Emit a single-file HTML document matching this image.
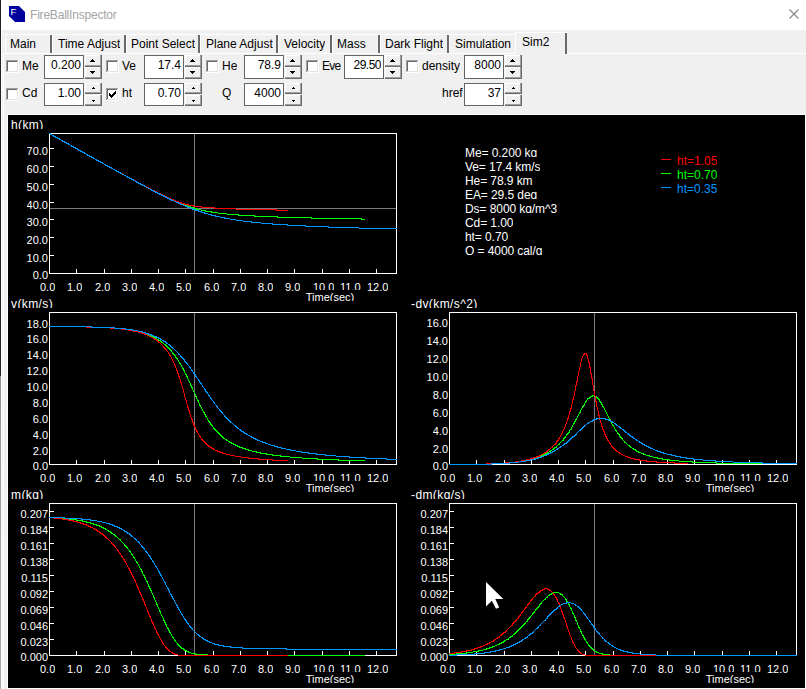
<!DOCTYPE html>
<html><head><meta charset="utf-8"><style>
*{margin:0;padding:0;box-sizing:content-box}
html,body{width:806px;height:689px;overflow:hidden;background:#f0f0f0;font-family:"Liberation Sans", sans-serif;position:relative}
.t{position:absolute;white-space:nowrap;overflow:hidden;line-height:20px}
.cb{position:absolute;width:11px;height:11px;background:#fff;border-top:1px solid #7a7a7a;border-left:1px solid #7a7a7a;border-right:1px solid #f8f8f8;border-bottom:1px solid #f8f8f8;box-shadow:inset 1px 1px 0 #a0a0a0}
.tb{position:absolute;background:#fff;border:1px solid #7a7a7a}
.sp{position:absolute;box-sizing:border-box;background:#f0f0f0;border-top:1px solid #fff;border-left:1px solid #fff;border-right:2px solid #696969;border-bottom:2px solid #696969}
.ar{position:absolute}
.tab{position:absolute;box-sizing:border-box;background:#f0f0f0;border-top:1px solid #fff;border-left:1px solid #fff;border-right:1px solid #696969}
.tabsel{position:absolute;box-sizing:border-box;background:#f0f0f0;border-top:1px solid #fff;border-left:1px solid #fff;border-right:2px solid #696969}
#title{position:absolute;left:0;top:0;width:806px;height:30px;background:#fff}
#lb{position:absolute;left:0;top:0;width:1px;height:689px;background:#2a2a2a}
#canvas{position:absolute;left:7px;top:114px;width:797px;height:573px;background:#000;border-right:1px solid #fff;border-bottom:1px solid #fff;border-left:1px solid #fff;border-top:1px solid #fff}
</style></head><body>
<div id="title"></div>
<svg style="position:absolute;left:0;top:0" width="806" height="30">
<path d="M9,6 L19,6 L25,12 L25,22 L15,22 L9,16 Z" fill="#00009c"/>
<text x="10.5" y="14.6" font-family="Liberation Sans" font-size="9.5" fill="#fff">F</text>
<path d="M789.5,9.5 L798.5,18.5 M798.5,9.5 L789.5,18.5" stroke="#8a8a8a" stroke-width="1.2"/>
</svg>
<div class="t" style="left:30px;top:5px;height:20px;font-size:12px;color:#a4a4a4;letter-spacing:-0.2px">FireBallInspector</div>
<div style="position:absolute;left:5px;top:34px;width:47px;height:19px;background:#fff"></div><div style="position:absolute;left:6px;top:35px;width:46px;height:18px;background:#f0f0f0"></div><div style="position:absolute;left:50px;top:35px;width:2px;height:18px;background:#696969"></div><div class="t" style="left:10px;top:34px;height:20px;font-size:12px;color:#000;">Main</div><div style="position:absolute;left:52px;top:34px;width:74px;height:19px;background:#fff"></div><div style="position:absolute;left:53px;top:35px;width:73px;height:18px;background:#f0f0f0"></div><div style="position:absolute;left:124px;top:35px;width:2px;height:18px;background:#696969"></div><div class="t" style="left:58px;top:34px;height:20px;font-size:12px;color:#000;">Time Adjust</div><div style="position:absolute;left:126px;top:34px;width:74px;height:19px;background:#fff"></div><div style="position:absolute;left:127px;top:35px;width:73px;height:18px;background:#f0f0f0"></div><div style="position:absolute;left:198px;top:35px;width:2px;height:18px;background:#696969"></div><div class="t" style="left:131px;top:34px;height:20px;font-size:12px;color:#000;">Point Select</div><div style="position:absolute;left:200px;top:34px;width:78px;height:19px;background:#fff"></div><div style="position:absolute;left:201px;top:35px;width:77px;height:18px;background:#f0f0f0"></div><div style="position:absolute;left:276px;top:35px;width:2px;height:18px;background:#696969"></div><div class="t" style="left:206px;top:34px;height:20px;font-size:12px;color:#000;">Plane Adjust</div><div style="position:absolute;left:278px;top:34px;width:54px;height:19px;background:#fff"></div><div style="position:absolute;left:279px;top:35px;width:53px;height:18px;background:#f0f0f0"></div><div style="position:absolute;left:330px;top:35px;width:2px;height:18px;background:#696969"></div><div class="t" style="left:284px;top:34px;height:20px;font-size:12px;color:#000;">Velocity</div><div style="position:absolute;left:332px;top:34px;width:48px;height:19px;background:#fff"></div><div style="position:absolute;left:333px;top:35px;width:47px;height:18px;background:#f0f0f0"></div><div style="position:absolute;left:378px;top:35px;width:2px;height:18px;background:#696969"></div><div class="t" style="left:337px;top:34px;height:20px;font-size:12px;color:#000;">Mass</div><div style="position:absolute;left:380px;top:34px;width:69px;height:19px;background:#fff"></div><div style="position:absolute;left:381px;top:35px;width:68px;height:18px;background:#f0f0f0"></div><div style="position:absolute;left:447px;top:35px;width:2px;height:18px;background:#696969"></div><div class="t" style="left:385px;top:34px;height:20px;font-size:12px;color:#000;">Dark Flight</div><div style="position:absolute;left:449px;top:34px;width:68px;height:19px;background:#fff"></div><div style="position:absolute;left:450px;top:35px;width:67px;height:18px;background:#f0f0f0"></div><div style="position:absolute;left:515px;top:35px;width:2px;height:18px;background:#696969"></div><div class="t" style="left:455px;top:34px;height:20px;font-size:12px;color:#000;">Simulation</div><div style="position:absolute;left:515px;top:32px;width:52px;height:22px;background:#fff"></div><div style="position:absolute;left:516px;top:33px;width:51px;height:21px;background:#f0f0f0"></div><div style="position:absolute;left:565px;top:33px;width:2px;height:21px;background:#696969"></div><div class="t" style="left:522px;top:32px;height:20px;font-size:12px;color:#000;">Sim2</div>
<div style="position:absolute;left:3px;top:53px;width:512px;height:1px;background:#fff"></div><div style="position:absolute;left:567px;top:53px;width:239px;height:1px;background:#fff"></div>
<div style="position:absolute;left:3px;top:53px;width:1px;height:636px;background:#fff"></div>
<div style="position:absolute;left:6px;top:60px;width:13px;height:13px;background:#fff"></div><div style="position:absolute;left:6px;top:60px;width:12px;height:1px;background:#a0a0a0"></div><div style="position:absolute;left:6px;top:60px;width:1px;height:12px;background:#a0a0a0"></div><div style="position:absolute;left:7px;top:61px;width:10px;height:1px;background:#696969"></div><div style="position:absolute;left:7px;top:61px;width:1px;height:10px;background:#696969"></div><div style="position:absolute;left:7px;top:71px;width:11px;height:1px;background:#e3e3e3"></div><div style="position:absolute;left:17px;top:61px;width:1px;height:11px;background:#e3e3e3"></div><div class="t" style="left:22px;top:56px;height:20px;font-size:12px;color:#000;">Me</div><div style="position:absolute;left:44px;top:55px;width:40px;height:24px;background:#646464"></div><div style="position:absolute;left:45px;top:56px;width:38px;height:22px;background:#fff"></div><div class="t" style="right:725px;text-align:right;top:55px;height:20px;font-size:12px;color:#000;">0.200</div><div style="position:absolute;left:85px;top:55px;width:17px;height:12px;background:#696969"></div><div style="position:absolute;left:85px;top:55px;width:16px;height:11px;background:#a0a0a0"></div><div style="position:absolute;left:85px;top:55px;width:15px;height:10px;background:#fff"></div><div style="position:absolute;left:86px;top:56px;width:14px;height:9px;background:#f0f0f0"></div><div style="position:absolute;left:85px;top:67px;width:17px;height:12px;background:#696969"></div><div style="position:absolute;left:85px;top:67px;width:16px;height:11px;background:#a0a0a0"></div><div style="position:absolute;left:85px;top:67px;width:15px;height:10px;background:#fff"></div><div style="position:absolute;left:86px;top:68px;width:14px;height:9px;background:#f0f0f0"></div><div style="position:absolute;left:92px;top:59px;width:1px;height:1px;background:#000"></div><div style="position:absolute;left:91px;top:60px;width:3px;height:1px;background:#000"></div><div style="position:absolute;left:90px;top:61px;width:5px;height:1px;background:#000"></div><div style="position:absolute;left:90px;top:71px;width:5px;height:1px;background:#000"></div><div style="position:absolute;left:91px;top:72px;width:3px;height:1px;background:#000"></div><div style="position:absolute;left:92px;top:73px;width:1px;height:1px;background:#000"></div><div style="position:absolute;left:106px;top:60px;width:13px;height:13px;background:#fff"></div><div style="position:absolute;left:106px;top:60px;width:12px;height:1px;background:#a0a0a0"></div><div style="position:absolute;left:106px;top:60px;width:1px;height:12px;background:#a0a0a0"></div><div style="position:absolute;left:107px;top:61px;width:10px;height:1px;background:#696969"></div><div style="position:absolute;left:107px;top:61px;width:1px;height:10px;background:#696969"></div><div style="position:absolute;left:107px;top:71px;width:11px;height:1px;background:#e3e3e3"></div><div style="position:absolute;left:117px;top:61px;width:1px;height:11px;background:#e3e3e3"></div><div class="t" style="left:122px;top:56px;height:20px;font-size:12px;color:#000;">Ve</div><div style="position:absolute;left:144px;top:55px;width:40px;height:24px;background:#646464"></div><div style="position:absolute;left:145px;top:56px;width:38px;height:22px;background:#fff"></div><div class="t" style="right:625px;text-align:right;top:55px;height:20px;font-size:12px;color:#000;">17.4</div><div style="position:absolute;left:185px;top:55px;width:17px;height:12px;background:#696969"></div><div style="position:absolute;left:185px;top:55px;width:16px;height:11px;background:#a0a0a0"></div><div style="position:absolute;left:185px;top:55px;width:15px;height:10px;background:#fff"></div><div style="position:absolute;left:186px;top:56px;width:14px;height:9px;background:#f0f0f0"></div><div style="position:absolute;left:185px;top:67px;width:17px;height:12px;background:#696969"></div><div style="position:absolute;left:185px;top:67px;width:16px;height:11px;background:#a0a0a0"></div><div style="position:absolute;left:185px;top:67px;width:15px;height:10px;background:#fff"></div><div style="position:absolute;left:186px;top:68px;width:14px;height:9px;background:#f0f0f0"></div><div style="position:absolute;left:192px;top:59px;width:1px;height:1px;background:#000"></div><div style="position:absolute;left:191px;top:60px;width:3px;height:1px;background:#000"></div><div style="position:absolute;left:190px;top:61px;width:5px;height:1px;background:#000"></div><div style="position:absolute;left:190px;top:71px;width:5px;height:1px;background:#000"></div><div style="position:absolute;left:191px;top:72px;width:3px;height:1px;background:#000"></div><div style="position:absolute;left:192px;top:73px;width:1px;height:1px;background:#000"></div><div style="position:absolute;left:206px;top:60px;width:13px;height:13px;background:#fff"></div><div style="position:absolute;left:206px;top:60px;width:12px;height:1px;background:#a0a0a0"></div><div style="position:absolute;left:206px;top:60px;width:1px;height:12px;background:#a0a0a0"></div><div style="position:absolute;left:207px;top:61px;width:10px;height:1px;background:#696969"></div><div style="position:absolute;left:207px;top:61px;width:1px;height:10px;background:#696969"></div><div style="position:absolute;left:207px;top:71px;width:11px;height:1px;background:#e3e3e3"></div><div style="position:absolute;left:217px;top:61px;width:1px;height:11px;background:#e3e3e3"></div><div class="t" style="left:222px;top:56px;height:20px;font-size:12px;color:#000;">He</div><div style="position:absolute;left:244px;top:55px;width:40px;height:24px;background:#646464"></div><div style="position:absolute;left:245px;top:56px;width:38px;height:22px;background:#fff"></div><div class="t" style="right:525px;text-align:right;top:55px;height:20px;font-size:12px;color:#000;">78.9</div><div style="position:absolute;left:285px;top:55px;width:17px;height:12px;background:#696969"></div><div style="position:absolute;left:285px;top:55px;width:16px;height:11px;background:#a0a0a0"></div><div style="position:absolute;left:285px;top:55px;width:15px;height:10px;background:#fff"></div><div style="position:absolute;left:286px;top:56px;width:14px;height:9px;background:#f0f0f0"></div><div style="position:absolute;left:285px;top:67px;width:17px;height:12px;background:#696969"></div><div style="position:absolute;left:285px;top:67px;width:16px;height:11px;background:#a0a0a0"></div><div style="position:absolute;left:285px;top:67px;width:15px;height:10px;background:#fff"></div><div style="position:absolute;left:286px;top:68px;width:14px;height:9px;background:#f0f0f0"></div><div style="position:absolute;left:292px;top:59px;width:1px;height:1px;background:#000"></div><div style="position:absolute;left:291px;top:60px;width:3px;height:1px;background:#000"></div><div style="position:absolute;left:290px;top:61px;width:5px;height:1px;background:#000"></div><div style="position:absolute;left:290px;top:71px;width:5px;height:1px;background:#000"></div><div style="position:absolute;left:291px;top:72px;width:3px;height:1px;background:#000"></div><div style="position:absolute;left:292px;top:73px;width:1px;height:1px;background:#000"></div><div style="position:absolute;left:306px;top:60px;width:13px;height:13px;background:#fff"></div><div style="position:absolute;left:306px;top:60px;width:12px;height:1px;background:#a0a0a0"></div><div style="position:absolute;left:306px;top:60px;width:1px;height:12px;background:#a0a0a0"></div><div style="position:absolute;left:307px;top:61px;width:10px;height:1px;background:#696969"></div><div style="position:absolute;left:307px;top:61px;width:1px;height:10px;background:#696969"></div><div style="position:absolute;left:307px;top:71px;width:11px;height:1px;background:#e3e3e3"></div><div style="position:absolute;left:317px;top:61px;width:1px;height:11px;background:#e3e3e3"></div><div class="t" style="left:322px;top:56px;height:20px;font-size:12px;color:#000;letter-spacing:-0.7px">Eve</div><div style="position:absolute;left:344px;top:55px;width:40px;height:24px;background:#646464"></div><div style="position:absolute;left:345px;top:56px;width:38px;height:22px;background:#fff"></div><div class="t" style="right:425px;text-align:right;top:55px;height:20px;font-size:12px;color:#000;letter-spacing:-0.5px">29.50</div><div style="position:absolute;left:385px;top:55px;width:17px;height:12px;background:#696969"></div><div style="position:absolute;left:385px;top:55px;width:16px;height:11px;background:#a0a0a0"></div><div style="position:absolute;left:385px;top:55px;width:15px;height:10px;background:#fff"></div><div style="position:absolute;left:386px;top:56px;width:14px;height:9px;background:#f0f0f0"></div><div style="position:absolute;left:385px;top:67px;width:17px;height:12px;background:#696969"></div><div style="position:absolute;left:385px;top:67px;width:16px;height:11px;background:#a0a0a0"></div><div style="position:absolute;left:385px;top:67px;width:15px;height:10px;background:#fff"></div><div style="position:absolute;left:386px;top:68px;width:14px;height:9px;background:#f0f0f0"></div><div style="position:absolute;left:392px;top:59px;width:1px;height:1px;background:#000"></div><div style="position:absolute;left:391px;top:60px;width:3px;height:1px;background:#000"></div><div style="position:absolute;left:390px;top:61px;width:5px;height:1px;background:#000"></div><div style="position:absolute;left:390px;top:71px;width:5px;height:1px;background:#000"></div><div style="position:absolute;left:391px;top:72px;width:3px;height:1px;background:#000"></div><div style="position:absolute;left:392px;top:73px;width:1px;height:1px;background:#000"></div><div style="position:absolute;left:406px;top:60px;width:13px;height:13px;background:#fff"></div><div style="position:absolute;left:406px;top:60px;width:12px;height:1px;background:#a0a0a0"></div><div style="position:absolute;left:406px;top:60px;width:1px;height:12px;background:#a0a0a0"></div><div style="position:absolute;left:407px;top:61px;width:10px;height:1px;background:#696969"></div><div style="position:absolute;left:407px;top:61px;width:1px;height:10px;background:#696969"></div><div style="position:absolute;left:407px;top:71px;width:11px;height:1px;background:#e3e3e3"></div><div style="position:absolute;left:417px;top:61px;width:1px;height:11px;background:#e3e3e3"></div><div class="t" style="left:422px;top:56px;height:20px;font-size:12px;color:#000;">density</div><div style="position:absolute;left:464px;top:55px;width:40px;height:24px;background:#646464"></div><div style="position:absolute;left:465px;top:56px;width:38px;height:22px;background:#fff"></div><div class="t" style="right:305px;text-align:right;top:55px;height:20px;font-size:12px;color:#000;">8000</div><div style="position:absolute;left:505px;top:55px;width:17px;height:12px;background:#696969"></div><div style="position:absolute;left:505px;top:55px;width:16px;height:11px;background:#a0a0a0"></div><div style="position:absolute;left:505px;top:55px;width:15px;height:10px;background:#fff"></div><div style="position:absolute;left:506px;top:56px;width:14px;height:9px;background:#f0f0f0"></div><div style="position:absolute;left:505px;top:67px;width:17px;height:12px;background:#696969"></div><div style="position:absolute;left:505px;top:67px;width:16px;height:11px;background:#a0a0a0"></div><div style="position:absolute;left:505px;top:67px;width:15px;height:10px;background:#fff"></div><div style="position:absolute;left:506px;top:68px;width:14px;height:9px;background:#f0f0f0"></div><div style="position:absolute;left:512px;top:59px;width:1px;height:1px;background:#000"></div><div style="position:absolute;left:511px;top:60px;width:3px;height:1px;background:#000"></div><div style="position:absolute;left:510px;top:61px;width:5px;height:1px;background:#000"></div><div style="position:absolute;left:510px;top:71px;width:5px;height:1px;background:#000"></div><div style="position:absolute;left:511px;top:72px;width:3px;height:1px;background:#000"></div><div style="position:absolute;left:512px;top:73px;width:1px;height:1px;background:#000"></div><div style="position:absolute;left:6px;top:88px;width:13px;height:13px;background:#fff"></div><div style="position:absolute;left:6px;top:88px;width:12px;height:1px;background:#a0a0a0"></div><div style="position:absolute;left:6px;top:88px;width:1px;height:12px;background:#a0a0a0"></div><div style="position:absolute;left:7px;top:89px;width:10px;height:1px;background:#696969"></div><div style="position:absolute;left:7px;top:89px;width:1px;height:10px;background:#696969"></div><div style="position:absolute;left:7px;top:99px;width:11px;height:1px;background:#e3e3e3"></div><div style="position:absolute;left:17px;top:89px;width:1px;height:11px;background:#e3e3e3"></div><div class="t" style="left:22px;top:83px;height:20px;font-size:12px;color:#000;">Cd</div><div style="position:absolute;left:44px;top:83px;width:40px;height:23px;background:#646464"></div><div style="position:absolute;left:45px;top:84px;width:38px;height:21px;background:#fff"></div><div class="t" style="right:725px;text-align:right;top:83px;height:20px;font-size:12px;color:#000;">1.00</div><div style="position:absolute;left:85px;top:83px;width:17px;height:11px;background:#696969"></div><div style="position:absolute;left:85px;top:83px;width:16px;height:10px;background:#a0a0a0"></div><div style="position:absolute;left:85px;top:83px;width:15px;height:9px;background:#fff"></div><div style="position:absolute;left:86px;top:84px;width:14px;height:8px;background:#f0f0f0"></div><div style="position:absolute;left:85px;top:95px;width:17px;height:11px;background:#696969"></div><div style="position:absolute;left:85px;top:95px;width:16px;height:10px;background:#a0a0a0"></div><div style="position:absolute;left:85px;top:95px;width:15px;height:9px;background:#fff"></div><div style="position:absolute;left:86px;top:96px;width:14px;height:8px;background:#f0f0f0"></div><div style="position:absolute;left:93px;top:87px;width:1px;height:1px;background:#000"></div><div style="position:absolute;left:92px;top:88px;width:3px;height:1px;background:#000"></div><div style="position:absolute;left:92px;top:100px;width:3px;height:1px;background:#000"></div><div style="position:absolute;left:93px;top:101px;width:1px;height:1px;background:#000"></div><div style="position:absolute;left:106px;top:88px;width:13px;height:13px;background:#fff"></div><div style="position:absolute;left:106px;top:88px;width:12px;height:1px;background:#a0a0a0"></div><div style="position:absolute;left:106px;top:88px;width:1px;height:12px;background:#a0a0a0"></div><div style="position:absolute;left:107px;top:89px;width:10px;height:1px;background:#696969"></div><div style="position:absolute;left:107px;top:89px;width:1px;height:10px;background:#696969"></div><div style="position:absolute;left:107px;top:99px;width:11px;height:1px;background:#e3e3e3"></div><div style="position:absolute;left:117px;top:89px;width:1px;height:11px;background:#e3e3e3"></div><div style="position:absolute;left:109px;top:93px;width:1px;height:3px;background:#000"></div><div style="position:absolute;left:110px;top:94px;width:1px;height:3px;background:#000"></div><div style="position:absolute;left:111px;top:95px;width:1px;height:3px;background:#000"></div><div style="position:absolute;left:112px;top:94px;width:1px;height:3px;background:#000"></div><div style="position:absolute;left:113px;top:93px;width:1px;height:3px;background:#000"></div><div style="position:absolute;left:114px;top:92px;width:1px;height:3px;background:#000"></div><div style="position:absolute;left:115px;top:91px;width:1px;height:3px;background:#000"></div><div class="t" style="left:122px;top:83px;height:20px;font-size:12px;color:#000;">ht</div><div style="position:absolute;left:144px;top:83px;width:40px;height:23px;background:#646464"></div><div style="position:absolute;left:145px;top:84px;width:38px;height:21px;background:#fff"></div><div class="t" style="right:625px;text-align:right;top:83px;height:20px;font-size:12px;color:#000;">0.70</div><div style="position:absolute;left:185px;top:83px;width:17px;height:11px;background:#696969"></div><div style="position:absolute;left:185px;top:83px;width:16px;height:10px;background:#a0a0a0"></div><div style="position:absolute;left:185px;top:83px;width:15px;height:9px;background:#fff"></div><div style="position:absolute;left:186px;top:84px;width:14px;height:8px;background:#f0f0f0"></div><div style="position:absolute;left:185px;top:95px;width:17px;height:11px;background:#696969"></div><div style="position:absolute;left:185px;top:95px;width:16px;height:10px;background:#a0a0a0"></div><div style="position:absolute;left:185px;top:95px;width:15px;height:9px;background:#fff"></div><div style="position:absolute;left:186px;top:96px;width:14px;height:8px;background:#f0f0f0"></div><div style="position:absolute;left:193px;top:87px;width:1px;height:1px;background:#000"></div><div style="position:absolute;left:192px;top:88px;width:3px;height:1px;background:#000"></div><div style="position:absolute;left:192px;top:100px;width:3px;height:1px;background:#000"></div><div style="position:absolute;left:193px;top:101px;width:1px;height:1px;background:#000"></div><div class="t" style="left:222px;top:83px;height:20px;font-size:12px;color:#000;">Q</div><div style="position:absolute;left:244px;top:83px;width:40px;height:23px;background:#646464"></div><div style="position:absolute;left:245px;top:84px;width:38px;height:21px;background:#fff"></div><div class="t" style="right:525px;text-align:right;top:83px;height:20px;font-size:12px;color:#000;">4000</div><div style="position:absolute;left:285px;top:83px;width:17px;height:11px;background:#696969"></div><div style="position:absolute;left:285px;top:83px;width:16px;height:10px;background:#a0a0a0"></div><div style="position:absolute;left:285px;top:83px;width:15px;height:9px;background:#fff"></div><div style="position:absolute;left:286px;top:84px;width:14px;height:8px;background:#f0f0f0"></div><div style="position:absolute;left:285px;top:95px;width:17px;height:11px;background:#696969"></div><div style="position:absolute;left:285px;top:95px;width:16px;height:10px;background:#a0a0a0"></div><div style="position:absolute;left:285px;top:95px;width:15px;height:9px;background:#fff"></div><div style="position:absolute;left:286px;top:96px;width:14px;height:8px;background:#f0f0f0"></div><div style="position:absolute;left:293px;top:87px;width:1px;height:1px;background:#000"></div><div style="position:absolute;left:292px;top:88px;width:3px;height:1px;background:#000"></div><div style="position:absolute;left:292px;top:100px;width:3px;height:1px;background:#000"></div><div style="position:absolute;left:293px;top:101px;width:1px;height:1px;background:#000"></div><div class="t" style="left:442px;top:83px;height:20px;font-size:12px;color:#000;">href</div><div style="position:absolute;left:464px;top:83px;width:40px;height:23px;background:#646464"></div><div style="position:absolute;left:465px;top:84px;width:38px;height:21px;background:#fff"></div><div class="t" style="right:305px;text-align:right;top:83px;height:20px;font-size:12px;color:#000;">37</div><div style="position:absolute;left:505px;top:83px;width:17px;height:11px;background:#696969"></div><div style="position:absolute;left:505px;top:83px;width:16px;height:10px;background:#a0a0a0"></div><div style="position:absolute;left:505px;top:83px;width:15px;height:9px;background:#fff"></div><div style="position:absolute;left:506px;top:84px;width:14px;height:8px;background:#f0f0f0"></div><div style="position:absolute;left:505px;top:95px;width:17px;height:11px;background:#696969"></div><div style="position:absolute;left:505px;top:95px;width:16px;height:10px;background:#a0a0a0"></div><div style="position:absolute;left:505px;top:95px;width:15px;height:9px;background:#fff"></div><div style="position:absolute;left:506px;top:96px;width:14px;height:8px;background:#f0f0f0"></div><div style="position:absolute;left:513px;top:87px;width:1px;height:1px;background:#000"></div><div style="position:absolute;left:512px;top:88px;width:3px;height:1px;background:#000"></div><div style="position:absolute;left:512px;top:100px;width:3px;height:1px;background:#000"></div><div style="position:absolute;left:513px;top:101px;width:1px;height:1px;background:#000"></div>
<div id="canvas"></div>
<svg style="position:absolute;left:0;top:0" width="806" height="689" shape-rendering="crispEdges">
<line x1="194.5" y1="133" x2="194.5" y2="274" stroke="#7a7a7a"/><line x1="49" y1="208.5" x2="397" y2="208.5" stroke="#7a7a7a"/><rect x="49.5" y="133.5" width="347" height="140" fill="none" stroke="#fff"/><line x1="76.5" y1="269" x2="76.5" y2="273" stroke="#fff"/><line x1="104.5" y1="269" x2="104.5" y2="273" stroke="#fff"/><line x1="131.5" y1="269" x2="131.5" y2="273" stroke="#fff"/><line x1="158.5" y1="269" x2="158.5" y2="273" stroke="#fff"/><line x1="185.5" y1="269" x2="185.5" y2="273" stroke="#fff"/><line x1="213.5" y1="269" x2="213.5" y2="273" stroke="#fff"/><line x1="240.5" y1="269" x2="240.5" y2="273" stroke="#fff"/><line x1="267.5" y1="269" x2="267.5" y2="273" stroke="#fff"/><line x1="294.5" y1="269" x2="294.5" y2="273" stroke="#fff"/><line x1="322.5" y1="269" x2="322.5" y2="273" stroke="#fff"/><line x1="349.5" y1="269" x2="349.5" y2="273" stroke="#fff"/><line x1="376.5" y1="269" x2="376.5" y2="273" stroke="#fff"/><line x1="49" y1="255.5" x2="54" y2="255.5" stroke="#fff"/><line x1="49" y1="237.5" x2="54" y2="237.5" stroke="#fff"/><line x1="49" y1="219.5" x2="54" y2="219.5" stroke="#fff"/><line x1="49" y1="202.5" x2="54" y2="202.5" stroke="#fff"/><line x1="49" y1="184.5" x2="54" y2="184.5" stroke="#fff"/><line x1="49" y1="166.5" x2="54" y2="166.5" stroke="#fff"/><line x1="49" y1="148.5" x2="54" y2="148.5" stroke="#fff"/><polyline points="49.5,133.5 50,133.5 50,134 50.5,134 51,134.5 51.5,134.5 52,135 52.5,135 53,135.5 53.5,135.5 53.5,136 54,136 54.5,136 54.5,136.5 55,136.5 55.5,137 56,137 56.5,137.5 57,137.5 57,138 57.5,138 58,138 58,138.5 58.5,138.5 59,138.5 59,139 59.5,139 60,139.5 60.5,139.5 61,140 61.5,140 62,140.5 62.5,140.5 62.5,141 63,141 63.5,141.5 64,141.5 64.5,142 65,142 65.5,142.5 66,142.5 66,143 66.5,143 67,143 67,143.5 67.5,143.5 68,143.5 68,144 68.5,144 69,144.5 69.5,144.5 70,145 70.5,145 71,145.5 71.5,145.5 71.5,146 72,146 72.5,146.5 73,146.5 73.5,147 74,147 74.5,147.5 75,147.5 75,148 75.5,148 76,148 76,148.5 76.5,148.5 77,148.5 77,149 77.5,149 78,149.5 78.5,149.5 78.5,150 79,150 79.5,150 80,150.5 80.5,150.5 80.5,151 81,151 81.5,151.5 82,151.5 82.5,152 83,152 83.5,152.5 84,152.5 84,153 84.5,153 85,153 85,153.5 85.5,153.5 86,154 86.5,154 87,154.5 87.5,154.5 87.5,155 88,155 88.5,155 88.5,155.5 89,155.5 89.5,155.5 89.5,156 90,156 90.5,156.5 91,156.5 91.5,157 92,157 92.5,157.5 93,157.5 93,158 93.5,158 94,158 94,158.5 94.5,158.5 95,159 95.5,159 96,159.5 96.5,159.5 96.5,160 97,160 97.5,160 97.5,160.5 98,160.5 98.5,160.5 98.5,161 99,161 99.5,161.5 100,161.5 100.5,162 101,162 101.5,162.5 102,162.5 102,163 102.5,163 103,163 103,163.5 103.5,163.5 104,164 104.5,164 105,164.5 105.5,164.5 106,165 106.5,165 106.5,165.5 107,165.5 107.5,165.5 107.5,166 108,166 108.5,166.5 109,166.5 109.5,167 110,167 110.5,167.5 111,167.5 111,168 111.5,168 112,168 112,168.5 112.5,168.5 113,169 113.5,169 114,169.5 114.5,169.5 115,170 115.5,170 115.5,170.5 116,170.5 116.5,170.5 116.5,171 117,171 117.5,171 117.5,171.5 118,171.5 118.5,172 119,172 119.5,172.5 120,172.5 120.5,173 121,173 121,173.5 121.5,173.5 122,174 122.5,174 123,174 123,174.5 123.5,174.5 124,175 124.5,175 124.5,175.5 125,175.5 125.5,175.5 126,176 126.5,176 126.5,176.5 127,176.5 127.5,176.5 127.5,177 128,177 128.5,177 128.5,177.5 129,177.5 129.5,178 130,178 130.5,178.5 131,178.5 131.5,179 132,179 132,179.5 132.5,179.5 133,179.5 133,180 133.5,180 134,180.5 134.5,180.5 135,180.5 135,181 135.5,181 136,181.5 136.5,181.5 136.5,182 137,182 137.5,182 138,182.5 138.5,182.5 138.5,183 139,183 139.5,183 139.5,183.5 140,183.5 140.5,183.5 140.5,184 141,184 141.5,184 141.5,184.5 142,184.5 142.5,185 143,185 143.5,185.5 144,185.5 144.5,186 145,186 145,186.5 145.5,186.5 146,186.5 146.5,187 147,187 147,187.5 147.5,187.5 148,187.5 148,188 148.5,188 149,188.5 149.5,188.5 150,188.5 150,189 150.5,189 151,189.5 151.5,189.5 152,190 152.5,190 153,190.5 153.5,190.5 154,191 154.5,191 155,191.5 155.5,191.5 156,192 156.5,192 157,192.5 157.5,192.5 157.5,193 158,193 158.5,193 159,193.5 159.5,193.5 160,194 160.5,194 160.5,194.5 161,194.5 161.5,194.5 162,195 162.5,195 163,195.5 163.5,195.5 164,196 164.5,196 165,196.5 165.5,196.5 166,197 166.5,197 167,197.5 167.5,197.5 168,197.5 168,198 168.5,198 169,198 169,198.5 169.5,198.5 170,198.5 170,199 170.5,199 171,199 171.5,199.5 172,199.5 172.5,200 173,200 173.5,200.5 174,200.5 174.5,200.5 174.5,201 175,201 175.5,201 175.5,201.5 176,201.5 176.5,201.5 177,202 177.5,202 178,202 178,202.5 178.5,202.5 179,202.5 179,203 179.5,203 180,203 180.5,203 180.5,203.5 181,203.5 181.5,203.5 181.5,204 182,204 182.5,204 183,204 183,204.5 183.5,204.5 184,204.5 184.5,205 185,205 185.5,205 186,205.5 186.5,205.5 187,205.5 187,206 187.5,206 188,206 188.5,206.5 189,206.5 189.5,206.5 190,206.5 190,207 190.5,207 191,207 191.5,207.5 192,207.5 192.5,207.5 193,207.5 193,208 193.5,208 194,208 194.5,208 195,208 195,208.5 195.5,208.5 196,208.5 196.5,208.5 196.5,209 197,209 197.5,209 198,209 198.5,209 198.5,209.5 199,209.5 199.5,209.5 200,209.5 200.5,209.5 201,210 201.5,210 202,210 202.5,210 203,210.5 203.5,210.5 204,210.5 204.5,210.5 205,210.5 205.5,211 206,211 206.5,211 207,211 207.5,211 208,211 208,211.5 208.5,211.5 209,211.5 209.5,211.5 210,211.5 210.5,211.5 211,211.5 211,212 211.5,212 212,212 212.5,212 213,212 213.5,212 214,212 214.5,212.5 215,212.5 215.5,212.5 216,212.5 216.5,212.5 217,212.5 217.5,212.5 218,213 218.5,213 219,213 219.5,213 220,213 220.5,213 221,213 221.5,213 222,213 222,213.5 222.5,213.5 223,213.5 223.5,213.5 224,213.5 224.5,213.5 225,213.5 225.5,213.5 226,213.5 226.5,213.5 227,214 227.5,214 228,214 228.5,214 229,214 229.5,214 230,214 230.5,214 231,214 231.5,214 232,214 232.5,214.5 233,214.5 233.5,214.5 234,214.5 234.5,214.5 235,214.5 235.5,214.5 236,214.5 236.5,214.5 237,214.5 237.5,214.5 238,214.5 238.5,214.5 238.5,215 239,215 239.5,215 240,215 240.5,215 241,215 241.5,215 242,215 242.5,215 243,215 243.5,215 244,215 244.5,215 245,215 245.5,215 246,215.5 246.5,215.5 247,215.5 247.5,215.5 248,215.5 248.5,215.5 249,215.5 249.5,215.5 250,215.5 250.5,215.5 251,215.5 251.5,215.5 252,215.5 252.5,215.5 253,215.5 253.5,215.5 254,215.5 254.5,215.5 254.5,216 255,216 255.5,216 256,216 256.5,216 257,216 257.5,216 258,216 258.5,216 259,216 259.5,216 260,216 260.5,216 261,216 261.5,216 262,216 262.5,216 263,216 263.5,216 264,216 264.5,216 265,216 265.5,216.5 266,216.5 266.5,216.5 267,216.5 267.5,216.5 268,216.5 268.5,216.5 269,216.5 269.5,216.5 270,216.5 270.5,216.5 271,216.5 271.5,216.5 272,216.5 272.5,216.5 273,216.5 273.5,216.5 274,216.5 274.5,216.5 275,216.5 275.5,216.5 276,216.5 276.5,216.5 277,216.5 277.5,216.5 277.5,217 278,217 278.5,217 279,217 279.5,217 280,217 280.5,217 281,217 281.5,217 282,217 282.5,217 283,217 283.5,217 284,217 284.5,217 285,217 285.5,217 286,217 286.5,217 287,217 287.5,217 288,217 288.5,217 289,217 289.5,217 290,217 290.5,217 291,217 291.5,217 292,217 292.5,217 293,217.5 293.5,217.5 294,217.5 294.5,217.5 295,217.5 295.5,217.5 296,217.5 296.5,217.5 297,217.5 297.5,217.5 298,217.5 298.5,217.5 299,217.5 299.5,217.5 300,217.5 300.5,217.5 301,217.5 301.5,217.5 302,217.5 302.5,217.5 303,217.5 303.5,217.5 304,217.5 304.5,217.5 305,217.5 305.5,217.5 306,217.5 306.5,217.5 307,217.5 307.5,217.5 308,217.5 308.5,217.5 309,217.5 309.5,217.5 310,217.5 310.5,217.5 311,217.5 311,218 311.5,218 312,218 312.5,218 313,218 313.5,218 314,218 314.5,218 315,218 315.5,218 316,218 316.5,218 317,218 317.5,218 318,218 318.5,218 319,218 319.5,218 320,218 320.5,218 321,218 321.5,218 322,218 322.5,218 323,218 323.5,218 324,218 324.5,218 325,218 325.5,218 326,218 326.5,218 327,218 327.5,218 328,218 328.5,218 329,218 329.5,218 330,218 330.5,218 331,218 331.5,218 332,218 332.5,218 333,218 333.5,218 334,218.5 334.5,218.5 335,218.5 335.5,218.5 336,218.5 336.5,218.5 337,218.5 337.5,218.5 338,218.5 338.5,218.5 339,218.5 339.5,218.5 340,218.5 340.5,218.5 341,218.5 341.5,218.5 342,218.5 342.5,218.5 343,218.5 343.5,218.5 344,218.5 344.5,218.5 345,218.5 345.5,218.5 346,218.5 346.5,218.5 347,218.5 347.5,218.5 348,218.5 348.5,218.5 349,218.5 349.5,218.5 350,218.5 350.5,218.5 351,218.5 351.5,218.5 352,218.5 352.5,218.5 353,218.5 353.5,218.5 354,218.5 354.5,218.5 355,218.5 355.5,218.5 356,218.5 356.5,218.5 357,218.5 357.5,218.5 358,218.5 358.5,218.5 359,218.5 359.5,218.5 360,218.5 360.5,218.5 361,218.5 361.5,218.5 361.5,219 362,219 362.5,219 363,219 363.5,219 364,219 364.5,219" fill="none" stroke="#00ff00" stroke-linecap="square"/><polyline points="49.5,133.5 50,133.5 50,134 50.5,134 51,134.5 51.5,134.5 52,135 52.5,135 53,135.5 53.5,135.5 53.5,136 54,136 54.5,136 54.5,136.5 55,136.5 55.5,137 56,137 56.5,137.5 57,137.5 57,138 57.5,138 58,138 58,138.5 58.5,138.5 59,138.5 59,139 59.5,139 60,139.5 60.5,139.5 61,140 61.5,140 62,140.5 62.5,140.5 62.5,141 63,141 63.5,141.5 64,141.5 64.5,142 65,142 65.5,142.5 66,142.5 66,143 66.5,143 67,143 67,143.5 67.5,143.5 68,143.5 68,144 68.5,144 69,144.5 69.5,144.5 70,145 70.5,145 71,145.5 71.5,145.5 71.5,146 72,146 72.5,146.5 73,146.5 73.5,147 74,147 74.5,147.5 75,147.5 75,148 75.5,148 76,148 76,148.5 76.5,148.5 77,148.5 77,149 77.5,149 78,149.5 78.5,149.5 78.5,150 79,150 79.5,150 80,150.5 80.5,150.5 80.5,151 81,151 81.5,151.5 82,151.5 82.5,152 83,152 83.5,152.5 84,152.5 84,153 84.5,153 85,153 85,153.5 85.5,153.5 86,154 86.5,154 87,154.5 87.5,154.5 87.5,155 88,155 88.5,155 88.5,155.5 89,155.5 89.5,155.5 89.5,156 90,156 90.5,156.5 91,156.5 91.5,157 92,157 92.5,157.5 93,157.5 93,158 93.5,158 94,158 94,158.5 94.5,158.5 95,159 95.5,159 96,159.5 96.5,159.5 96.5,160 97,160 97.5,160 97.5,160.5 98,160.5 98.5,160.5 98.5,161 99,161 99.5,161.5 100,161.5 100.5,162 101,162 101.5,162.5 102,162.5 102,163 102.5,163 103,163 103,163.5 103.5,163.5 104,164 104.5,164 105,164.5 105.5,164.5 106,165 106.5,165 106.5,165.5 107,165.5 107.5,165.5 107.5,166 108,166 108.5,166 108.5,166.5 109,166.5 109.5,167 110,167 110.5,167.5 111,167.5 111.5,168 112,168 112,168.5 112.5,168.5 113,169 113.5,169 114,169.5 114.5,169.5 115,170 115.5,170 115.5,170.5 116,170.5 116.5,170.5 116.5,171 117,171 117.5,171 117.5,171.5 118,171.5 118.5,172 119,172 119.5,172 119.5,172.5 120,172.5 120.5,173 121,173 121,173.5 121.5,173.5 122,173.5 122.5,174 123,174 123,174.5 123.5,174.5 124,175 124.5,175 125,175.5 125.5,175.5 126,176 126.5,176 126.5,176.5 127,176.5 127.5,176.5 127.5,177 128,177 128.5,177 128.5,177.5 129,177.5 129.5,178 130,178 130.5,178.5 131,178.5 131.5,179 132,179 132.5,179.5 133,179.5 133,180 133.5,180 134,180.5 134.5,180.5 135,180.5 135,181 135.5,181 136,181.5 136.5,181.5 137,182 137.5,182 138,182.5 138.5,182.5 138.5,183 139,183 139.5,183 139.5,183.5 140,183.5 140.5,183.5 140.5,184 141,184 141.5,184 141.5,184.5 142,184.5 142.5,185 143,185 143.5,185 143.5,185.5 144,185.5 144.5,186 145,186 145.5,186.5 146,186.5 146.5,187 147,187 147.5,187.5 148,187.5 148,188 148.5,188 149,188 149.5,188.5 150,188.5 150,189 150.5,189 151,189 151,189.5 151.5,189.5 152,190 152.5,190 153,190 153,190.5 153.5,190.5 154,190.5 154,191 154.5,191 155,191.5 155.5,191.5 156,191.5 156,192 156.5,192 157,192.5 157.5,192.5 158,193 158.5,193 159,193 159,193.5 159.5,193.5 160,193.5 160,194 160.5,194 161,194.5 161.5,194.5 162,194.5 162,195 162.5,195 163,195 163,195.5 163.5,195.5 164,195.5 164,196 164.5,196 165,196 165.5,196.5 166,196.5 166.5,197 167,197 167.5,197.5 168,197.5 168.5,197.5 168.5,198 169,198 169.5,198 169.5,198.5 170,198.5 170.5,198.5 171,199 171.5,199 172,199.5 172.5,199.5 173,199.5 173,200 173.5,200 174,200 174.5,200.5 175,200.5 175.5,200.5 175.5,201 176,201 176.5,201 177,201 177,201.5 177.5,201.5 178,201.5 178,202 178.5,202 179,202 179.5,202 180,202.5 180.5,202.5 181,202.5 181,203 181.5,203 182,203 182.5,203 183,203.5 183.5,203.5 184,203.5 184.5,204 185,204 185.5,204 186,204 186.5,204.5 187,204.5 187.5,204.5 188,204.5 188.5,205 189,205 189.5,205 190,205 190.5,205 191,205.5 191.5,205.5 192,205.5 192.5,205.5 193,205.5 193.5,205.5 193.5,206 194,206 194.5,206 195,206 195.5,206 196,206 196.5,206 197,206 197,206.5 197.5,206.5 198,206.5 198.5,206.5 199,206.5 199.5,206.5 200,206.5 200.5,206.5 201,206.5 201.5,207 202,207 202.5,207 203,207 203.5,207 204,207 204.5,207 205,207 205.5,207 206,207 206.5,207 207,207.5 207.5,207.5 208,207.5 208.5,207.5 209,207.5 209.5,207.5 210,207.5 210.5,207.5 211,207.5 211.5,207.5 212,207.5 212.5,207.5 213,207.5 213.5,207.5 214,207.5 214,208 214.5,208 215,208 215.5,208 216,208 216.5,208 217,208 217.5,208 218,208 218.5,208 219,208 219.5,208 220,208 220.5,208 221,208 221.5,208 222,208 222.5,208 223,208 223.5,208.5 224,208.5 224.5,208.5 225,208.5 225.5,208.5 226,208.5 226.5,208.5 227,208.5 227.5,208.5 228,208.5 228.5,208.5 229,208.5 229.5,208.5 230,208.5 230.5,208.5 231,208.5 231.5,208.5 232,208.5 232.5,208.5 233,208.5 233.5,208.5 234,208.5 234.5,208.5 235,208.5 235.5,208.5 236,209 236.5,209 237,209 237.5,209 238,209 238.5,209 239,209 239.5,209 240,209 240.5,209 241,209 241.5,209 242,209 242.5,209 243,209 243.5,209 244,209 244.5,209 245,209 245.5,209 246,209 246.5,209 247,209 247.5,209 248,209 248.5,209 249,209 249.5,209 250,209 250.5,209 251,209 251.5,209 252,209 252.5,209 253,209 253,209.5 253.5,209.5 254,209.5 254.5,209.5 255,209.5 255.5,209.5 256,209.5 256.5,209.5 257,209.5 257.5,209.5 258,209.5 258.5,209.5 259,209.5 259.5,209.5 260,209.5 260.5,209.5 261,209.5 261.5,209.5 262,209.5 262.5,209.5 263,209.5 263.5,209.5 264,209.5 264.5,209.5 265,209.5 265.5,209.5 266,209.5 266.5,209.5 267,209.5 267.5,209.5 268,209.5 268.5,209.5 269,209.5 269.5,209.5 270,209.5 270.5,209.5 271,209.5 271.5,209.5 272,209.5 272.5,209.5 273,209.5 273.5,209.5 274,209.5 274.5,209.5 275,209.5 275.5,209.5 276,209.5 276.5,209.5 276.5,210 277,210 277.5,210 278,210 278.5,210 279,210 279.5,210 280,210 280.5,210 281,210 281.5,210 282,210 282.5,210 283,210 283.5,210 284,210 284.5,210 285,210 285.5,210 286,210 286.5,210 287,210 287.5,210" fill="none" stroke="#ff0000" stroke-linecap="square"/><polyline points="49.5,133.5 50,133.5 50,134 50.5,134 51,134.5 51.5,134.5 52,135 52.5,135 53,135.5 53.5,135.5 53.5,136 54,136 54.5,136 54.5,136.5 55,136.5 55.5,137 56,137 56.5,137.5 57,137.5 57,138 57.5,138 58,138 58,138.5 58.5,138.5 59,138.5 59,139 59.5,139 60,139.5 60.5,139.5 61,140 61.5,140 62,140.5 62.5,140.5 62.5,141 63,141 63.5,141.5 64,141.5 64.5,142 65,142 65.5,142.5 66,142.5 66,143 66.5,143 67,143 67,143.5 67.5,143.5 68,143.5 68,144 68.5,144 69,144.5 69.5,144.5 70,145 70.5,145 71,145.5 71.5,145.5 71.5,146 72,146 72.5,146.5 73,146.5 73.5,147 74,147 74.5,147.5 75,147.5 75,148 75.5,148 76,148 76,148.5 76.5,148.5 77,148.5 77,149 77.5,149 78,149.5 78.5,149.5 78.5,150 79,150 79.5,150 80,150.5 80.5,150.5 80.5,151 81,151 81.5,151.5 82,151.5 82.5,152 83,152 83.5,152.5 84,152.5 84,153 84.5,153 85,153 85,153.5 85.5,153.5 86,154 86.5,154 87,154.5 87.5,154.5 87.5,155 88,155 88.5,155 88.5,155.5 89,155.5 89.5,155.5 89.5,156 90,156 90.5,156.5 91,156.5 91.5,157 92,157 92.5,157.5 93,157.5 93,158 93.5,158 94,158.5 94.5,158.5 95,159 95.5,159 96,159.5 96.5,159.5 96.5,160 97,160 97.5,160 97.5,160.5 98,160.5 98.5,160.5 98.5,161 99,161 99.5,161.5 100,161.5 100.5,162 101,162 101.5,162.5 102,162.5 102,163 102.5,163 103,163 103,163.5 103.5,163.5 104,164 104.5,164 105,164.5 105.5,164.5 105.5,165 106,165 106.5,165 106.5,165.5 107,165.5 107.5,165.5 107.5,166 108,166 108.5,166.5 109,166.5 109.5,167 110,167 110.5,167.5 111,167.5 111,168 111.5,168 112,168 112,168.5 112.5,168.5 113,169 113.5,169 114,169.5 114.5,169.5 115,170 115.5,170 115.5,170.5 116,170.5 116.5,170.5 116.5,171 117,171 117.5,171 117.5,171.5 118,171.5 118.5,172 119,172 119.5,172.5 120,172.5 120.5,173 121,173 121,173.5 121.5,173.5 122,174 122.5,174 123,174 123,174.5 123.5,174.5 124,175 124.5,175 124.5,175.5 125,175.5 125.5,175.5 126,176 126.5,176 126.5,176.5 127,176.5 127.5,177 128,177 128.5,177 128.5,177.5 129,177.5 129.5,178 130,178 130,178.5 130.5,178.5 131,178.5 131.5,179 132,179 132,179.5 132.5,179.5 133,179.5 133,180 133.5,180 134,180.5 134.5,180.5 135,181 135.5,181 136,181.5 136.5,181.5 136.5,182 137,182 137.5,182 137.5,182.5 138,182.5 138.5,182.5 138.5,183 139,183 139.5,183.5 140,183.5 140.5,183.5 140.5,184 141,184 141.5,184.5 142,184.5 142.5,185 143,185 143.5,185.5 144,185.5 144,186 144.5,186 145,186 145,186.5 145.5,186.5 146,187 146.5,187 147,187 147,187.5 147.5,187.5 148,188 148.5,188 149,188.5 149.5,188.5 150,189 150.5,189 151,189.5 151.5,189.5 151.5,190 152,190 152.5,190 153,190.5 153.5,190.5 153.5,191 154,191 154.5,191 154.5,191.5 155,191.5 155.5,192 156,192 156.5,192 156.5,192.5 157,192.5 157.5,193 158,193 158.5,193.5 159,193.5 159.5,193.5 159.5,194 160,194 160.5,194.5 161,194.5 161.5,195 162,195 162.5,195.5 163,195.5 163.5,196 164,196 164.5,196.5 165,196.5 165.5,196.5 165.5,197 166,197 166.5,197.5 167,197.5 167.5,198 168,198 168.5,198 168.5,198.5 169,198.5 169.5,198.5 169.5,199 170,199 170.5,199.5 171,199.5 171.5,199.5 171.5,200 172,200 172.5,200 172.5,200.5 173,200.5 173.5,200.5 174,201 174.5,201 175,201.5 175.5,201.5 176,202 176.5,202 177,202 177,202.5 177.5,202.5 178,202.5 178,203 178.5,203 179,203 179,203.5 179.5,203.5 180,203.5 180.5,204 181,204 181.5,204 181.5,204.5 182,204.5 182.5,204.5 183,205 183.5,205 184,205.5 184.5,205.5 185,206 185.5,206 186,206 186.5,206.5 187,206.5 187.5,207 188,207 188.5,207 189,207.5 189.5,207.5 190,207.5 190,208 190.5,208 191,208 191,208.5 191.5,208.5 192,208.5 192.5,208.5 192.5,209 193,209 193.5,209 194,209.5 194.5,209.5 195,209.5 195.5,210 196,210 196.5,210 196.5,210.5 197,210.5 197.5,210.5 198,210.5 198.5,211 199,211 199.5,211 199.5,211.5 200,211.5 200.5,211.5 201,211.5 201.5,212 202,212 202.5,212 202.5,212.5 203,212.5 203.5,212.5 204,212.5 204.5,213 205,213 205.5,213 206,213.5 206.5,213.5 207,213.5 207.5,213.5 208,214 208.5,214 209,214 209.5,214.5 210,214.5 210.5,214.5 211,214.5 211.5,215 212,215 212.5,215 213,215 213.5,215.5 214,215.5 214.5,215.5 215,215.5 215.5,216 216,216 216.5,216 217,216 217.5,216.5 218,216.5 218.5,216.5 219,216.5 219.5,216.5 220,217 220.5,217 221,217 221.5,217 222,217 222,217.5 222.5,217.5 223,217.5 223.5,217.5 224,217.5 224.5,218 225,218 225.5,218 226,218 226.5,218 227,218 227,218.5 227.5,218.5 228,218.5 228.5,218.5 229,218.5 229.5,218.5 230,219 230.5,219 231,219 231.5,219 232,219 232.5,219 233,219.5 233.5,219.5 234,219.5 234.5,219.5 235,219.5 235.5,219.5 236,220 236.5,220 237,220 237.5,220 238,220 238.5,220 239,220 239.5,220.5 240,220.5 240.5,220.5 241,220.5 241.5,220.5 242,220.5 242.5,220.5 243,221 243.5,221 244,221 244.5,221 245,221 245.5,221 246,221 246.5,221 247,221 247,221.5 247.5,221.5 248,221.5 248.5,221.5 249,221.5 249.5,221.5 250,221.5 250.5,221.5 251,221.5 251,222 251.5,222 252,222 252.5,222 253,222 253.5,222 254,222 254.5,222 255,222 255.5,222 256,222.5 256.5,222.5 257,222.5 257.5,222.5 258,222.5 258.5,222.5 259,222.5 259.5,222.5 260,222.5 260.5,222.5 261,223 261.5,223 262,223 262.5,223 263,223 263.5,223 264,223 264.5,223 265,223 265.5,223 266,223 266.5,223 266.5,223.5 267,223.5 267.5,223.5 268,223.5 268.5,223.5 269,223.5 269.5,223.5 270,223.5 270.5,223.5 271,223.5 271.5,223.5 272,223.5 272.5,223.5 272.5,224 273,224 273.5,224 274,224 274.5,224 275,224 275.5,224 276,224 276.5,224 277,224 277.5,224 278,224 278.5,224 279,224 279.5,224 279.5,224.5 280,224.5 280.5,224.5 281,224.5 281.5,224.5 282,224.5 282.5,224.5 283,224.5 283.5,224.5 284,224.5 284.5,224.5 285,224.5 285.5,224.5 286,224.5 286.5,224.5 287,224.5 287,225 287.5,225 288,225 288.5,225 289,225 289.5,225 290,225 290.5,225 291,225 291.5,225 292,225 292.5,225 293,225 293.5,225 294,225 294.5,225 295,225 295.5,225 295.5,225.5 296,225.5 296.5,225.5 297,225.5 297.5,225.5 298,225.5 298.5,225.5 299,225.5 299.5,225.5 300,225.5 300.5,225.5 301,225.5 301.5,225.5 302,225.5 302.5,225.5 303,225.5 303.5,225.5 304,225.5 304.5,225.5 305,225.5 305.5,226 306,226 306.5,226 307,226 307.5,226 308,226 308.5,226 309,226 309.5,226 310,226 310.5,226 311,226 311.5,226 312,226 312.5,226 313,226 313.5,226 314,226 314.5,226 315,226 315.5,226 316,226 316,226.5 316.5,226.5 317,226.5 317.5,226.5 318,226.5 318.5,226.5 319,226.5 319.5,226.5 320,226.5 320.5,226.5 321,226.5 321.5,226.5 322,226.5 322.5,226.5 323,226.5 323.5,226.5 324,226.5 324.5,226.5 325,226.5 325.5,226.5 326,226.5 326.5,226.5 327,226.5 327.5,226.5 328,226.5 328.5,227 329,227 329.5,227 330,227 330.5,227 331,227 331.5,227 332,227 332.5,227 333,227 333.5,227 334,227 334.5,227 335,227 335.5,227 336,227 336.5,227 337,227 337.5,227 338,227 338.5,227 339,227 339.5,227 340,227 340.5,227 341,227 341.5,227 342,227 342.5,227.5 343,227.5 343.5,227.5 344,227.5 344.5,227.5 345,227.5 345.5,227.5 346,227.5 346.5,227.5 347,227.5 347.5,227.5 348,227.5 348.5,227.5 349,227.5 349.5,227.5 350,227.5 350.5,227.5 351,227.5 351.5,227.5 352,227.5 352.5,227.5 353,227.5 353.5,227.5 354,227.5 354.5,227.5 355,227.5 355.5,227.5 356,227.5 356.5,227.5 357,227.5 357.5,227.5 358,227.5 358.5,227.5 359,228 359.5,228 360,228 360.5,228 361,228 361.5,228 362,228 362.5,228 363,228 363.5,228 364,228 364.5,228 365,228 365.5,228 366,228 366.5,228 367,228 367.5,228 368,228 368.5,228 369,228 369.5,228 370,228 370.5,228 371,228 371.5,228 372,228 372.5,228 373,228 373.5,228 374,228 374.5,228 375,228 375.5,228 376,228 376.5,228 377,228 377.5,228 377.5,228.5 378,228.5 378.5,228.5 379,228.5 379.5,228.5 380,228.5 380.5,228.5 381,228.5 381.5,228.5 382,228.5 382.5,228.5 383,228.5 383.5,228.5 384,228.5 384.5,228.5 385,228.5 385.5,228.5 386,228.5 386.5,228.5 387,228.5 387.5,228.5 388,228.5 388.5,228.5 389,228.5 389.5,228.5 390,228.5 390.5,228.5 391,228.5 391.5,228.5 392,228.5 392.5,228.5 393,228.5 393.5,228.5 394,228.5 394.5,228.5 395,228.5 395.5,228.5 396,228.5 396.5,228.5" fill="none" stroke="#0096ff" stroke-linecap="square"/><line x1="194.5" y1="312" x2="194.5" y2="465" stroke="#7a7a7a"/><rect x="49.5" y="312.5" width="347" height="152" fill="none" stroke="#fff"/><line x1="76.5" y1="460" x2="76.5" y2="464" stroke="#fff"/><line x1="104.5" y1="460" x2="104.5" y2="464" stroke="#fff"/><line x1="131.5" y1="460" x2="131.5" y2="464" stroke="#fff"/><line x1="158.5" y1="460" x2="158.5" y2="464" stroke="#fff"/><line x1="185.5" y1="460" x2="185.5" y2="464" stroke="#fff"/><line x1="213.5" y1="460" x2="213.5" y2="464" stroke="#fff"/><line x1="240.5" y1="460" x2="240.5" y2="464" stroke="#fff"/><line x1="267.5" y1="460" x2="267.5" y2="464" stroke="#fff"/><line x1="294.5" y1="460" x2="294.5" y2="464" stroke="#fff"/><line x1="322.5" y1="460" x2="322.5" y2="464" stroke="#fff"/><line x1="349.5" y1="460" x2="349.5" y2="464" stroke="#fff"/><line x1="376.5" y1="460" x2="376.5" y2="464" stroke="#fff"/><polyline points="49.5,326.5 50,326.5 50.5,326.5 51,326.5 51.5,326.5 52,326.5 52.5,326.5 53,326.5 53.5,326.5 54,326.5 54.5,326.5 55,326.5 55.5,326.5 56,326.5 56.5,326.5 57,326.5 57.5,326.5 58,326.5 58.5,326.5 59,326.5 59.5,326.5 60,326.5 60.5,326.5 61,326.5 61.5,326.5 62,326.5 62.5,326.5 63,326.5 63.5,326.5 64,326.5 64.5,326.5 65,326.5 65.5,326.5 66,326.5 66.5,326.5 67,326.5 67.5,326.5 68,326.5 68.5,326.5 69,326.5 69.5,326.5 70,326.5 70.5,326.5 71,326.5 71.5,326.5 72,326.5 72.5,326.5 73,326.5 73.5,326.5 74,326.5 74.5,326.5 75,326.5 75.5,326.5 76,326.5 76.5,326.5 77,326.5 77.5,326.5 78,326.5 78.5,326.5 79,326.5 79.5,326.5 80,326.5 80.5,326.5 81,326.5 81.5,326.5 82,326.5 82.5,326.5 83,326.5 83.5,326.5 84,326.5 84.5,326.5 85,326.5 85.5,326.5 86,326.5 86.5,326.5 87,326.5 87.5,326.5 88,326.5 88.5,327 89,327 89.5,327 90,327 90.5,327 91,327 91.5,327 92,327 92.5,327 93,327 93.5,327 94,327 94.5,327 95,327 95.5,327 96,327 96.5,327 97,327 97.5,327 98,327 98.5,327 99,327 99.5,327 100,327 100.5,327 101,327 101.5,327 102,327 102.5,327 103,327 103,327.5 103.5,327.5 104,327.5 104.5,327.5 105,327.5 105.5,327.5 106,327.5 106.5,327.5 107,327.5 107.5,327.5 108,327.5 108.5,327.5 109,327.5 109.5,327.5 110,327.5 110.5,327.5 111,327.5 111.5,327.5 111.5,328 112,328 112.5,328 113,328 113.5,328 114,328 114.5,328 115,328 115.5,328 116,328 116.5,328 117,328 117.5,328 118,328.5 118.5,328.5 119,328.5 119.5,328.5 120,328.5 120.5,328.5 121,328.5 121.5,328.5 122,328.5 122.5,328.5 122.5,329 123,329 123.5,329 124,329 124.5,329 125,329 125.5,329 126,329 126.5,329 126.5,329.5 127,329.5 127.5,329.5 128,329.5 128.5,329.5 129,329.5 129.5,329.5 130,330 130.5,330 131,330 131.5,330 132,330 132.5,330 132.5,330.5 133,330.5 133.5,330.5 134,330.5 134.5,330.5 135,330.5 135.5,331 136,331 136.5,331 137,331 137.5,331 137.5,331.5 138,331.5 138.5,331.5 139,331.5 139.5,332 140,332 140.5,332 141,332 141.5,332.5 142,332.5 142.5,332.5 143,333 143.5,333 144,333 144.5,333 144.5,333.5 145,333.5 145.5,333.5 146,333.5 146.5,334 147,334 147.5,334 147.5,334.5 148,334.5 148.5,334.5 148.5,335 149,335 149.5,335 150,335 150,335.5 150.5,335.5 151,335.5 151,336 151.5,336 152,336 152.5,336.5 153,336.5 153.5,337 154,337 154,337.5 154.5,337.5 155,337.5 155,338 155.5,338 156,338 156,338.5 156.5,338.5 157,339 157.5,339 157.5,339.5 158,339.5 158.5,340 159,340 159.5,340.5 160,340.5 160,341 160.5,341 160.5,341.5 161,341.5 161.5,342 162,342 162,342.5 162.5,342.5 163,343 163.5,343.5 164,344 164.5,344.5 165,344.5 165,345 165.5,345 165.5,345.5 166,345.5 166,346 166.5,346 166.5,346.5 167,346.5 167,347 167.5,347 168,347.5 168.5,348 169,348.5 169,349 169.5,349 169.5,349.5 170,349.5 170,350 170.5,350.5 171,350.5 171,351 171.5,351 171.5,351.5 172,352 172.5,352.5 172.5,353 173,353 173,353.5 173.5,354 174,354.5 174.5,355 174.5,355.5 175,355.5 175,356 175.5,356.5 175.5,357 176,357.5 176.5,358 177,358.5 177,359 177.5,359.5 178,360 178,360.5 178.5,361 178.5,361.5 179,362 179,362.5 179.5,363 180,363.5 180.5,364 180.5,364.5 181,365 181,365.5 181.5,366 181.5,366.5 182,367 182,367.5 182.5,368 183,368.5 183,369 183.5,369.5 183.5,370 184,370.5 184,371 184.5,371.5 184.5,372.5 185,373 185,373.5 185.5,374 186,374.5 186,375 186.5,375.5 186.5,376 187,376.5 187,377.5 187.5,378 187.5,378.5 188,379 188,379.5 188.5,380 189,381 189,381.5 189.5,382 189.5,382.5 190,383 190,383.5 190.5,384.5 190.5,385 191,385.5 191,386 191.5,387 192,387.5 192,388 192.5,388.5 192.5,389 193,390 193,390.5 193.5,391 193.5,391.5 194,392 194,393 194.5,393.5 195,394 195,394.5 195.5,395.5 195.5,396 196,396.5 196,397 196.5,397.5 196.5,398.5 197,399 197,399.5 197.5,400 198,400.5 198,401 198.5,402 198.5,402.5 199,403 199,403.5 199.5,404 199.5,404.5 200,405.5 200,406 200.5,406.5 201,407 201,407.5 201.5,408 201.5,408.5 202,409 202,409.5 202.5,410 202.5,410.5 203,411 203,411.5 203.5,412 204,412.5 204,413 204.5,413.5 204.5,414 205,414.5 205,415 205.5,415.5 205.5,416 206,416.5 206,417 206.5,417.5 207,418 207,418.5 207.5,419 207.5,419.5 208,420 208.5,420.5 208.5,421 209,421.5 209,422 209.5,422.5 210,422.5 210,423 210.5,423.5 210.5,424 211,424 211,424.5 211.5,425 211.5,425.5 212,425.5 212,426 212.5,426.5 213,427 213.5,427.5 213.5,428 214,428 214,428.5 214.5,429 215,429.5 215,430 215.5,430 216,430.5 216.5,431 216.5,431.5 217,431.5 217,432 217.5,432 217.5,432.5 218,432.5 218,433 218.5,433 219,433.5 219,434 219.5,434 219.5,434.5 220,434.5 220,435 220.5,435 220.5,435.5 221,435.5 221,436 221.5,436 222,436 222,436.5 222.5,436.5 222.5,437 223,437 223,437.5 223.5,437.5 223.5,438 224,438 224.5,438.5 225,439 225.5,439 226,439.5 226.5,440 227,440 227,440.5 227.5,440.5 228,441 228.5,441 229,441.5 229.5,441.5 229.5,442 230,442 230.5,442.5 231,442.5 231.5,443 232,443 232,443.5 232.5,443.5 233,443.5 233,444 233.5,444 234,444.5 234.5,444.5 235,444.5 235,445 235.5,445 236,445 236,445.5 236.5,445.5 237,445.5 237.5,446 238,446 238.5,446.5 239,446.5 239.5,446.5 239.5,447 240,447 240.5,447 241,447 241,447.5 241.5,447.5 242,447.5 242,448 242.5,448 243,448 243.5,448 244,448.5 244.5,448.5 245,448.5 245,449 245.5,449 246,449 246.5,449 247,449.5 247.5,449.5 248,449.5 248.5,450 249,450 249.5,450 250,450 250,450.5 250.5,450.5 251,450.5 251.5,450.5 252,451 252.5,451 253,451 253.5,451 254,451.5 254.5,451.5 255,451.5 255.5,451.5 256,451.5 256,452 256.5,452 257,452 257.5,452 258,452 258.5,452 258.5,452.5 259,452.5 259.5,452.5 260,452.5 260.5,452.5 260.5,453 261,453 261.5,453 262,453 262.5,453 263,453 263.5,453.5 264,453.5 264.5,453.5 265,453.5 265.5,453.5 266,453.5 266.5,454 267,454 267.5,454 268,454 268.5,454 269,454 269.5,454.5 270,454.5 270.5,454.5 271,454.5 271.5,454.5 272,454.5 272.5,454.5 272.5,455 273,455 273.5,455 274,455 274.5,455 275,455 275.5,455 276,455 276.5,455 276.5,455.5 277,455.5 277.5,455.5 278,455.5 278.5,455.5 279,455.5 279.5,455.5 280,455.5 280.5,456 281,456 281.5,456 282,456 282.5,456 283,456 283.5,456 284,456 284.5,456 285,456.5 285.5,456.5 286,456.5 286.5,456.5 287,456.5 287.5,456.5 288,456.5 288.5,456.5 289,456.5 289.5,456.5 290,457 290.5,457 291,457 291.5,457 292,457 292.5,457 293,457 293.5,457 294,457 294.5,457 295,457 295.5,457.5 296,457.5 296.5,457.5 297,457.5 297.5,457.5 298,457.5 298.5,457.5 299,457.5 299.5,457.5 300,457.5 300.5,457.5 301,457.5 301.5,457.5 302,458 302.5,458 303,458 303.5,458 304,458 304.5,458 305,458 305.5,458 306,458 306.5,458 307,458 307.5,458 308,458 308.5,458 309,458.5 309.5,458.5 310,458.5 310.5,458.5 311,458.5 311.5,458.5 312,458.5 312.5,458.5 313,458.5 313.5,458.5 314,458.5 314.5,458.5 315,458.5 315.5,458.5 316,458.5 316.5,458.5 317,458.5 317.5,459 318,459 318.5,459 319,459 319.5,459 320,459 320.5,459 321,459 321.5,459 322,459 322.5,459 323,459 323.5,459 324,459 324.5,459 325,459 325.5,459 326,459 326.5,459 327,459.5 327.5,459.5 328,459.5 328.5,459.5 329,459.5 329.5,459.5 330,459.5 330.5,459.5 331,459.5 331.5,459.5 332,459.5 332.5,459.5 333,459.5 333.5,459.5 334,459.5 334.5,459.5 335,459.5 335.5,459.5 336,459.5 336.5,459.5 337,459.5 337.5,459.5 338,459.5 338.5,459.5 338.5,460 339,460 339.5,460 340,460 340.5,460 341,460 341.5,460 342,460 342.5,460 343,460 343.5,460 344,460 344.5,460 345,460 345.5,460 346,460 346.5,460 347,460 347.5,460 348,460 348.5,460 349,460 349.5,460 350,460 350.5,460 351,460 351.5,460 352,460 352.5,460 352.5,460.5 353,460.5 353.5,460.5 354,460.5 354.5,460.5 355,460.5 355.5,460.5 356,460.5 356.5,460.5 357,460.5 357.5,460.5 358,460.5 358.5,460.5 359,460.5 359.5,460.5 360,460.5 360.5,460.5 361,460.5 361.5,460.5 362,460.5 362.5,460.5 363,460.5 363.5,460.5 364,460.5 364.5,460.5" fill="none" stroke="#00ff00" stroke-linecap="square"/><polyline points="49.5,326.5 50,326.5 50.5,326.5 51,326.5 51.5,326.5 52,326.5 52.5,326.5 53,326.5 53.5,326.5 54,326.5 54.5,326.5 55,326.5 55.5,326.5 56,326.5 56.5,326.5 57,326.5 57.5,326.5 58,326.5 58.5,326.5 59,326.5 59.5,326.5 60,326.5 60.5,326.5 61,326.5 61.5,326.5 62,326.5 62.5,326.5 63,326.5 63.5,326.5 64,326.5 64.5,326.5 65,326.5 65.5,326.5 66,326.5 66.5,326.5 67,326.5 67.5,326.5 68,326.5 68.5,326.5 69,326.5 69.5,326.5 70,326.5 70.5,326.5 71,326.5 71.5,326.5 72,326.5 72.5,326.5 73,326.5 73.5,326.5 74,326.5 74.5,326.5 75,326.5 75.5,326.5 76,326.5 76.5,326.5 77,326.5 77.5,326.5 78,326.5 78.5,326.5 79,326.5 79.5,326.5 80,326.5 80.5,326.5 81,326.5 81.5,326.5 82,326.5 82.5,326.5 83,326.5 83.5,326.5 84,326.5 84.5,326.5 85,326.5 85.5,326.5 86,326.5 86.5,326.5 86.5,327 87,327 87.5,327 88,327 88.5,327 89,327 89.5,327 90,327 90.5,327 91,327 91.5,327 92,327 92.5,327 93,327 93.5,327 94,327 94.5,327 95,327 95.5,327 96,327 96.5,327 97,327 97.5,327 98,327 98.5,327 99,327 99.5,327 100,327 100.5,327 101,327 101.5,327.5 102,327.5 102.5,327.5 103,327.5 103.5,327.5 104,327.5 104.5,327.5 105,327.5 105.5,327.5 106,327.5 106.5,327.5 107,327.5 107.5,327.5 108,327.5 108.5,327.5 109,327.5 109.5,327.5 110,328 110.5,328 111,328 111.5,328 112,328 112.5,328 113,328 113.5,328 114,328 114.5,328 115,328 115.5,328 116,328 116.5,328.5 117,328.5 117.5,328.5 118,328.5 118.5,328.5 119,328.5 119.5,328.5 120,328.5 120.5,328.5 121,328.5 121,329 121.5,329 122,329 122.5,329 123,329 123.5,329 124,329 124.5,329 125,329.5 125.5,329.5 126,329.5 126.5,329.5 127,329.5 127.5,329.5 128,329.5 128.5,330 129,330 129.5,330 130,330 130.5,330 131,330.5 131.5,330.5 132,330.5 132.5,330.5 133,330.5 133.5,330.5 133.5,331 134,331 134.5,331 135,331 135.5,331 136,331.5 136.5,331.5 137,331.5 137.5,331.5 138,332 138.5,332 139,332 139.5,332 139.5,332.5 140,332.5 140.5,332.5 141,332.5 141.5,333 142,333 142.5,333 142.5,333.5 143,333.5 143.5,333.5 144,333.5 144.5,334 145,334 145.5,334.5 146,334.5 146.5,334.5 147,335 147.5,335 148,335.5 148.5,335.5 149,336 149.5,336 150,336 150,336.5 150.5,336.5 151,337 151.5,337 152,337.5 152.5,337.5 153,338 153.5,338 153.5,338.5 154,338.5 154.5,339 155,339 155,339.5 155.5,339.5 156,339.5 156,340 156.5,340 156.5,340.5 157,340.5 157.5,341 158,341.5 158.5,342 159,342 159,342.5 159.5,342.5 160,343 160.5,343.5 161,344 161.5,344.5 162,345 162.5,345.5 163,346 163.5,346.5 163.5,347 164,347 164,347.5 164.5,348 165,348 165,348.5 165.5,349 166,349.5 166,350 166.5,350 166.5,350.5 167,351 167,351.5 167.5,351.5 168,352 168,352.5 168.5,353 168.5,353.5 169,354 169.5,354.5 169.5,355 170,355.5 170,356 170.5,356.5 171,357 171,357.5 171.5,358 171.5,358.5 172,359 172,359.5 172.5,360 172.5,360.5 173,361 173,362 173.5,362.5 174,363 174,363.5 174.5,364 174.5,365 175,365.5 175,366 175.5,367 175.5,367.5 176,368 176,369 176.5,369.5 177,370.5 177,371 177.5,372 177.5,372.5 178,373.5 178,374 178.5,375 178.5,375.5 179,376.5 179,377.5 179.5,378 180,379 180,380 180.5,381 180.5,381.5 181,382.5 181,383.5 181.5,384.5 181.5,385.5 182,386 182,387 182.5,388 183,389 183,390 183.5,391 183.5,392 184,393 184,394 184.5,395 184.5,396 185,397 185,398 185.5,399 186,400 186,401 186.5,402 186.5,403 187,404 187,404.5 187.5,405.5 187.5,406.5 188,407.5 188,408.5 188.5,409.5 189,410.5 189,411.5 189.5,412 189.5,413 190,414 190,415 190.5,415.5 190.5,416.5 191,417 191,418 191.5,419 192,419.5 192,420.5 192.5,421 192.5,422 193,422.5 193,423.5 193.5,424 193.5,424.5 194,425.5 194,426 194.5,426.5 195,427 195,428 195.5,428.5 195.5,429 196,429.5 196,430 196.5,430.5 196.5,431 197,431.5 197,432 197.5,432.5 198,433 198,433.5 198.5,434 198.5,434.5 199,435 199,435.5 199.5,436 199.5,436.5 200,436.5 200,437 200.5,437.5 201,438 201.5,438.5 201.5,439 202,439.5 202.5,440 202.5,440.5 203,440.5 203,441 203.5,441 204,441.5 204,442 204.5,442 204.5,442.5 205,442.5 205,443 205.5,443 205.5,443.5 206,443.5 206,444 206.5,444 207,444.5 207.5,445 208,445.5 208.5,445.5 208.5,446 209,446 209,446.5 209.5,446.5 210,446.5 210,447 210.5,447 210.5,447.5 211,447.5 211.5,448 212,448 212,448.5 212.5,448.5 213,448.5 213,449 213.5,449 214,449 214,449.5 214.5,449.5 215,450 215.5,450 216,450 216,450.5 216.5,450.5 217,450.5 217,451 217.5,451 218,451 218.5,451.5 219,451.5 219.5,451.5 219.5,452 220,452 220.5,452 221,452.5 221.5,452.5 222,452.5 222.5,452.5 222.5,453 223,453 223.5,453 224,453 224,453.5 224.5,453.5 225,453.5 225.5,453.5 226,454 226.5,454 227,454 227.5,454 227.5,454.5 228,454.5 228.5,454.5 229,454.5 229.5,454.5 230,455 230.5,455 231,455 231.5,455 232,455 232,455.5 232.5,455.5 233,455.5 233.5,455.5 234,455.5 234.5,455.5 235,456 235.5,456 236,456 236.5,456 237,456 237.5,456 237.5,456.5 238,456.5 238.5,456.5 239,456.5 239.5,456.5 240,456.5 240.5,456.5 241,457 241.5,457 242,457 242.5,457 243,457 243.5,457 244,457 244.5,457.5 245,457.5 245.5,457.5 246,457.5 246.5,457.5 247,457.5 247.5,457.5 248,457.5 248.5,458 249,458 249.5,458 250,458 250.5,458 251,458 251.5,458 252,458 252.5,458 253,458 253,458.5 253.5,458.5 254,458.5 254.5,458.5 255,458.5 255.5,458.5 256,458.5 256.5,458.5 257,458.5 257.5,458.5 258,458.5 258.5,458.5 258.5,459 259,459 259.5,459 260,459 260.5,459 261,459 261.5,459 262,459 262.5,459 263,459 263.5,459 264,459 264.5,459 265,459.5 265.5,459.5 266,459.5 266.5,459.5 267,459.5 267.5,459.5 268,459.5 268.5,459.5 269,459.5 269.5,459.5 270,459.5 270.5,459.5 271,459.5 271.5,459.5 272,459.5 272.5,460 273,460 273.5,460 274,460 274.5,460 275,460 275.5,460 276,460 276.5,460 277,460 277.5,460 278,460 278.5,460 279,460 279.5,460 280,460 280.5,460 281,460 281.5,460 282,460.5 282.5,460.5 283,460.5 283.5,460.5 284,460.5 284.5,460.5 285,460.5 285.5,460.5 286,460.5 286.5,460.5 287,460.5 287.5,460.5" fill="none" stroke="#ff0000" stroke-linecap="square"/><polyline points="49.5,326.5 50,326.5 50.5,326.5 51,326.5 51.5,326.5 52,326.5 52.5,326.5 53,326.5 53.5,326.5 54,326.5 54.5,326.5 55,326.5 55.5,326.5 56,326.5 56.5,326.5 57,326.5 57.5,326.5 58,326.5 58.5,326.5 59,326.5 59.5,326.5 60,326.5 60.5,326.5 61,326.5 61.5,326.5 62,326.5 62.5,326.5 63,326.5 63.5,326.5 64,326.5 64.5,326.5 65,326.5 65.5,326.5 66,326.5 66.5,326.5 67,326.5 67.5,326.5 68,326.5 68.5,326.5 69,326.5 69.5,326.5 70,326.5 70.5,326.5 71,326.5 71.5,326.5 72,326.5 72.5,326.5 73,326.5 73.5,326.5 74,326.5 74.5,326.5 75,326.5 75.5,326.5 76,326.5 76.5,326.5 77,326.5 77.5,326.5 78,326.5 78.5,326.5 79,326.5 79.5,326.5 80,326.5 80.5,326.5 81,326.5 81.5,326.5 82,326.5 82.5,326.5 83,326.5 83.5,326.5 84,326.5 84.5,326.5 85,326.5 85.5,326.5 86,326.5 86.5,326.5 87,326.5 87.5,326.5 88,326.5 88.5,326.5 89,326.5 89.5,326.5 90,326.5 90.5,326.5 91,326.5 91.5,326.5 91.5,327 92,327 92.5,327 93,327 93.5,327 94,327 94.5,327 95,327 95.5,327 96,327 96.5,327 97,327 97.5,327 98,327 98.5,327 99,327 99.5,327 100,327 100.5,327 101,327 101.5,327 102,327 102.5,327 103,327 103.5,327 104,327 104.5,327 105,327 105.5,327 106,327 106,327.5 106.5,327.5 107,327.5 107.5,327.5 108,327.5 108.5,327.5 109,327.5 109.5,327.5 110,327.5 110.5,327.5 111,327.5 111.5,327.5 112,327.5 112.5,327.5 113,327.5 113.5,327.5 114,327.5 114.5,327.5 114.5,328 115,328 115.5,328 116,328 116.5,328 117,328 117.5,328 118,328 118.5,328 119,328 119.5,328 120,328 120.5,328 120.5,328.5 121,328.5 121.5,328.5 122,328.5 122.5,328.5 123,328.5 123.5,328.5 124,328.5 124.5,328.5 125,328.5 125.5,329 126,329 126.5,329 127,329 127.5,329 128,329 128.5,329 129,329 129.5,329.5 130,329.5 130.5,329.5 131,329.5 131.5,329.5 132,329.5 132.5,330 133,330 133.5,330 134,330 134.5,330 135,330 135.5,330.5 136,330.5 136.5,330.5 137,330.5 137.5,330.5 138,331 138.5,331 139,331 139.5,331 140,331.5 140.5,331.5 141,331.5 141.5,331.5 142,331.5 142,332 142.5,332 143,332 143.5,332 144,332 144,332.5 144.5,332.5 145,332.5 145.5,332.5 145.5,333 146,333 146.5,333 147,333 147.5,333.5 148,333.5 148.5,333.5 148.5,334 149,334 149.5,334 150,334 150.5,334.5 151,334.5 151.5,335 152,335 152.5,335 153,335.5 153.5,335.5 154,336 154.5,336 155,336.5 155.5,336.5 156,336.5 156,337 156.5,337 157,337 157,337.5 157.5,337.5 158,337.5 158,338 158.5,338 159,338 159,338.5 159.5,338.5 160,338.5 160,339 160.5,339 161,339.5 161.5,339.5 162,340 162.5,340 162.5,340.5 163,340.5 163.5,341 164,341 164,341.5 164.5,341.5 165,341.5 165,342 165.5,342 165.5,342.5 166,342.5 166.5,343 167,343 167,343.5 167.5,343.5 168,344 168.5,344.5 169,344.5 169,345 169.5,345 169.5,345.5 170,345.5 170,346 170.5,346 171,346 171,346.5 171.5,346.5 171.5,347 172,347 172,347.5 172.5,347.5 172.5,348 173,348 173,348.5 173.5,348.5 174,349 174.5,349.5 175,350 175.5,350.5 176,351 176.5,351.5 177,352 177.5,352.5 178,353 178.5,353.5 178.5,354 179,354 179,354.5 179.5,354.5 180,355 180,355.5 180.5,355.5 180.5,356 181,356 181,356.5 181.5,357 182,357.5 182,358 182.5,358 183,358.5 183.5,359 183.5,359.5 184,359.5 184,360 184.5,360.5 184.5,361 185,361 185,361.5 185.5,362 186,362 186,362.5 186.5,363 187,363.5 187,364 187.5,364.5 188,365 188,365.5 188.5,365.5 189,366 189,366.5 189.5,367 190,367.5 190,368 190.5,368.5 191,369 191,369.5 191.5,370 192,370 192,370.5 192.5,371 192.5,371.5 193,372 193.5,372.5 193.5,373 194,373.5 194,374 194.5,374 195,374.5 195,375 195.5,375.5 195.5,376 196,376 196,376.5 196.5,377 196.5,377.5 197,378 197.5,378.5 198,379 198,379.5 198.5,380 199,380.5 199,381 199.5,381.5 199.5,382 200,382.5 200.5,383 201,383.5 201,384 201.5,384.5 202,385 202,385.5 202.5,386 202.5,386.5 203,387 203.5,387.5 204,388 204,388.5 204.5,389 205,389.5 205,390 205.5,390.5 205.5,391 206,391.5 206.5,392 207,392.5 207,393 207.5,393.5 208,394 208,394.5 208.5,395 208.5,395.5 209,395.5 209,396 209.5,396.5 210,397 210.5,397.5 210.5,398 211,398.5 211,399 211.5,399 211.5,399.5 212,400 212,400.5 212.5,400.5 213,401 213,401.5 213.5,402 214,402.5 214,403 214.5,403.5 215,404 215,404.5 215.5,404.5 216,405 216,405.5 216.5,406 217,406.5 217,407 217.5,407 217.5,407.5 218,408 218.5,408.5 219,409 219,409.5 219.5,409.5 219.5,410 220,410.5 220.5,411 221,411.5 221,412 221.5,412 222,412.5 222,413 222.5,413 222.5,413.5 223,414 223.5,414.5 224,415 224,415.5 224.5,415.5 224.5,416 225,416 225.5,416.5 225.5,417 226,417 226,417.5 226.5,417.5 226.5,418 227,418 227,418.5 227.5,419 228,419.5 228.5,419.5 228.5,420 229,420 229,420.5 229.5,420.5 229.5,421 230,421 230,421.5 230.5,421.5 230.5,422 231,422 231.5,422.5 232,423 232.5,423.5 233,424 233.5,424.5 234,425 234.5,425 234.5,425.5 235,425.5 235,426 235.5,426 235.5,426.5 236,426.5 236.5,427 237,427.5 237.5,427.5 237.5,428 238,428 238.5,428.5 239,429 239.5,429 239.5,429.5 240,429.5 240.5,430 241,430 241,430.5 241.5,430.5 241.5,431 242,431 242.5,431.5 243,431.5 243.5,432 244,432.5 244.5,432.5 244.5,433 245,433 245.5,433.5 246,433.5 246.5,434 247,434 247,434.5 247.5,434.5 248,435 248.5,435 248.5,435.5 249,435.5 249.5,435.5 250,436 250.5,436 250.5,436.5 251,436.5 251.5,437 252,437 252.5,437 252.5,437.5 253,437.5 253.5,438 254,438 254.5,438.5 255,438.5 255.5,438.5 255.5,439 256,439 256.5,439 256.5,439.5 257,439.5 257.5,439.5 257.5,440 258,440 258.5,440 259,440.5 259.5,440.5 260,441 260.5,441 261,441 261.5,441.5 262,441.5 262.5,442 263,442 263.5,442 263.5,442.5 264,442.5 264.5,442.5 265,442.5 265,443 265.5,443 266,443 266.5,443.5 267,443.5 267.5,443.5 268,444 268.5,444 269,444 269.5,444.5 270,444.5 270.5,444.5 271,445 271.5,445 272,445 272.5,445.5 273,445.5 273.5,445.5 274,445.5 274,446 274.5,446 275,446 275.5,446 275.5,446.5 276,446.5 276.5,446.5 277,446.5 277.5,446.5 277.5,447 278,447 278.5,447 279,447 279.5,447 279.5,447.5 280,447.5 280.5,447.5 281,447.5 281.5,448 282,448 282.5,448 283,448 283.5,448 283.5,448.5 284,448.5 284.5,448.5 285,448.5 285.5,448.5 286,449 286.5,449 287,449 287.5,449 288,449.5 288.5,449.5 289,449.5 289.5,449.5 290,449.5 290.5,450 291,450 291.5,450 292,450 292.5,450 293,450 293,450.5 293.5,450.5 294,450.5 294.5,450.5 295,450.5 295.5,450.5 296,451 296.5,451 297,451 297.5,451 298,451 298.5,451 298.5,451.5 299,451.5 299.5,451.5 300,451.5 300.5,451.5 301,451.5 301.5,451.5 301.5,452 302,452 302.5,452 303,452 303.5,452 304,452 304.5,452 305,452.5 305.5,452.5 306,452.5 306.5,452.5 307,452.5 307.5,452.5 308,452.5 308.5,453 309,453 309.5,453 310,453 310.5,453 311,453 311.5,453 312,453 312,453.5 312.5,453.5 313,453.5 313.5,453.5 314,453.5 314.5,453.5 315,453.5 315.5,453.5 316,453.5 316,454 316.5,454 317,454 317.5,454 318,454 318.5,454 319,454 319.5,454 320,454 320.5,454.5 321,454.5 321.5,454.5 322,454.5 322.5,454.5 323,454.5 323.5,454.5 324,454.5 324.5,454.5 325,454.5 325.5,455 326,455 326.5,455 327,455 327.5,455 328,455 328.5,455 329,455 329.5,455 330,455 330,455.5 330.5,455.5 331,455.5 331.5,455.5 332,455.5 332.5,455.5 333,455.5 333.5,455.5 334,455.5 334.5,455.5 335,455.5 335.5,455.5 336,456 336.5,456 337,456 337.5,456 338,456 338.5,456 339,456 339.5,456 340,456 340.5,456 341,456 341.5,456 342,456 342,456.5 342.5,456.5 343,456.5 343.5,456.5 344,456.5 344.5,456.5 345,456.5 345.5,456.5 346,456.5 346.5,456.5 347,456.5 347.5,456.5 348,456.5 348.5,456.5 349,456.5 349,457 349.5,457 350,457 350.5,457 351,457 351.5,457 352,457 352.5,457 353,457 353.5,457 354,457 354.5,457 355,457 355.5,457 356,457 356.5,457 356.5,457.5 357,457.5 357.5,457.5 358,457.5 358.5,457.5 359,457.5 359.5,457.5 360,457.5 360.5,457.5 361,457.5 361.5,457.5 362,457.5 362.5,457.5 363,457.5 363.5,457.5 364,457.5 364.5,457.5 365,457.5 365,458 365.5,458 366,458 366.5,458 367,458 367.5,458 368,458 368.5,458 369,458 369.5,458 370,458 370.5,458 371,458 371.5,458 372,458 372.5,458 373,458 373.5,458 374,458 374.5,458 375,458.5 375.5,458.5 376,458.5 376.5,458.5 377,458.5 377.5,458.5 378,458.5 378.5,458.5 379,458.5 379.5,458.5 380,458.5 380.5,458.5 381,458.5 381.5,458.5 382,458.5 382.5,458.5 383,458.5 383.5,458.5 384,458.5 384.5,458.5 385,458.5 385.5,458.5 386,458.5 386,459 386.5,459 387,459 387.5,459 388,459 388.5,459 389,459 389.5,459 390,459 390.5,459 391,459 391.5,459 392,459 392.5,459 393,459 393.5,459 394,459 394.5,459 395,459 395.5,459 396,459 396.5,459" fill="none" stroke="#0096ff" stroke-linecap="square"/><line x1="594.5" y1="312" x2="594.5" y2="465" stroke="#7a7a7a"/><rect x="449.5" y="312.5" width="347" height="152" fill="none" stroke="#fff"/><line x1="476.5" y1="460" x2="476.5" y2="464" stroke="#fff"/><line x1="504.5" y1="460" x2="504.5" y2="464" stroke="#fff"/><line x1="531.5" y1="460" x2="531.5" y2="464" stroke="#fff"/><line x1="558.5" y1="460" x2="558.5" y2="464" stroke="#fff"/><line x1="585.5" y1="460" x2="585.5" y2="464" stroke="#fff"/><line x1="613.5" y1="460" x2="613.5" y2="464" stroke="#fff"/><line x1="640.5" y1="460" x2="640.5" y2="464" stroke="#fff"/><line x1="667.5" y1="460" x2="667.5" y2="464" stroke="#fff"/><line x1="694.5" y1="460" x2="694.5" y2="464" stroke="#fff"/><line x1="722.5" y1="460" x2="722.5" y2="464" stroke="#fff"/><line x1="749.5" y1="460" x2="749.5" y2="464" stroke="#fff"/><line x1="776.5" y1="460" x2="776.5" y2="464" stroke="#fff"/><polyline points="449.5,464.5 450,464.5 450.5,464.5 451,464.5 451.5,464.5 452,464.5 452.5,464.5 453,464.5 453.5,464.5 454,464.5 454.5,464.5 455,464.5 455.5,464.5 456,464.5 456.5,464.5 457,464.5 457.5,464.5 458,464.5 458.5,464.5 459,464.5 459.5,464.5 460,464.5 460.5,464.5 461,464.5 461.5,464.5 462,464.5 462.5,464.5 463,464.5 463.5,464.5 464,464.5 464.5,464.5 465,464 465.5,464 466,464 466.5,464 467,464 467.5,464 468,464 468.5,464 469,464 469.5,464 470,464 470.5,464 471,464 471.5,464 472,464 472.5,464 473,464 473.5,464 474,464 474.5,464 475,464 475.5,464 476,464 476.5,464 477,464 477.5,464 478,464 478.5,464 479,464 479.5,464 480,464 480.5,464 481,464 481.5,464 482,464 482.5,464 483,464 483.5,464 484,464 484.5,464 485,464 485.5,464 486,464 486.5,464 487,464 487.5,464 488,464 488.5,464 488.5,463.5 489,463.5 489.5,463.5 490,463.5 490.5,463.5 491,463.5 491.5,463.5 492,463.5 492.5,463.5 493,463.5 493.5,463.5 494,463.5 494.5,463.5 495,463.5 495.5,463.5 496,463.5 496.5,463.5 497,463.5 497.5,463.5 498,463.5 498.5,463.5 499,463.5 499.5,463.5 500,463 500.5,463 501,463 501.5,463 502,463 502.5,463 503,463 503.5,463 504,463 504.5,463 505,463 505.5,463 506,463 506.5,463 507,462.5 507.5,462.5 508,462.5 508.5,462.5 509,462.5 509.5,462.5 510,462.5 510.5,462.5 511,462.5 511.5,462.5 512,462.5 512.5,462 513,462 513.5,462 514,462 514.5,462 515,462 515.5,462 516,462 516.5,462 517,461.5 517.5,461.5 518,461.5 518.5,461.5 519,461.5 519.5,461.5 520,461.5 520.5,461 521,461 521.5,461 522,461 522.5,461 523,461 523.5,460.5 524,460.5 524.5,460.5 525,460.5 525.5,460.5 526,460.5 526,460 526.5,460 527,460 527.5,460 528,460 528.5,460 528.5,459.5 529,459.5 529.5,459.5 530,459.5 530.5,459.5 530.5,459 531,459 531.5,459 532,459 532.5,459 532.5,458.5 533,458.5 533.5,458.5 534,458.5 534.5,458 535,458 535.5,458 536,457.5 536.5,457.5 537,457.5 537.5,457.5 537.5,457 538,457 538.5,457 539,456.5 539.5,456.5 540,456.5 540.5,456 541,456 541.5,455.5 542,455.5 542.5,455.5 542.5,455 543,455 543.5,455 544,454.5 544.5,454.5 545,454 545.5,454 545.5,453.5 546,453.5 546.5,453.5 547,453 547.5,453 547.5,452.5 548,452.5 548.5,452 549,452 549.5,451.5 550,451.5 550,451 550.5,451 551,450.5 551.5,450.5 551.5,450 552,450 552.5,449.5 553,449.5 553,449 553.5,449 553.5,448.5 554,448.5 554.5,448 555,447.5 555.5,447 556,447 556,446.5 556.5,446.5 557,446 557.5,445.5 558,445 558.5,444.5 559,444.5 559,444 559.5,443.5 560,443 560.5,442.5 561,442 561,441.5 561.5,441.5 562,441 562.5,440.5 562.5,440 563,440 563,439.5 563.5,439 564,438.5 564,438 564.5,438 565,437.5 565,437 565.5,437 565.5,436.5 566,436 566,435.5 566.5,435.5 566.5,435 567,434.5 567,434 567.5,434 568,433.5 568,433 568.5,432.5 568.5,432 569,432 569,431.5 569.5,431 569.5,430.5 570,430 570,429.5 570.5,429 571,429 571,428.5 571.5,428 571.5,427.5 572,427 572,426.5 572.5,426 572.5,425.5 573,425 573,424.5 573.5,424 574,423.5 574,423 574.5,422.5 574.5,422 575,421.5 575,421 575.5,420.5 575.5,420 576,419.5 576,419 576.5,418.5 577,418 577,417.5 577.5,417 577.5,416.5 578,416 578,415.5 578.5,415 578.5,414.5 579,414 579,413.5 579.5,413 580,412.5 580,412 580.5,411.5 580.5,411 581,410 581,409.5 581.5,409 581.5,408.5 582,408 582,407.5 582.5,407 583,406.5 583,406 583.5,405.5 583.5,405 584,405 584,404.5 584.5,404 584.5,403.5 585,403 585,402.5 585.5,402 586,401.5 586.5,401 586.5,400.5 587,400 587,399.5 587.5,399.5 587.5,399 588,398.5 588.5,398 589,398 589,397.5 589.5,397.5 589.5,397 590,397 590,396.5 590.5,396.5 591,396 591.5,396 592,396 592,395.5 592.5,395.5 593,395.5 593.5,395.5 594,395.5 594,396 594.5,396 595,396 595.5,396.5 596,396.5 596,397 596.5,397 597,397.5 597.5,398 598,398.5 598.5,399 598.5,399.5 599,399.5 599,400 599.5,400.5 599.5,401 600,401 600,401.5 600.5,402 601,402.5 601,403 601.5,403.5 601.5,404 602,404.5 602,405 602.5,405.5 602.5,406 603,406.5 603,407 603.5,407.5 604,408 604,408.5 604.5,409 604.5,409.5 605,410 605,410.5 605.5,411 605.5,411.5 606,412 606,412.5 606.5,413 607,414 607,414.5 607.5,415 607.5,415.5 608,416 608,416.5 608.5,417 608.5,417.5 609,418 609,418.5 609.5,419 610,419.5 610,420 610.5,420.5 610.5,421.5 611,422 611,422.5 611.5,423 611.5,423.5 612,424 612,424.5 612.5,425 613,425.5 613,426 613.5,426 613.5,426.5 614,427 614,427.5 614.5,428 614.5,428.5 615,429 615,429.5 615.5,430 616,430.5 616.5,431 616.5,431.5 617,432 617,432.5 617.5,433 618,433.5 618,434 618.5,434.5 619,434.5 619,435 619.5,435.5 619.5,436 620,436 620,436.5 620.5,437 621,437.5 621,438 621.5,438 622,438.5 622,439 622.5,439 622.5,439.5 623,440 623.5,440.5 624,441 624,441.5 624.5,441.5 624.5,442 625,442 625.5,442.5 626,443 626.5,443.5 627,444 627.5,444.5 628,445 628.5,445 628.5,445.5 629,445.5 629,446 629.5,446 630,446.5 630.5,447 631,447 631.5,447.5 632,448 632.5,448 632.5,448.5 633,448.5 633.5,449 634,449 634.5,449.5 635,449.5 635,450 635.5,450 636,450.5 636.5,450.5 636.5,451 637,451 637.5,451 638,451.5 638.5,451.5 638.5,452 639,452 639.5,452 639.5,452.5 640,452.5 640.5,452.5 641,453 641.5,453 642,453 642,453.5 642.5,453.5 643,453.5 643.5,454 644,454 644.5,454 644.5,454.5 645,454.5 645.5,454.5 646,455 646.5,455 647,455 647.5,455 647.5,455.5 648,455.5 648.5,455.5 649,455.5 649.5,456 650,456 650.5,456 651,456.5 651.5,456.5 652,456.5 652.5,456.5 653,457 653.5,457 654,457 654.5,457 655,457.5 655.5,457.5 656,457.5 656.5,457.5 657,457.5 657,458 657.5,458 658,458 658.5,458 659,458 659.5,458 660,458.5 660.5,458.5 661,458.5 661.5,458.5 662,458.5 662.5,458.5 662.5,459 663,459 663.5,459 664,459 664.5,459 665,459 665.5,459 666,459.5 666.5,459.5 667,459.5 667.5,459.5 668,459.5 668.5,459.5 669,459.5 669.5,459.5 669.5,460 670,460 670.5,460 671,460 671.5,460 672,460 672.5,460 673,460 673.5,460 674,460.5 674.5,460.5 675,460.5 675.5,460.5 676,460.5 676.5,460.5 677,460.5 677.5,460.5 678,460.5 678.5,460.5 679,461 679.5,461 680,461 680.5,461 681,461 681.5,461 682,461 682.5,461 683,461 683.5,461 684,461 684.5,461 685,461.5 685.5,461.5 686,461.5 686.5,461.5 687,461.5 687.5,461.5 688,461.5 688.5,461.5 689,461.5 689.5,461.5 690,461.5 690.5,461.5 691,461.5 691.5,461.5 692,461.5 692.5,461.5 692.5,462 693,462 693.5,462 694,462 694.5,462 695,462 695.5,462 696,462 696.5,462 697,462 697.5,462 698,462 698.5,462 699,462 699.5,462 700,462 700.5,462 701,462 701.5,462 702,462 702.5,462.5 703,462.5 703.5,462.5 704,462.5 704.5,462.5 705,462.5 705.5,462.5 706,462.5 706.5,462.5 707,462.5 707.5,462.5 708,462.5 708.5,462.5 709,462.5 709.5,462.5 710,462.5 710.5,462.5 711,462.5 711.5,462.5 712,462.5 712.5,462.5 713,462.5 713.5,462.5 714,462.5 714.5,462.5 715,462.5 715.5,462.5 716,462.5 716,463 716.5,463 717,463 717.5,463 718,463 718.5,463 719,463 719.5,463 720,463 720.5,463 721,463 721.5,463 722,463 722.5,463 723,463 723.5,463 724,463 724.5,463 725,463 725.5,463 726,463 726.5,463 727,463 727.5,463 728,463 728.5,463 729,463 729.5,463 730,463 730.5,463 731,463 731.5,463 732,463 732.5,463 733,463 733.5,463 734,463 734.5,463 735,463 735.5,463 736,463 736.5,463.5 737,463.5 737.5,463.5 738,463.5 738.5,463.5 739,463.5 739.5,463.5 740,463.5 740.5,463.5 741,463.5 741.5,463.5 742,463.5 742.5,463.5 743,463.5 743.5,463.5 744,463.5 744.5,463.5 745,463.5 745.5,463.5 746,463.5 746.5,463.5 747,463.5 747.5,463.5 748,463.5 748.5,463.5 749,463.5 749.5,463.5 750,463.5 750.5,463.5 751,463.5 751.5,463.5 752,463.5 752.5,463.5 753,463.5 753.5,463.5 754,463.5 754.5,463.5 755,463.5 755.5,463.5 756,463.5 756.5,463.5 757,463.5 757.5,463.5 758,463.5 758.5,463.5 759,463.5 759.5,463.5 760,463.5 760.5,463.5 761,463.5 761.5,463.5 762,463.5 762.5,463.5 763,463.5 763.5,463.5 764,463.5 764.5,463.5" fill="none" stroke="#00ff00" stroke-linecap="square"/><polyline points="449.5,464.5 450,464.5 450.5,464.5 451,464.5 451.5,464.5 452,464.5 452.5,464.5 453,464.5 453.5,464.5 454,464.5 454.5,464.5 455,464.5 455.5,464.5 456,464.5 456.5,464.5 457,464.5 457.5,464.5 458,464.5 458.5,464.5 459,464.5 459.5,464.5 460,464.5 460.5,464.5 461,464.5 461.5,464.5 462,464.5 462.5,464.5 462.5,464 463,464 463.5,464 464,464 464.5,464 465,464 465.5,464 466,464 466.5,464 467,464 467.5,464 468,464 468.5,464 469,464 469.5,464 470,464 470.5,464 471,464 471.5,464 472,464 472.5,464 473,464 473.5,464 474,464 474.5,464 475,464 475.5,464 476,464 476.5,464 477,464 477.5,464 478,464 478.5,464 479,464 479.5,464 480,464 480.5,464 481,464 481.5,464 482,464 482.5,464 483,464 483.5,464 484,464 484.5,464 485,464 485.5,464 486,464 486.5,464 487,463.5 487.5,463.5 488,463.5 488.5,463.5 489,463.5 489.5,463.5 490,463.5 490.5,463.5 491,463.5 491.5,463.5 492,463.5 492.5,463.5 493,463.5 493.5,463.5 494,463.5 494.5,463.5 495,463.5 495.5,463.5 496,463.5 496.5,463.5 497,463.5 497.5,463.5 498,463.5 498.5,463 499,463 499.5,463 500,463 500.5,463 501,463 501.5,463 502,463 502.5,463 503,463 503.5,463 504,463 504.5,463 505,463 505.5,463 505.5,462.5 506,462.5 506.5,462.5 507,462.5 507.5,462.5 508,462.5 508.5,462.5 509,462.5 509.5,462.5 510,462.5 510.5,462.5 511,462.5 511,462 511.5,462 512,462 512.5,462 513,462 513.5,462 514,462 514.5,462 515,462 515,461.5 515.5,461.5 516,461.5 516.5,461.5 517,461.5 517.5,461.5 518,461.5 518.5,461.5 518.5,461 519,461 519.5,461 520,461 520.5,461 521,461 521.5,461 522,460.5 522.5,460.5 523,460.5 523.5,460.5 524,460.5 524.5,460 525,460 525.5,460 526,460 526.5,460 527,459.5 527.5,459.5 528,459.5 528.5,459.5 529,459 529.5,459 530,459 530.5,459 530.5,458.5 531,458.5 531.5,458.5 532,458.5 532.5,458 533,458 533.5,458 534,457.5 534.5,457.5 535,457.5 535.5,457 536,457 536.5,457 536.5,456.5 537,456.5 537.5,456.5 538,456.5 538,456 538.5,456 539,456 539,455.5 539.5,455.5 540,455.5 540.5,455 541,455 541.5,454.5 542,454.5 542,454 542.5,454 543,454 543.5,453.5 544,453.5 544,453 544.5,453 545,452.5 545.5,452.5 545.5,452 546,452 546.5,452 546.5,451.5 547,451.5 547,451 547.5,451 548,450.5 548.5,450 549,449.5 549.5,449.5 550,449 550.5,448.5 551,448 551.5,447.5 552,447 552.5,447 552.5,446.5 553,446 553.5,445.5 554,445 554.5,444.5 554.5,444 555,444 555,443.5 555.5,443 556,443 556,442.5 556.5,442 556.5,441.5 557,441.5 557,441 557.5,440.5 557.5,440 558,440 558,439.5 558.5,439 559,438.5 559,438 559.5,437.5 560,437 560,436.5 560.5,436 560.5,435.5 561,435 561,434.5 561.5,434 562,433.5 562,433 562.5,432.5 562.5,431.5 563,431 563,430.5 563.5,430 563.5,429.5 564,429 564,428 564.5,427.5 565,427 565,426 565.5,425.5 565.5,425 566,424 566,423.5 566.5,422.5 566.5,422 567,421 567,420.5 567.5,419.5 568,418.5 568,418 568.5,417 568.5,416 569,415 569,414.5 569.5,413.5 569.5,412.5 570,411.5 570,410.5 570.5,409.5 571,408.5 571,407.5 571.5,406.5 571.5,405.5 572,404 572,403 572.5,402 572.5,401 573,399.5 573,398.5 573.5,397 574,396 574,395 574.5,393.5 574.5,392 575,391 575,389.5 575.5,388.5 575.5,387 576,385.5 576,384.5 576.5,383 577,381.5 577,380 577.5,379 577.5,377.5 578,376 578,375 578.5,373.5 578.5,372 579,371 579,369.5 579.5,368 580,367 580,365.5 580.5,364.5 580.5,363.5 581,362 581,361 581.5,360 581.5,359 582,358 582,357.5 582.5,356.5 583,356 583,355 583.5,354.5 583.5,354 584,354 584,353.5 584.5,353.5 584.5,353 585,353 585.5,353.5 586,353.5 586,354 586.5,354.5 586.5,355 587,355.5 587,356.5 587.5,357 587.5,358 588,359 588,360 588.5,361 589,362.5 589,363.5 589.5,365 589.5,366.5 590,367.5 590,369 590.5,370.5 590.5,372 591,373.5 591,375.5 591.5,377 592,378.5 592,380 592.5,381.5 592.5,383.5 593,385 593,386.5 593.5,388 593.5,389.5 594,391 594,393 594.5,394.5 595,396 595,397.5 595.5,399 595.5,400.5 596,401.5 596,403 596.5,404.5 596.5,406 597,407 597,408.5 597.5,409.5 598,411 598,412 598.5,413.5 598.5,414.5 599,415.5 599,416.5 599.5,418 599.5,419 600,420 600,421 600.5,422 601,423 601,423.5 601.5,424.5 601.5,425.5 602,426.5 602,427 602.5,428 602.5,429 603,429.5 603,430.5 603.5,431 604,431.5 604,432.5 604.5,433 604.5,433.5 605,434.5 605,435 605.5,435.5 605.5,436 606,436.5 606,437.5 606.5,438 607,438.5 607,439 607.5,439.5 607.5,440 608,440.5 608,441 608.5,441.5 609,442 609,442.5 609.5,443 610,443.5 610.5,444 610.5,444.5 611,445 611.5,445.5 611.5,446 612,446 612,446.5 612.5,447 613,447 613,447.5 613.5,447.5 613.5,448 614,448.5 614.5,449 615,449.5 615.5,450 616,450 616,450.5 616.5,450.5 616.5,451 617,451 617,451.5 617.5,451.5 618,452 618.5,452.5 619,452.5 619.5,453 620,453 620,453.5 620.5,453.5 621,454 621.5,454 622,454.5 622.5,454.5 623,455 623.5,455 624,455.5 624.5,455.5 625,456 625.5,456 626,456 626,456.5 626.5,456.5 627,456.5 627.5,457 628,457 628.5,457 629,457 629,457.5 629.5,457.5 630,457.5 630.5,457.5 630.5,458 631,458 631.5,458 632,458 632.5,458.5 633,458.5 633.5,458.5 634,458.5 634.5,458.5 634.5,459 635,459 635.5,459 636,459 636.5,459 637,459.5 637.5,459.5 638,459.5 638.5,459.5 639,459.5 639.5,460 640,460 640.5,460 641,460 641.5,460 642,460 642.5,460 642.5,460.5 643,460.5 643.5,460.5 644,460.5 644.5,460.5 645,460.5 645.5,460.5 646,460.5 646.5,461 647,461 647.5,461 648,461 648.5,461 649,461 649.5,461 650,461 650.5,461 651,461.5 651.5,461.5 652,461.5 652.5,461.5 653,461.5 653.5,461.5 654,461.5 654.5,461.5 655,461.5 655.5,461.5 656,461.5 656.5,461.5 656.5,462 657,462 657.5,462 658,462 658.5,462 659,462 659.5,462 660,462 660.5,462 661,462 661.5,462 662,462 662.5,462 663,462 663.5,462 664,462.5 664.5,462.5 665,462.5 665.5,462.5 666,462.5 666.5,462.5 667,462.5 667.5,462.5 668,462.5 668.5,462.5 669,462.5 669.5,462.5 670,462.5 670.5,462.5 671,462.5 671.5,462.5 672,462.5 672.5,462.5 673,462.5 673.5,462.5 674,462.5 674.5,463 675,463 675.5,463 676,463 676.5,463 677,463 677.5,463 678,463 678.5,463 679,463 679.5,463 680,463 680.5,463 681,463 681.5,463 682,463 682.5,463 683,463 683.5,463 684,463 684.5,463 685,463 685.5,463 686,463 686.5,463 687,463 687.5,463" fill="none" stroke="#ff0000" stroke-linecap="square"/><polyline points="449.5,464.5 450,464.5 450.5,464.5 451,464.5 451.5,464.5 452,464.5 452.5,464.5 453,464.5 453.5,464.5 454,464.5 454.5,464.5 455,464.5 455.5,464.5 456,464.5 456.5,464.5 457,464.5 457.5,464.5 458,464.5 458.5,464.5 459,464.5 459.5,464.5 460,464.5 460.5,464.5 461,464.5 461.5,464.5 462,464.5 462.5,464.5 463,464.5 463.5,464.5 464,464.5 464.5,464.5 465,464.5 465.5,464.5 466,464.5 466.5,464.5 467,464.5 467.5,464.5 468,464.5 468.5,464.5 469,464.5 469,464 469.5,464 470,464 470.5,464 471,464 471.5,464 472,464 472.5,464 473,464 473.5,464 474,464 474.5,464 475,464 475.5,464 476,464 476.5,464 477,464 477.5,464 478,464 478.5,464 479,464 479.5,464 480,464 480.5,464 481,464 481.5,464 482,464 482.5,464 483,464 483.5,464 484,464 484.5,464 485,464 485.5,464 486,464 486.5,464 487,464 487.5,464 488,464 488.5,464 489,464 489.5,464 490,464 490.5,464 491,464 491.5,464 492,463.5 492.5,463.5 493,463.5 493.5,463.5 494,463.5 494.5,463.5 495,463.5 495.5,463.5 496,463.5 496.5,463.5 497,463.5 497.5,463.5 498,463.5 498.5,463.5 499,463.5 499.5,463.5 500,463.5 500.5,463.5 501,463.5 501.5,463.5 502,463.5 502.5,463.5 502.5,463 503,463 503.5,463 504,463 504.5,463 505,463 505.5,463 506,463 506.5,463 507,463 507.5,463 508,463 508.5,463 509,463 509.5,463 509.5,462.5 510,462.5 510.5,462.5 511,462.5 511.5,462.5 512,462.5 512.5,462.5 513,462.5 513.5,462.5 514,462.5 514.5,462.5 515,462 515.5,462 516,462 516.5,462 517,462 517.5,462 518,462 518.5,462 519,462 519.5,461.5 520,461.5 520.5,461.5 521,461.5 521.5,461.5 522,461.5 522.5,461.5 523,461 523.5,461 524,461 524.5,461 525,461 525.5,461 526,460.5 526.5,460.5 527,460.5 527.5,460.5 528,460.5 528.5,460.5 528.5,460 529,460 529.5,460 530,460 530.5,460 531,459.5 531.5,459.5 532,459.5 532.5,459.5 533,459.5 533,459 533.5,459 534,459 534.5,459 535,459 535,458.5 535.5,458.5 536,458.5 536.5,458.5 536.5,458 537,458 537.5,458 538,458 538.5,458 538.5,457.5 539,457.5 539.5,457.5 540,457 540.5,457 541,457 541.5,457 541.5,456.5 542,456.5 542.5,456.5 543,456 543.5,456 544,456 544.5,455.5 545,455.5 545.5,455 546,455 546.5,455 547,454.5 547.5,454.5 548,454 548.5,454 549,453.5 549.5,453.5 550,453.5 550,453 550.5,453 551,452.5 551.5,452.5 552,452 552.5,452 553,451.5 553.5,451.5 554,451 554.5,451 554.5,450.5 555,450.5 555.5,450 556,450 556.5,449.5 557,449.5 557,449 557.5,449 558,448.5 558.5,448.5 559,448 559.5,447.5 560,447.5 560,447 560.5,447 561,446.5 561.5,446 562,446 562.5,445.5 563,445 563.5,445 563.5,444.5 564,444.5 564,444 564.5,444 565,443.5 565.5,443.5 565.5,443 566,443 566,442.5 566.5,442.5 566.5,442 567,442 567,441.5 567.5,441.5 568,441 568.5,441 568.5,440.5 569,440.5 569,440 569.5,440 569.5,439.5 570,439.5 570,439 570.5,439 571,438.5 571.5,438 572,437.5 572.5,437 573,436.5 573.5,436 574,436 574,435.5 574.5,435.5 574.5,435 575,435 575,434.5 575.5,434.5 575.5,434 576,434 576,433.5 576.5,433.5 577,433 577.5,432.5 578,432 578.5,431.5 579,431 579.5,430.5 580,430.5 580,430 580.5,430 580.5,429.5 581,429.5 581,429 581.5,429 581.5,428.5 582,428.5 582,428 582.5,428 583,427.5 583.5,427 584,426.5 584.5,426 585,425.5 585.5,425 586,425 586.5,424.5 587,424 587.5,423.5 588,423.5 588,423 588.5,423 589,422.5 589.5,422.5 589.5,422 590,422 590.5,421.5 591,421.5 591,421 591.5,421 592,421 592,420.5 592.5,420.5 593,420 593.5,420 594,419.5 594.5,419.5 595,419.5 595.5,419 596,419 596.5,419 596.5,418.5 597,418.5 597.5,418.5 598,418.5 598.5,418.5 599,418.5 599,418 599.5,418 600,418 600.5,418 601,418 601.5,418 602,418 602.5,418 603,418.5 603.5,418.5 604,418.5 604.5,418.5 605,418.5 605.5,419 606,419 606.5,419 607,419 607,419.5 607.5,419.5 608,419.5 608.5,420 609,420 609.5,420.5 610,420.5 610.5,421 611,421 611.5,421.5 612,421.5 612,422 612.5,422 613,422 613,422.5 613.5,422.5 614,423 614.5,423 614.5,423.5 615,423.5 615,424 615.5,424 616,424 616,424.5 616.5,424.5 616.5,425 617,425 617.5,425.5 618,426 618.5,426 619,426.5 619.5,427 620,427.5 620.5,427.5 620.5,428 621,428 621,428.5 621.5,428.5 622,429 622.5,429 622.5,429.5 623,429.5 623,430 623.5,430 623.5,430.5 624,430.5 624.5,431 625,431.5 625.5,431.5 625.5,432 626,432 626.5,432.5 627,433 627.5,433.5 628,433.5 628.5,434 629,434.5 629.5,435 630,435 630,435.5 630.5,435.5 630.5,436 631,436 631.5,436 631.5,436.5 632,436.5 632,437 632.5,437 633,437.5 633.5,438 634,438 634.5,438.5 635,439 635.5,439 635.5,439.5 636,439.5 636.5,440 637,440.5 637.5,440.5 638,441 638.5,441 638.5,441.5 639,441.5 639.5,442 640,442 640.5,442.5 641,442.5 641,443 641.5,443 642,443.5 642.5,443.5 642.5,444 643,444 643.5,444 643.5,444.5 644,444.5 644.5,444.5 644.5,445 645,445 645.5,445.5 646,445.5 646.5,446 647,446 647.5,446.5 648,446.5 648.5,447 649,447 649.5,447 649.5,447.5 650,447.5 650.5,448 651,448 651.5,448.5 652,448.5 652.5,448.5 653,449 653.5,449 654,449.5 654.5,449.5 655,450 655.5,450 656,450 656.5,450.5 657,450.5 657.5,450.5 657.5,451 658,451 658.5,451 659,451 659,451.5 659.5,451.5 660,451.5 660.5,452 661,452 661.5,452 662,452 662,452.5 662.5,452.5 663,452.5 663.5,452.5 663.5,453 664,453 664.5,453 665,453 665.5,453.5 666,453.5 666.5,453.5 667,454 667.5,454 668,454 668.5,454 669,454.5 669.5,454.5 670,454.5 670.5,454.5 671,454.5 671,455 671.5,455 672,455 672.5,455 673,455.5 673.5,455.5 674,455.5 674.5,455.5 675,455.5 675.5,456 676,456 676.5,456 677,456 677.5,456 678,456.5 678.5,456.5 679,456.5 679.5,456.5 680,456.5 680.5,457 681,457 681.5,457 682,457 682.5,457 683,457 683.5,457.5 684,457.5 684.5,457.5 685,457.5 685.5,457.5 686,457.5 686.5,457.5 686.5,458 687,458 687.5,458 688,458 688.5,458 689,458 689.5,458 690,458.5 690.5,458.5 691,458.5 691.5,458.5 692,458.5 692.5,458.5 693,458.5 693.5,458.5 693.5,459 694,459 694.5,459 695,459 695.5,459 696,459 696.5,459 697,459 697.5,459 698,459 698,459.5 698.5,459.5 699,459.5 699.5,459.5 700,459.5 700.5,459.5 701,459.5 701.5,459.5 702,459.5 702.5,459.5 703,460 703.5,460 704,460 704.5,460 705,460 705.5,460 706,460 706.5,460 707,460 707.5,460 708,460 708.5,460 708.5,460.5 709,460.5 709.5,460.5 710,460.5 710.5,460.5 711,460.5 711.5,460.5 712,460.5 712.5,460.5 713,460.5 713.5,460.5 714,460.5 714.5,460.5 715,460.5 715,461 715.5,461 716,461 716.5,461 717,461 717.5,461 718,461 718.5,461 719,461 719.5,461 720,461 720.5,461 721,461 721.5,461 722,461 722.5,461 723,461 723,461.5 723.5,461.5 724,461.5 724.5,461.5 725,461.5 725.5,461.5 726,461.5 726.5,461.5 727,461.5 727.5,461.5 728,461.5 728.5,461.5 729,461.5 729.5,461.5 730,461.5 730.5,461.5 731,461.5 731.5,461.5 732,461.5 732.5,461.5 733,462 733.5,462 734,462 734.5,462 735,462 735.5,462 736,462 736.5,462 737,462 737.5,462 738,462 738.5,462 739,462 739.5,462 740,462 740.5,462 741,462 741.5,462 742,462 742.5,462 743,462 743.5,462 744,462 744.5,462 745,462 745,462.5 745.5,462.5 746,462.5 746.5,462.5 747,462.5 747.5,462.5 748,462.5 748.5,462.5 749,462.5 749.5,462.5 750,462.5 750.5,462.5 751,462.5 751.5,462.5 752,462.5 752.5,462.5 753,462.5 753.5,462.5 754,462.5 754.5,462.5 755,462.5 755.5,462.5 756,462.5 756.5,462.5 757,462.5 757.5,462.5 758,462.5 758.5,462.5 759,462.5 759.5,462.5 760,462.5 760.5,462.5 761,462.5 761.5,462.5 762,462.5 762.5,463 763,463 763.5,463 764,463 764.5,463 765,463 765.5,463 766,463 766.5,463 767,463 767.5,463 768,463 768.5,463 769,463 769.5,463 770,463 770.5,463 771,463 771.5,463 772,463 772.5,463 773,463 773.5,463 774,463 774.5,463 775,463 775.5,463 776,463 776.5,463 777,463 777.5,463 778,463 778.5,463 779,463 779.5,463 780,463 780.5,463 781,463 781.5,463 782,463 782.5,463 783,463 783.5,463 784,463 784.5,463 785,463 785.5,463 786,463 786.5,463 787,463 787.5,463 788,463.5 788.5,463.5 789,463.5 789.5,463.5 790,463.5 790.5,463.5 791,463.5 791.5,463.5 792,463.5 792.5,463.5 793,463.5 793.5,463.5 794,463.5 794.5,463.5 795,463.5 795.5,463.5 796,463.5 796.5,463.5" fill="none" stroke="#0096ff" stroke-linecap="square"/><line x1="194.5" y1="503" x2="194.5" y2="656" stroke="#7a7a7a"/><rect x="49.5" y="503.5" width="347" height="152" fill="none" stroke="#fff"/><line x1="76.5" y1="651" x2="76.5" y2="655" stroke="#fff"/><line x1="104.5" y1="651" x2="104.5" y2="655" stroke="#fff"/><line x1="131.5" y1="651" x2="131.5" y2="655" stroke="#fff"/><line x1="158.5" y1="651" x2="158.5" y2="655" stroke="#fff"/><line x1="185.5" y1="651" x2="185.5" y2="655" stroke="#fff"/><line x1="213.5" y1="651" x2="213.5" y2="655" stroke="#fff"/><line x1="240.5" y1="651" x2="240.5" y2="655" stroke="#fff"/><line x1="267.5" y1="651" x2="267.5" y2="655" stroke="#fff"/><line x1="294.5" y1="651" x2="294.5" y2="655" stroke="#fff"/><line x1="322.5" y1="651" x2="322.5" y2="655" stroke="#fff"/><line x1="349.5" y1="651" x2="349.5" y2="655" stroke="#fff"/><line x1="376.5" y1="651" x2="376.5" y2="655" stroke="#fff"/><line x1="49" y1="639.5" x2="54" y2="639.5" stroke="#fff"/><line x1="49" y1="623.5" x2="54" y2="623.5" stroke="#fff"/><line x1="49" y1="607.5" x2="54" y2="607.5" stroke="#fff"/><line x1="49" y1="591.5" x2="54" y2="591.5" stroke="#fff"/><line x1="49" y1="575.5" x2="54" y2="575.5" stroke="#fff"/><line x1="49" y1="559.5" x2="54" y2="559.5" stroke="#fff"/><line x1="49" y1="543.5" x2="54" y2="543.5" stroke="#fff"/><line x1="49" y1="527.5" x2="54" y2="527.5" stroke="#fff"/><line x1="49" y1="511.5" x2="54" y2="511.5" stroke="#fff"/><polyline points="49.5,517.5 50,517.5 50.5,517.5 51,517.5 51.5,517.5 52,517.5 52.5,517.5 53,517.5 53.5,517.5 54,517.5 54.5,517.5 55,517.5 55.5,517.5 56,517.5 56.5,517.5 57,517.5 57.5,518 58,518 58.5,518 59,518 59.5,518 60,518 60.5,518 61,518 61.5,518 62,518 62.5,518 63,518 63.5,518 64,518.5 64.5,518.5 65,518.5 65.5,518.5 66,518.5 66.5,518.5 67,518.5 67.5,518.5 68,518.5 68.5,518.5 69,519 69.5,519 70,519 70.5,519 71,519 71.5,519 72,519 72.5,519 73,519 73,519.5 73.5,519.5 74,519.5 74.5,519.5 75,519.5 75.5,519.5 76,519.5 76.5,520 77,520 77.5,520 78,520 78.5,520 79,520 79.5,520.5 80,520.5 80.5,520.5 81,520.5 81.5,520.5 82,520.5 82,521 82.5,521 83,521 83.5,521 84,521 84.5,521 84.5,521.5 85,521.5 85.5,521.5 86,521.5 86.5,521.5 86.5,522 87,522 87.5,522 88,522 88.5,522 88.5,522.5 89,522.5 89.5,522.5 90,522.5 90.5,523 91,523 91.5,523 92,523.5 92.5,523.5 93,523.5 93.5,523.5 93.5,524 94,524 94.5,524 95,524.5 95.5,524.5 96,524.5 96.5,525 97,525 97.5,525 97.5,525.5 98,525.5 98.5,525.5 99,525.5 99,526 99.5,526 100,526 100,526.5 100.5,526.5 101,526.5 101.5,527 102,527 102.5,527.5 103,527.5 103.5,528 104,528 104.5,528.5 105,528.5 105.5,529 106,529 106,529.5 106.5,529.5 107,530 107.5,530 108,530.5 108.5,530.5 108.5,531 109,531 109.5,531.5 110,531.5 110.5,532 111,532.5 111.5,532.5 111.5,533 112,533 112.5,533.5 113,534 113.5,534 114,534.5 114.5,535 115,535.5 115.5,536 116,536 116.5,536.5 117,537 117.5,537.5 118,538 118.5,538.5 119,539 119.5,539 119.5,539.5 120,539.5 120,540 120.5,540 120.5,540.5 121,541 121.5,541.5 122,542 122.5,542 122.5,542.5 123,543 123.5,543.5 124,544 124,544.5 124.5,544.5 124.5,545 125,545.5 125.5,545.5 125.5,546 126,546.5 126.5,547 126.5,547.5 127,547.5 127,548 127.5,548.5 128,549 128.5,549.5 129,550 129,550.5 129.5,551 130,551.5 130,552 130.5,552.5 131,553 131.5,553.5 131.5,554 132,554.5 132.5,555 132.5,555.5 133,556 133,556.5 133.5,557 133.5,557.5 134,557.5 134.5,558 134.5,558.5 135,559 135,559.5 135.5,560 135.5,560.5 136,561 136.5,561.5 136.5,562 137,562.5 137.5,563 137.5,563.5 138,564 138,564.5 138.5,565 138.5,565.5 139,566 139,566.5 139.5,567 139.5,567.5 140,568 140.5,568.5 140.5,569 141,569.5 141,570 141.5,570.5 141.5,571 142,571.5 142,572 142.5,572.5 142.5,573.5 143,574 143.5,574.5 143.5,575 144,575.5 144,576 144.5,576.5 144.5,577 145,577.5 145,578.5 145.5,579 145.5,579.5 146,580 146.5,580.5 146.5,581 147,581.5 147,582.5 147.5,583 147.5,583.5 148,584 148,584.5 148.5,585.5 148.5,586 149,586.5 149.5,587 149.5,587.5 150,588.5 150,589 150.5,589.5 150.5,590 151,590.5 151,591.5 151.5,592 151.5,592.5 152,593 152.5,594 152.5,594.5 153,595 153,595.5 153.5,596.5 153.5,597 154,597.5 154,598 154.5,599 154.5,599.5 155,600 155,600.5 155.5,601.5 156,602 156,602.5 156.5,603.5 156.5,604 157,604.5 157,605 157.5,606 157.5,606.5 158,607 158,607.5 158.5,608.5 159,609 159,609.5 159.5,610 159.5,611 160,611.5 160,612 160.5,612.5 160.5,613.5 161,614 161,614.5 161.5,615 162,616 162,616.5 162.5,617 162.5,617.5 163,618 163,619 163.5,619.5 163.5,620 164,620.5 164,621 164.5,621.5 165,622.5 165,623 165.5,623.5 165.5,624 166,624.5 166,625 166.5,625.5 166.5,626 167,627 167,627.5 167.5,628 168,628.5 168,629 168.5,629.5 168.5,630 169,630.5 169,631 169.5,631.5 169.5,632 170,632.5 170,633 170.5,633.5 171,634 171,634.5 171.5,635 171.5,635.5 172,636 172.5,636.5 172.5,637 173,637.5 173,638 173.5,638.5 174,639 174.5,639.5 174.5,640 175,640.5 175.5,641 175.5,641.5 176,642 176.5,642.5 177,643 177.5,643.5 177.5,644 178,644 178,644.5 178.5,644.5 178.5,645 179,645.5 179.5,646 180,646 180,646.5 180.5,646.5 180.5,647 181,647 181,647.5 181.5,647.5 181.5,648 182,648 182,648.5 182.5,648.5 183,648.5 183,649 183.5,649 183.5,649.5 184,649.5 184.5,650 185,650 185,650.5 185.5,650.5 186,650.5 186,651 186.5,651 187,651 187,651.5 187.5,651.5 188,651.5 188,652 188.5,652 189,652 189.5,652 189.5,652.5 190,652.5 190.5,652.5 191,653 191.5,653 192,653 192.5,653 193,653.5 193.5,653.5 194,653.5 194.5,653.5 195,653.5 195.5,654 196,654 196.5,654 197,654 197.5,654 198,654 198.5,654 199,654 199.5,654.5 200,654.5 200.5,654.5 201,654.5 201.5,654.5 202,654.5 202.5,654.5 203,654.5 203.5,654.5 204,654.5 204.5,654.5 205,654.5 205.5,654.5 206,654.5 206.5,654.5 207,654.5 207.5,654.5 208,655 208.5,655 209,655 209.5,655 210,655 210.5,655 211,655 211.5,655 212,655 212.5,655 213,655 213.5,655 214,655 214.5,655 215,655 215.5,655 216,655 216.5,655 217,655 217.5,655 218,655 218.5,655 219,655 219.5,655 220,655 220.5,655 221,655 221.5,655 222,655 222.5,655 223,655 223.5,655 224,655 224.5,655 225,655 225.5,655 226,655 226.5,655 227,655 227.5,655 228,655 228.5,655 229,655 229.5,655 230,655 230.5,655 231,655 231.5,655 232,655 232.5,655 233,655 233.5,655 234,655 234.5,655 235,655 235.5,655 236,655 236.5,655 237,655 237.5,655 238,655 238.5,655 239,655 239.5,655 240,655 240.5,655 241,655 241.5,655 242,655 242.5,655 243,655 243.5,655 244,655 244.5,655 245,655 245.5,655 246,655 246.5,655 247,655 247.5,655 248,655 248.5,655 249,655 249.5,655 250,655 250.5,655 251,655 251.5,655 252,655 252.5,655 253,655 253.5,655 254,655 254.5,655 255,655 255.5,655 256,655 256.5,655 257,655 257.5,655 258,655 258.5,655 259,655 259.5,655 260,655 260.5,655 261,655 261.5,655 262,655 262.5,655 263,655 263.5,655 264,655 264.5,655 265,655 265.5,655 266,655 266.5,655 267,655 267.5,655 268,655 268.5,655 269,655 269.5,655 270,655 270.5,655 271,655 271.5,655 272,655 272.5,655 273,655 273.5,655 274,655 274.5,655 275,655 275.5,655 276,655 276.5,655 277,655 277.5,655 278,655 278.5,655 279,655 279.5,655 280,655 280.5,655 281,655 281.5,655 282,655 282.5,655 283,655 283.5,655 284,655 284.5,655 285,655 285.5,655 286,655 286.5,655 287,655 287.5,655 288,655 288.5,655 289,655 289.5,655 290,655 290.5,655 291,655 291.5,655 292,655 292.5,655 293,655 293.5,655 294,655 294.5,655 295,655 295.5,655 296,655 296.5,655 297,655 297.5,655 298,655 298.5,655 299,655 299.5,655 300,655 300.5,655 301,655 301.5,655 302,655 302.5,655 303,655 303.5,655 304,655 304.5,655 305,655 305.5,655 306,655 306.5,655 307,655 307.5,655 308,655 308.5,655 309,655 309.5,655 310,655 310.5,655 311,655 311.5,655 312,655 312.5,655 313,655 313.5,655 314,655 314.5,655 315,655 315.5,655 316,655 316.5,655 317,655 317.5,655 318,655 318.5,655 319,655 319.5,655 320,655 320.5,655 321,655 321.5,655 322,655 322.5,655 323,655 323.5,655 324,655 324.5,655 325,655 325.5,655 326,655 326.5,655 327,655 327.5,655 328,655 328.5,655 329,655 329.5,655 330,655 330.5,655 331,655 331.5,655 332,655 332.5,655 333,655 333.5,655 334,655 334.5,655 335,655 335.5,655 336,655 336.5,655 337,655 337.5,655 338,655 338.5,655 339,655 339.5,655 340,655 340.5,655 341,655 341.5,655 342,655 342.5,655 343,655 343.5,655 344,655 344.5,655 345,655 345.5,655 346,655 346.5,655 347,655 347.5,655 348,655 348.5,655 349,655 349.5,655 350,655 350.5,655 351,655 351.5,655 352,655 352.5,655 353,655 353.5,655 354,655 354.5,655 355,655 355.5,655 356,655 356.5,655 357,655 357.5,655 358,655 358.5,655 359,655 359.5,655 360,655 360.5,655 361,655 361.5,655 362,655 362.5,655 363,655 363.5,655 364,655 364.5,655" fill="none" stroke="#00ff00" stroke-linecap="square"/><polyline points="49.5,517.5 50,517.5 50.5,517.5 51,517.5 51.5,517.5 52,517.5 52.5,517.5 53,517.5 53.5,517.5 54,517.5 54.5,518 55,518 55.5,518 56,518 56.5,518 57,518 57.5,518 58,518 58.5,518 59,518.5 59.5,518.5 60,518.5 60.5,518.5 61,518.5 61.5,518.5 62,518.5 62.5,518.5 62.5,519 63,519 63.5,519 64,519 64.5,519 65,519 65.5,519 66,519.5 66.5,519.5 67,519.5 67.5,519.5 68,519.5 68.5,519.5 68.5,520 69,520 69.5,520 70,520 70.5,520 71,520 71,520.5 71.5,520.5 72,520.5 72.5,520.5 73,520.5 73,521 73.5,521 74,521 74.5,521 75,521 75.5,521.5 76,521.5 76.5,521.5 77,521.5 77.5,522 78,522 78.5,522 79,522.5 79.5,522.5 80,522.5 80.5,522.5 80.5,523 81,523 81.5,523 82,523 82,523.5 82.5,523.5 83,523.5 83.5,523.5 83.5,524 84,524 84.5,524 85,524.5 85.5,524.5 86,524.5 86.5,525 87,525 87.5,525.5 88,525.5 88.5,526 89,526 89.5,526 89.5,526.5 90,526.5 90.5,526.5 90.5,527 91,527 91.5,527 91.5,527.5 92,527.5 92.5,527.5 93,528 93.5,528 93.5,528.5 94,528.5 94.5,529 95,529 95.5,529.5 96,529.5 96,530 96.5,530 97,530.5 97.5,530.5 97.5,531 98,531 98.5,531 98.5,531.5 99,531.5 99.5,532 100,532.5 100.5,532.5 100.5,533 101,533 101.5,533.5 102,533.5 102,534 102.5,534 102.5,534.5 103,534.5 103.5,535 104,535.5 104.5,535.5 104.5,536 105,536 105,536.5 105.5,536.5 105.5,537 106,537 106,537.5 106.5,537.5 106.5,538 107,538 107.5,538.5 108,539 108.5,539.5 109,540 109.5,540.5 110,541 110.5,541.5 111,542 111.5,542.5 111.5,543 112,543 112,543.5 112.5,543.5 112.5,544 113,544.5 113.5,544.5 113.5,545 114,545.5 114.5,546 114.5,546.5 115,546.5 115,547 115.5,547.5 116,548 116.5,548.5 117,549 117,549.5 117.5,550 118,550.5 118,551 118.5,551.5 119,552 119.5,552.5 119.5,553 120,553.5 120.5,554 120.5,554.5 121,555 121,555.5 121.5,555.5 121.5,556 122,556.5 122.5,557 122.5,557.5 123,558 123,558.5 123.5,559 124,559.5 124,560 124.5,560.5 124.5,561 125,561.5 125.5,562 125.5,562.5 126,563 126,563.5 126.5,564 126.5,564.5 127,565 127,565.5 127.5,566 127.5,566.5 128,567 128.5,567.5 128.5,568 129,568.5 129,569 129.5,569.5 129.5,570 130,570.5 130,571 130.5,571.5 130.5,572 131,572.5 131.5,573 131.5,574 132,574.5 132,575 132.5,575.5 132.5,576 133,576.5 133,577 133.5,577.5 133.5,578.5 134,579 134.5,579.5 134.5,580 135,580.5 135,581.5 135.5,582 135.5,582.5 136,583 136,583.5 136.5,584.5 136.5,585 137,585.5 137.5,586 137.5,587 138,587.5 138,588 138.5,588.5 138.5,589.5 139,590 139,590.5 139.5,591 139.5,592 140,592.5 140.5,593 140.5,594 141,594.5 141,595 141.5,595.5 141.5,596.5 142,597 142,597.5 142.5,598.5 142.5,599 143,599.5 143.5,600.5 143.5,601 144,601.5 144,602.5 144.5,603 144.5,603.5 145,604.5 145,605 145.5,605.5 145.5,606.5 146,607 146.5,607.5 146.5,608.5 147,609 147,609.5 147.5,610.5 147.5,611 148,611.5 148,612.5 148.5,613 148.5,613.5 149,614.5 149.5,615 149.5,615.5 150,616.5 150,617 150.5,617.5 150.5,618 151,619 151,619.5 151.5,620 151.5,621 152,621.5 152.5,622 152.5,622.5 153,623.5 153,624 153.5,624.5 153.5,625 154,626 154,626.5 154.5,627 154.5,627.5 155,628.5 155,629 155.5,629.5 156,630 156,630.5 156.5,631 156.5,632 157,632.5 157,633 157.5,633.5 157.5,634 158,634.5 158,635 158.5,635.5 159,636 159,636.5 159.5,637 159.5,637.5 160,638 160,638.5 160.5,639 160.5,639.5 161,640 161,640.5 161.5,641 162,641.5 162,642 162.5,642.5 162.5,643 163,643 163,643.5 163.5,644 163.5,644.5 164,645 164.5,645.5 165,646 165,646.5 165.5,646.5 165.5,647 166,647.5 166.5,648 167,648.5 167,649 167.5,649 168,649.5 168.5,650 169,650.5 169.5,651 170,651.5 170.5,651.5 171,652 171.5,652 171.5,652.5 172,652.5 172.5,653 173,653 173,653.5 173.5,653.5 174,653.5 174.5,654 175,654 175.5,654 176,654.5 176.5,654.5 177,654.5 177.5,654.5 178,655 178.5,655 179,655 179.5,655 180,655 180.5,655 181,655 181.5,655 182,655.5 182.5,655.5 183,655.5 183.5,655.5 184,655.5 184.5,655.5 185,655.5 185.5,655.5 186,655.5 186.5,655.5 187,655.5 187.5,655.5 188,655.5 188.5,655.5 189,655.5 189.5,655.5 190,655.5 190.5,655.5 191,655.5 191.5,655.5 192,655.5 192.5,655.5 193,655.5 193.5,655.5 194,655.5 194.5,655.5 195,655.5 195.5,655.5 196,655.5 196.5,655.5 197,655.5 197.5,655.5 198,655.5 198.5,655.5 199,655.5 199.5,655.5 200,655.5 200.5,655.5 201,655.5 201.5,655.5 202,655.5 202.5,655.5 203,655.5 203.5,655.5 204,655.5 204.5,655.5 205,655.5 205.5,655.5 206,655.5 206.5,655.5 207,655.5 207.5,655.5 208,655.5 208.5,655.5 209,655.5 209.5,655.5 210,655.5 210.5,655.5 211,655.5 211.5,655.5 212,655.5 212.5,655.5 213,655.5 213.5,655.5 214,655.5 214.5,655.5 215,655.5 215.5,655.5 216,655.5 216.5,655.5 217,655.5 217.5,655.5 218,655.5 218.5,655.5 219,655.5 219.5,655.5 220,655.5 220.5,655.5 221,655.5 221.5,655.5 222,655.5 222.5,655.5 223,655.5 223.5,655.5 224,655.5 224.5,655.5 225,655.5 225.5,655.5 226,655.5 226.5,655.5 227,655.5 227.5,655.5 228,655.5 228.5,655.5 229,655.5 229.5,655.5 230,655.5 230.5,655.5 231,655.5 231.5,655.5 232,655.5 232.5,655.5 233,655.5 233.5,655.5 234,655.5 234.5,655.5 235,655.5 235.5,655.5 236,655.5 236.5,655.5 237,655.5 237.5,655.5 238,655.5 238.5,655.5 239,655.5 239.5,655.5 240,655.5 240.5,655.5 241,655.5 241.5,655.5 242,655.5 242.5,655.5 243,655.5 243.5,655.5 244,655.5 244.5,655.5 245,655.5 245.5,655.5 246,655.5 246.5,655.5 247,655.5 247.5,655.5 248,655.5 248.5,655.5 249,655.5 249.5,655.5 250,655.5 250.5,655.5 251,655.5 251.5,655.5 252,655.5 252.5,655.5 253,655.5 253.5,655.5 254,655.5 254.5,655.5 255,655.5 255.5,655.5 256,655.5 256.5,655.5 257,655.5 257.5,655.5 258,655.5 258.5,655.5 259,655.5 259.5,655.5 260,655.5 260.5,655.5 261,655.5 261.5,655.5 262,655.5 262.5,655.5 263,655.5 263.5,655.5 264,655.5 264.5,655.5 265,655.5 265.5,655.5 266,655.5 266.5,655.5 267,655.5 267.5,655.5 268,655.5 268.5,655.5 269,655.5 269.5,655.5 270,655.5 270.5,655.5 271,655.5 271.5,655.5 272,655.5 272.5,655.5 273,655.5 273.5,655.5 274,655.5 274.5,655.5 275,655.5 275.5,655.5 276,655.5 276.5,655.5 277,655.5 277.5,655.5 278,655.5 278.5,655.5 279,655.5 279.5,655.5 280,655.5 280.5,655.5 281,655.5 281.5,655.5 282,655.5 282.5,655.5 283,655.5 283.5,655.5 284,655.5 284.5,655.5 285,655.5 285.5,655.5 286,655.5 286.5,655.5 287,655.5 287.5,655.5" fill="none" stroke="#ff0000" stroke-linecap="square"/><polyline points="49.5,517.5 50,517.5 50.5,517.5 51,517.5 51.5,517.5 52,517.5 52.5,517.5 53,517.5 53.5,517.5 54,517.5 54.5,517.5 55,517.5 55.5,517.5 56,517.5 56.5,517.5 57,517.5 57.5,517.5 58,517.5 58.5,517.5 59,517.5 59.5,517.5 60,517.5 60.5,517.5 61,517.5 61.5,517.5 62,517.5 62.5,517.5 63,517.5 63.5,517.5 64,517.5 64.5,517.5 65,518 65.5,518 66,518 66.5,518 67,518 67.5,518 68,518 68.5,518 69,518 69.5,518 70,518 70.5,518 71,518 71.5,518 72,518 72.5,518 73,518 73.5,518 74,518 74.5,518 74.5,518.5 75,518.5 75.5,518.5 76,518.5 76.5,518.5 77,518.5 77.5,518.5 78,518.5 78.5,518.5 79,518.5 79.5,518.5 80,518.5 80.5,518.5 81,518.5 81.5,519 82,519 82.5,519 83,519 83.5,519 84,519 84.5,519 85,519 85.5,519 86,519 86.5,519.5 87,519.5 87.5,519.5 88,519.5 88.5,519.5 89,519.5 89.5,519.5 90,519.5 90.5,520 91,520 91.5,520 92,520 92.5,520 93,520 93.5,520 94,520.5 94.5,520.5 95,520.5 95.5,520.5 96,520.5 96.5,520.5 97,521 97.5,521 98,521 98.5,521 99,521 99.5,521.5 100,521.5 100.5,521.5 101,521.5 101.5,521.5 102,522 102.5,522 103,522 103.5,522 103.5,522.5 104,522.5 104.5,522.5 105,522.5 105.5,522.5 106,523 106.5,523 107,523 107.5,523 107.5,523.5 108,523.5 108.5,523.5 109,523.5 109,524 109.5,524 110,524 110.5,524 111,524.5 111.5,524.5 112,524.5 112,525 112.5,525 113,525 113.5,525 113.5,525.5 114,525.5 114.5,525.5 114.5,526 115,526 115.5,526 116,526.5 116.5,526.5 117,526.5 117,527 117.5,527 118,527 118,527.5 118.5,527.5 119,527.5 119.5,528 120,528 120,528.5 120.5,528.5 121,528.5 121,529 121.5,529 122,529.5 122.5,529.5 123,530 123.5,530 124,530.5 124.5,530.5 124.5,531 125,531 125.5,531.5 126,531.5 126,532 126.5,532 127,532.5 127.5,532.5 127.5,533 128,533 128.5,533.5 129,533.5 129,534 129.5,534 129.5,534.5 130,534.5 130.5,535 131,535.5 131.5,535.5 131.5,536 132,536 132,536.5 132.5,536.5 133,537 133.5,537.5 134,538 134.5,538 134.5,538.5 135,538.5 135,539 135.5,539 135.5,539.5 136,539.5 136,540 136.5,540 136.5,540.5 137,541 137.5,541 137.5,541.5 138,541.5 138,542 138.5,542 138.5,542.5 139,542.5 139,543 139.5,543.5 140,544 140.5,544 140.5,544.5 141,545 141.5,545.5 141.5,546 142,546 142,546.5 142.5,547 143,547.5 143.5,548 144,548.5 144,549 144.5,549 144.5,549.5 145,550 145.5,550.5 145.5,551 146,551.5 146.5,551.5 146.5,552 147,552.5 147,553 147.5,553 147.5,553.5 148,554 148,554.5 148.5,554.5 148.5,555 149,555.5 149.5,556 149.5,556.5 150,556.5 150,557 150.5,557.5 150.5,558 151,558.5 151,559 151.5,559 151.5,559.5 152,560 152.5,560.5 152.5,561 153,561.5 153,562 153.5,562 153.5,562.5 154,563 154,563.5 154.5,564 154.5,564.5 155,565 155,565.5 155.5,566 156,566.5 156,567 156.5,567 156.5,567.5 157,568 157,568.5 157.5,569 157.5,569.5 158,570 158,570.5 158.5,571 159,571.5 159,572 159.5,572.5 159.5,573 160,573.5 160,574 160.5,574.5 160.5,575 161,575.5 161,576 161.5,576.5 162,577 162,577.5 162.5,578 162.5,578.5 163,579 163,579.5 163.5,580 163.5,580.5 164,581 164,581.5 164.5,582 165,582.5 165,583.5 165.5,584 165.5,584.5 166,585 166,585.5 166.5,586 166.5,586.5 167,587 167,587.5 167.5,588 168,588.5 168,589 168.5,589.5 168.5,590 169,590.5 169,591 169.5,591.5 169.5,592.5 170,593 170,593.5 170.5,594 171,594.5 171,595 171.5,595.5 171.5,596 172,596.5 172,597 172.5,597.5 172.5,598 173,598.5 173,599 173.5,599.5 174,600 174,600.5 174.5,601 174.5,601.5 175,602 175,602.5 175.5,603 175.5,603.5 176,604 176,604.5 176.5,605 177,605.5 177,606 177.5,606.5 177.5,607 178,607.5 178,608 178.5,608.5 178.5,609 179,609.5 179,610 179.5,610.5 180,611 180,611.5 180.5,612 180.5,612.5 181,613 181,613.5 181.5,614 181.5,614.5 182,614.5 182,615 182.5,615.5 183,616 183,616.5 183.5,617 183.5,617.5 184,618 184.5,618.5 184.5,619 185,619.5 185,620 185.5,620.5 186,620.5 186,621 186.5,621.5 186.5,622 187,622 187,622.5 187.5,623 187.5,623.5 188,623.5 188,624 188.5,624.5 189,625 189.5,625.5 189.5,626 190,626 190,626.5 190.5,627 191,627.5 191,628 191.5,628 192,628.5 192,629 192.5,629 192.5,629.5 193,630 193.5,630.5 194,631 194.5,631.5 195,632 195.5,632.5 196,633 196.5,633.5 197,634 197.5,634.5 198,634.5 198,635 198.5,635 199,635.5 199.5,636 200,636.5 200.5,636.5 201,637 201.5,637.5 202,637.5 202,638 202.5,638 203,638.5 203.5,639 204,639 204.5,639.5 205,639.5 205.5,640 206,640 206,640.5 206.5,640.5 207,640.5 207.5,641 208,641 208,641.5 208.5,641.5 209,641.5 209,642 209.5,642 210,642 210.5,642 210.5,642.5 211,642.5 211.5,642.5 212,643 212.5,643 213,643 213.5,643.5 214,643.5 214.5,643.5 214.5,644 215,644 215.5,644 216,644 216.5,644 216.5,644.5 217,644.5 217.5,644.5 218,644.5 218.5,645 219,645 219.5,645 220,645 220.5,645 220.5,645.5 221,645.5 221.5,645.5 222,645.5 222.5,645.5 223,645.5 223,646 223.5,646 224,646 224.5,646 225,646 225.5,646 226,646 226.5,646.5 227,646.5 227.5,646.5 228,646.5 228.5,646.5 229,646.5 229.5,646.5 230,646.5 230,647 230.5,647 231,647 231.5,647 232,647 232.5,647 233,647 233.5,647 234,647 234.5,647 235,647 235,647.5 235.5,647.5 236,647.5 236.5,647.5 237,647.5 237.5,647.5 238,647.5 238.5,647.5 239,647.5 239.5,647.5 240,647.5 240.5,647.5 241,647.5 241.5,647.5 242,647.5 242.5,648 243,648 243.5,648 244,648 244.5,648 245,648 245.5,648 246,648 246.5,648 247,648 247.5,648 248,648 248.5,648 249,648 249.5,648 250,648 250.5,648 251,648 251.5,648 252,648 252.5,648 253,648 253.5,648 254,648 254.5,648.5 255,648.5 255.5,648.5 256,648.5 256.5,648.5 257,648.5 257.5,648.5 258,648.5 258.5,648.5 259,648.5 259.5,648.5 260,648.5 260.5,648.5 261,648.5 261.5,648.5 262,648.5 262.5,648.5 263,648.5 263.5,648.5 264,648.5 264.5,648.5 265,648.5 265.5,648.5 266,648.5 266.5,648.5 267,648.5 267.5,648.5 268,648.5 268.5,648.5 269,648.5 269.5,648.5 270,648.5 270.5,648.5 271,648.5 271.5,648.5 272,648.5 272.5,648.5 273,648.5 273.5,648.5 274,648.5 274.5,648.5 275,648.5 275.5,648.5 276,648.5 276.5,648.5 277,648.5 277.5,648.5 278,648.5 278.5,648.5 279,648.5 279.5,648.5 280,648.5 280.5,648.5 281,648.5 281.5,648.5 282,648.5 282.5,648.5 283,648.5 283.5,648.5 284,648.5 284.5,648.5 285,648.5 285.5,648.5 286,648.5 286.5,648.5 286.5,649 287,649 287.5,649 288,649 288.5,649 289,649 289.5,649 290,649 290.5,649 291,649 291.5,649 292,649 292.5,649 293,649 293.5,649 294,649 294.5,649 295,649 295.5,649 296,649 296.5,649 297,649 297.5,649 298,649 298.5,649 299,649 299.5,649 300,649 300.5,649 301,649 301.5,649 302,649 302.5,649 303,649 303.5,649 304,649 304.5,649 305,649 305.5,649 306,649 306.5,649 307,649 307.5,649 308,649 308.5,649 309,649 309.5,649 310,649 310.5,649 311,649 311.5,649 312,649 312.5,649 313,649 313.5,649 314,649 314.5,649 315,649 315.5,649 316,649 316.5,649 317,649 317.5,649 318,649 318.5,649 319,649 319.5,649 320,649 320.5,649 321,649 321.5,649 322,649 322.5,649 323,649 323.5,649 324,649 324.5,649 325,649 325.5,649 326,649 326.5,649 327,649 327.5,649 328,649 328.5,649 329,649 329.5,649 330,649 330.5,649 331,649 331.5,649 332,649 332.5,649 333,649 333.5,649 334,649 334.5,649 335,649 335.5,649 336,649 336.5,649 337,649 337.5,649 338,649 338.5,649 339,649 339.5,649 340,649 340.5,649 341,649 341.5,649 342,649 342.5,649 343,649 343.5,649 344,649 344.5,649 345,649 345.5,649 346,649 346.5,649 347,649 347.5,649 348,649 348.5,649 349,649 349.5,649 350,649 350.5,649 351,649 351.5,649 352,649 352.5,649 353,649 353.5,649 354,649 354.5,649 355,649 355.5,649 356,649 356.5,649 357,649 357.5,649 358,649 358.5,649 359,649 359.5,649 360,649 360.5,649 361,649 361.5,649 362,649 362.5,649 363,649 363.5,649 364,649 364.5,649 365,649 365.5,649 366,649 366.5,649 367,649 367.5,649 368,649 368.5,649 369,649 369.5,649 370,649 370.5,649 371,649 371.5,649 372,649 372.5,649 373,649 373.5,649 374,649 374.5,649 375,649 375.5,649 376,649 376.5,649 377,649 377.5,649 378,649 378.5,649 379,649 379.5,649 380,649 380.5,649 381,649 381.5,649 382,649 382.5,649 383,649 383.5,649 384,649 384.5,649 385,649 385.5,649 386,649 386.5,649 387,649 387.5,649 388,649 388.5,649 389,649 389.5,649 390,649 390.5,649 391,649 391.5,649 392,649 392.5,649 393,649 393.5,649 394,649 394.5,649 395,649 395.5,649 396,649 396.5,649" fill="none" stroke="#0096ff" stroke-linecap="square"/><line x1="594.5" y1="503" x2="594.5" y2="656" stroke="#7a7a7a"/><rect x="449.5" y="503.5" width="347" height="152" fill="none" stroke="#fff"/><line x1="476.5" y1="651" x2="476.5" y2="655" stroke="#fff"/><line x1="504.5" y1="651" x2="504.5" y2="655" stroke="#fff"/><line x1="531.5" y1="651" x2="531.5" y2="655" stroke="#fff"/><line x1="558.5" y1="651" x2="558.5" y2="655" stroke="#fff"/><line x1="585.5" y1="651" x2="585.5" y2="655" stroke="#fff"/><line x1="613.5" y1="651" x2="613.5" y2="655" stroke="#fff"/><line x1="640.5" y1="651" x2="640.5" y2="655" stroke="#fff"/><line x1="667.5" y1="651" x2="667.5" y2="655" stroke="#fff"/><line x1="694.5" y1="651" x2="694.5" y2="655" stroke="#fff"/><line x1="722.5" y1="651" x2="722.5" y2="655" stroke="#fff"/><line x1="749.5" y1="651" x2="749.5" y2="655" stroke="#fff"/><line x1="776.5" y1="651" x2="776.5" y2="655" stroke="#fff"/><line x1="449" y1="639.5" x2="454" y2="639.5" stroke="#fff"/><line x1="449" y1="623.5" x2="454" y2="623.5" stroke="#fff"/><line x1="449" y1="607.5" x2="454" y2="607.5" stroke="#fff"/><line x1="449" y1="591.5" x2="454" y2="591.5" stroke="#fff"/><line x1="449" y1="575.5" x2="454" y2="575.5" stroke="#fff"/><line x1="449" y1="559.5" x2="454" y2="559.5" stroke="#fff"/><line x1="449" y1="543.5" x2="454" y2="543.5" stroke="#fff"/><line x1="449" y1="527.5" x2="454" y2="527.5" stroke="#fff"/><line x1="449" y1="511.5" x2="454" y2="511.5" stroke="#fff"/><polyline points="449.5,654 450,654 450.5,654 451,654 451.5,654 452,654 452.5,654 453,654 453.5,654 454,654 454.5,654 455,654 455.5,654 456,654 456.5,654 457,653.5 457.5,653.5 458,653.5 458.5,653.5 459,653.5 459.5,653.5 460,653.5 460.5,653.5 461,653.5 461.5,653.5 462,653.5 462.5,653 463,653 463.5,653 464,653 464.5,653 465,653 465.5,653 466,653 466.5,653 466.5,652.5 467,652.5 467.5,652.5 468,652.5 468.5,652.5 469,652.5 469.5,652.5 470,652.5 470.5,652 471,652 471.5,652 472,652 472.5,652 473,652 473.5,651.5 474,651.5 474.5,651.5 475,651.5 475.5,651.5 476,651.5 476.5,651 477,651 477.5,651 478,651 478.5,651 479,650.5 479.5,650.5 480,650.5 480.5,650.5 481,650.5 481,650 481.5,650 482,650 482.5,650 483,650 483.5,649.5 484,649.5 484.5,649.5 485,649 485.5,649 486,649 486.5,649 487,648.5 487.5,648.5 488,648.5 488.5,648 489,648 489.5,648 490,647.5 490.5,647.5 491,647.5 491.5,647 492,647 492.5,647 493,646.5 493.5,646.5 494,646 494.5,646 495,646 495.5,645.5 496,645.5 496.5,645 497,645 497.5,644.5 498,644.5 498.5,644.5 498.5,644 499,644 499.5,644 499.5,643.5 500,643.5 500.5,643 501,643 501.5,643 501.5,642.5 502,642.5 502.5,642 503,642 503,641.5 503.5,641.5 504,641 504.5,641 505,640.5 505.5,640.5 505.5,640 506,640 506.5,639.5 507,639.5 507.5,639 508,639 508,638.5 508.5,638.5 508.5,638 509,638 509.5,637.5 510,637 510.5,637 511,636.5 511.5,636 512,636 512,635.5 512.5,635.5 512.5,635 513,635 513.5,634.5 514,634 514.5,634 514.5,633.5 515,633.5 515,633 515.5,633 515.5,632.5 516,632.5 516.5,632 517,631.5 517.5,631 518,630.5 518.5,630 519,629.5 519.5,629 520,628.5 520.5,628 521,627.5 521.5,627 521.5,626.5 522,626.5 522.5,626 523,625.5 523.5,625 523.5,624.5 524,624.5 524,624 524.5,624 524.5,623.5 525,623 525.5,623 525.5,622.5 526,622 526.5,621.5 526.5,621 527,621 527,620.5 527.5,620.5 527.5,620 528,619.5 528.5,619.5 528.5,619 529,618.5 529.5,618 529.5,617.5 530,617.5 530,617 530.5,616.5 531,616 531.5,615.5 532,615 532,614.5 532.5,614 533,613.5 533,613 533.5,613 533.5,612.5 534,612 534.5,612 534.5,611.5 535,611 535.5,610.5 535.5,610 536,609.5 536.5,609 536.5,608.5 537,608.5 537.5,608 537.5,607.5 538,607.5 538,607 538.5,606.5 538.5,606 539,606 539,605.5 539.5,605 540,604.5 540.5,604 541,603.5 541,603 541.5,603 541.5,602.5 542,602 542.5,601.5 543,601 543.5,600.5 544,600 544.5,599.5 544.5,599 545,599 545,598.5 545.5,598.5 545.5,598 546,598 546.5,597.5 546.5,597 547,597 547,596.5 547.5,596.5 547.5,596 548,596 548.5,595.5 549,595 549.5,595 549.5,594.5 550,594.5 550.5,594 551,594 551,593.5 551.5,593.5 552,593 552.5,593 553,593 553,592.5 553.5,592.5 554,592.5 554.5,592.5 555,592.5 555,592 555.5,592 556,592 556.5,592 557,592.5 557.5,592.5 558,592.5 558.5,592.5 559,593 559.5,593 560,593.5 560.5,593.5 560.5,594 561,594 561,594.5 561.5,594.5 562,594.5 562,595 562.5,595 562.5,595.5 563,596 563.5,596.5 564,597 564,597.5 564.5,597.5 565,598 565,598.5 565.5,599 566,599.5 566,600 566.5,600.5 566.5,601 567,601.5 567,602 567.5,602.5 568,602.5 568,603 568.5,603.5 568.5,604 569,604.5 569,605.5 569.5,606 569.5,606.5 570,607 570,607.5 570.5,608 571,608.5 571,609 571.5,609.5 571.5,610.5 572,611 572,611.5 572.5,612 572.5,612.5 573,613.5 573,614 573.5,614.5 574,615 574,616 574.5,616.5 574.5,617 575,617.5 575,618.5 575.5,619 575.5,619.5 576,620.5 576,621 576.5,621.5 577,622 577,623 577.5,623.5 577.5,624 578,625 578,625.5 578.5,626 578.5,626.5 579,627.5 579,628 579.5,628.5 580,629 580,629.5 580.5,630.5 580.5,631 581,631.5 581,632 581.5,632.5 581.5,633 582,634 582,634.5 582.5,635 583,635.5 583,636 583.5,636.5 583.5,637 584,637.5 584,638 584.5,638.5 584.5,639 585,639.5 585,640 585.5,640.5 586,641 586,641.5 586.5,641.5 586.5,642 587,642.5 587,643 587.5,643.5 588,644 588,644.5 588.5,645 589,645 589,645.5 589.5,646 590,646.5 590,647 590.5,647 590.5,647.5 591,647.5 591,648 591.5,648 592,648.5 592.5,649 593,649.5 593.5,650 594,650 594,650.5 594.5,650.5 595,651 595.5,651 596,651.5 596.5,651.5 596.5,652 597,652 597.5,652 598,652.5 598.5,652.5 599,653 599.5,653 600,653 600.5,653.5 601,653.5 601.5,653.5 602,653.5 602.5,654 603,654 603.5,654 604,654 604.5,654 605,654.5 605.5,654.5 606,654.5 606.5,654.5 607,654.5 607.5,654.5 608,654.5 608.5,654.5 609,654.5 609,655 609.5,655 610,655 610.5,655 611,655 611.5,655 612,655 612.5,655 613,655 613.5,655 614,655 614.5,655 615,655 615.5,655 616,655 616.5,655 617,655 617.5,655 618,655 618.5,655 619,655 619.5,655 619.5,655.5 620,655.5 620.5,655.5 621,655.5 621.5,655.5 622,655.5 622.5,655.5 623,655.5 623.5,655.5 624,655.5 624.5,655.5 625,655.5 625.5,655.5 626,655.5 626.5,655.5 627,655.5 627.5,655.5 628,655.5 628.5,655.5 629,655.5 629.5,655.5 630,655.5 630.5,655.5 631,655.5 631.5,655.5 632,655.5 632.5,655.5 633,655.5 633.5,655.5 634,655.5 634.5,655.5 635,655.5 635.5,655.5 636,655.5 636.5,655.5 637,655.5 637.5,655.5 638,655.5 638.5,655.5 639,655.5 639.5,655.5 640,655.5 640.5,655.5 641,655.5 641.5,655.5 642,655.5 642.5,655.5 643,655.5 643.5,655.5 644,655.5 644.5,655.5 645,655.5 645.5,655.5 646,655.5 646.5,655.5 647,655.5 647.5,655.5 648,655.5 648.5,655.5 649,655.5 649.5,655.5 650,655.5 650.5,655.5 651,655.5 651.5,655.5 652,655.5 652.5,655.5 653,655.5 653.5,655.5 654,655.5 654.5,655.5 655,655.5 655.5,655.5 656,655.5 656.5,655.5 657,655.5 657.5,655.5 658,655.5 658.5,655.5 659,655.5 659.5,655.5 660,655.5 660.5,655.5 661,655.5 661.5,655.5 662,655.5 662.5,655.5 663,655.5 663.5,655.5 664,655.5 664.5,655.5 665,655.5 665.5,655.5 666,655.5 666.5,655.5 667,655.5 667.5,655.5 668,655.5 668.5,655.5 669,655.5 669.5,655.5 670,655.5 670.5,655.5 671,655.5 671.5,655.5 672,655.5 672.5,655.5 673,655.5 673.5,655.5 674,655.5 674.5,655.5 675,655.5 675.5,655.5 676,655.5 676.5,655.5 677,655.5 677.5,655.5 678,655.5 678.5,655.5 679,655.5 679.5,655.5 680,655.5 680.5,655.5 681,655.5 681.5,655.5 682,655.5 682.5,655.5 683,655.5 683.5,655.5 684,655.5 684.5,655.5 685,655.5 685.5,655.5 686,655.5 686.5,655.5 687,655.5 687.5,655.5 688,655.5 688.5,655.5 689,655.5 689.5,655.5 690,655.5 690.5,655.5 691,655.5 691.5,655.5 692,655.5 692.5,655.5 693,655.5 693.5,655.5 694,655.5 694.5,655.5 695,655.5 695.5,655.5 696,655.5 696.5,655.5 697,655.5 697.5,655.5 698,655.5 698.5,655.5 699,655.5 699.5,655.5 700,655.5 700.5,655.5 701,655.5 701.5,655.5 702,655.5 702.5,655.5 703,655.5 703.5,655.5 704,655.5 704.5,655.5 705,655.5 705.5,655.5 706,655.5 706.5,655.5 707,655.5 707.5,655.5 708,655.5 708.5,655.5 709,655.5 709.5,655.5 710,655.5 710.5,655.5 711,655.5 711.5,655.5 712,655.5 712.5,655.5 713,655.5 713.5,655.5 714,655.5 714.5,655.5 715,655.5 715.5,655.5 716,655.5 716.5,655.5 717,655.5 717.5,655.5 718,655.5 718.5,655.5 719,655.5 719.5,655.5 720,655.5 720.5,655.5 721,655.5 721.5,655.5 722,655.5 722.5,655.5 723,655.5 723.5,655.5 724,655.5 724.5,655.5 725,655.5 725.5,655.5 726,655.5 726.5,655.5 727,655.5 727.5,655.5 728,655.5 728.5,655.5 729,655.5 729.5,655.5 730,655.5 730.5,655.5 731,655.5 731.5,655.5 732,655.5 732.5,655.5 733,655.5 733.5,655.5 734,655.5 734.5,655.5 735,655.5 735.5,655.5 736,655.5 736.5,655.5 737,655.5 737.5,655.5 738,655.5 738.5,655.5 739,655.5 739.5,655.5 740,655.5 740.5,655.5 741,655.5 741.5,655.5 742,655.5 742.5,655.5 743,655.5 743.5,655.5 744,655.5 744.5,655.5 745,655.5 745.5,655.5 746,655.5 746.5,655.5 747,655.5 747.5,655.5 748,655.5 748.5,655.5 749,655.5 749.5,655.5 750,655.5 750.5,655.5 751,655.5 751.5,655.5 752,655.5 752.5,655.5 753,655.5 753.5,655.5 754,655.5 754.5,655.5 755,655.5 755.5,655.5 756,655.5 756.5,655.5 757,655.5 757.5,655.5 758,655.5 758.5,655.5 759,655.5 759.5,655.5 760,655.5 760.5,655.5 761,655.5 761.5,655.5 762,655.5 762.5,655.5 763,655.5 763.5,655.5 764,655.5 764.5,655.5" fill="none" stroke="#00ff00" stroke-linecap="square"/><polyline points="449.5,653 450,653 450.5,653 451,653 451.5,653 452,653 452.5,653 453,653 453.5,653 454,653 454,652.5 454.5,652.5 455,652.5 455.5,652.5 456,652.5 456.5,652.5 457,652.5 457.5,652.5 458,652 458.5,652 459,652 459.5,652 460,652 460.5,652 461,652 461,651.5 461.5,651.5 462,651.5 462.5,651.5 463,651.5 463.5,651.5 464,651 464.5,651 465,651 465.5,651 466,651 466.5,651 466.5,650.5 467,650.5 467.5,650.5 468,650.5 468.5,650.5 469,650 469.5,650 470,650 470.5,650 471,650 471,649.5 471.5,649.5 472,649.5 472.5,649.5 473,649 473.5,649 474,649 474.5,649 474.5,648.5 475,648.5 475.5,648.5 476,648.5 476,648 476.5,648 477,648 477.5,648 478,647.5 478.5,647.5 479,647.5 479.5,647 480,647 480.5,647 481,646.5 481.5,646.5 482,646 482.5,646 483,646 483.5,645.5 484,645.5 484.5,645 485,645 485.5,644.5 486,644.5 486.5,644.5 486.5,644 487,644 487.5,644 487.5,643.5 488,643.5 488.5,643.5 488.5,643 489,643 489.5,643 489.5,642.5 490,642.5 490.5,642.5 490.5,642 491,642 491.5,641.5 492,641.5 492.5,641 493,641 493,640.5 493.5,640.5 494,640 494.5,640 494.5,639.5 495,639.5 495.5,639.5 495.5,639 496,639 496.5,638.5 497,638.5 497,638 497.5,638 497.5,637.5 498,637.5 498.5,637.5 498.5,637 499,637 499,636.5 499.5,636.5 500,636 500.5,635.5 501,635 501.5,635 502,634.5 502.5,634 503,633.5 503.5,633 504,632.5 504.5,632.5 504.5,632 505,632 505,631.5 505.5,631.5 505.5,631 506,631 506,630.5 506.5,630.5 506.5,630 507,630 507.5,629.5 508,629 508.5,628.5 509,628 509.5,627.5 509.5,627 510,627 510.5,626.5 511,626 511.5,625.5 511.5,625 512,625 512,624.5 512.5,624.5 512.5,624 513,623.5 513.5,623.5 513.5,623 514,622.5 514.5,622 515,621.5 515,621 515.5,621 515.5,620.5 516,620 516.5,620 516.5,619.5 517,619 517.5,618.5 517.5,618 518,618 518,617.5 518.5,617 519,616.5 519.5,616 519.5,615.5 520,615.5 520,615 520.5,614.5 521,614 521,613.5 521.5,613 522,612.5 522.5,612 523,611.5 523,611 523.5,610.5 524,610 524,609.5 524.5,609.5 524.5,609 525,608.5 525.5,608 526,607.5 526,607 526.5,606.5 527,606 527,605.5 527.5,605 528,604.5 528.5,604 529,603.5 529,603 529.5,602.5 530,602 530,601.5 530.5,601.5 530.5,601 531,600.5 531.5,600 532,599.5 532,599 532.5,599 532.5,598.5 533,598 533.5,597.5 533.5,597 534,597 534.5,596.5 534.5,596 535,596 535,595.5 535.5,595.5 535.5,595 536,594.5 536.5,594 537,593.5 537.5,593.5 537.5,593 538,593 538,592.5 538.5,592.5 538.5,592 539,592 539,591.5 539.5,591.5 539.5,591 540,591 540.5,591 540.5,590.5 541,590.5 541,590 541.5,590 542,590 542,589.5 542.5,589.5 543,589.5 543.5,589 544,589 544.5,589 545,588.5 545.5,588.5 546,588.5 546.5,588.5 547,588.5 547,589 547.5,589 548,589 548.5,589 548.5,589.5 549,589.5 549.5,589.5 549.5,590 550,590 550.5,590.5 551,591 551.5,591.5 552,592 552.5,592 552.5,592.5 553,593 553.5,593.5 553.5,594 554,594.5 554.5,595 554.5,595.5 555,596 555,596.5 555.5,597 556,597.5 556,598 556.5,598.5 556.5,599 557,599.5 557,600 557.5,600.5 557.5,601 558,602 558,602.5 558.5,603 559,603.5 559,604.5 559.5,605 559.5,605.5 560,606.5 560,607 560.5,607.5 560.5,608.5 561,609 561,610 561.5,610.5 562,611.5 562,612 562.5,613 562.5,613.5 563,614.5 563,615 563.5,616 563.5,617 564,617.5 564,618.5 564.5,619 565,620 565,621 565.5,621.5 565.5,622.5 566,623 566,624 566.5,625 566.5,625.5 567,626.5 567,627 567.5,628 568,629 568,629.5 568.5,630.5 568.5,631 569,632 569,632.5 569.5,633.5 569.5,634 570,635 570,635.5 570.5,636.5 571,637 571,638 571.5,638.5 571.5,639 572,640 572,640.5 572.5,641 572.5,641.5 573,642.5 573,643 573.5,643.5 574,644 574,644.5 574.5,645 574.5,645.5 575,646 575,646.5 575.5,647 575.5,647.5 576,648 576,648.5 576.5,648.5 577,649 577,649.5 577.5,650 578,650.5 578,651 578.5,651 578.5,651.5 579,651.5 579,652 579.5,652 580,652.5 580.5,653 581,653 581,653.5 581.5,653.5 582,654 582.5,654 583,654 583.5,654.5 584,654.5 584.5,654.5 585,655 585.5,655 586,655 586.5,655 587,655 587.5,655 588,655 588.5,655 589,655.5 589.5,655.5 590,655.5 590.5,655.5 591,655.5 591.5,655.5 592,655.5 592.5,655.5 593,655.5 593.5,655.5 594,655.5 594.5,655.5 595,655.5 595.5,655.5 596,655.5 596.5,655.5 597,655.5 597.5,655.5 598,655.5 598.5,655.5 599,655.5 599.5,655.5 600,655.5 600.5,655.5 601,655.5 601.5,655.5 602,655.5 602.5,655.5 603,655.5 603.5,655.5 604,655.5 604.5,655.5 605,655.5 605.5,655.5 606,655.5 606.5,655.5 607,655.5 607.5,655.5 608,655.5 608.5,655.5 609,655.5 609.5,655.5 610,655.5 610.5,655.5 611,655.5 611.5,655.5 612,655.5 612.5,655.5 613,655.5 613.5,655.5 614,655.5 614.5,655.5 615,655.5 615.5,655.5 616,655.5 616.5,655.5 617,655.5 617.5,655.5 618,655.5 618.5,655.5 619,655.5 619.5,655.5 620,655.5 620.5,655.5 621,655.5 621.5,655.5 622,655.5 622.5,655.5 623,655.5 623.5,655.5 624,655.5 624.5,655.5 625,655.5 625.5,655.5 626,655.5 626.5,655.5 627,655.5 627.5,655.5 628,655.5 628.5,655.5 629,655.5 629.5,655.5 630,655.5 630.5,655.5 631,655.5 631.5,655.5 632,655.5 632.5,655.5 633,655.5 633.5,655.5 634,655.5 634.5,655.5 635,655.5 635.5,655.5 636,655.5 636.5,655.5 637,655.5 637.5,655.5 638,655.5 638.5,655.5 639,655.5 639.5,655.5 640,655.5 640.5,655.5 641,655.5 641.5,655.5 642,655.5 642.5,655.5 643,655.5 643.5,655.5 644,655.5 644.5,655.5 645,655.5 645.5,655.5 646,655.5 646.5,655.5 647,655.5 647.5,655.5 648,655.5 648.5,655.5 649,655.5 649.5,655.5 650,655.5 650.5,655.5 651,655.5 651.5,655.5 652,655.5 652.5,655.5 653,655.5 653.5,655.5 654,655.5 654.5,655.5 655,655.5 655.5,655.5 656,655.5 656.5,655.5 657,655.5 657.5,655.5 658,655.5 658.5,655.5 659,655.5 659.5,655.5 660,655.5 660.5,655.5 661,655.5 661.5,655.5 662,655.5 662.5,655.5 663,655.5 663.5,655.5 664,655.5 664.5,655.5 665,655.5 665.5,655.5 666,655.5 666.5,655.5 667,655.5 667.5,655.5 668,655.5 668.5,655.5 669,655.5 669.5,655.5 670,655.5 670.5,655.5 671,655.5 671.5,655.5 672,655.5 672.5,655.5 673,655.5 673.5,655.5 674,655.5 674.5,655.5 675,655.5 675.5,655.5 676,655.5 676.5,655.5 677,655.5 677.5,655.5 678,655.5 678.5,655.5 679,655.5 679.5,655.5 680,655.5 680.5,655.5 681,655.5 681.5,655.5 682,655.5 682.5,655.5 683,655.5 683.5,655.5 684,655.5 684.5,655.5 685,655.5 685.5,655.5 686,655.5 686.5,655.5 687,655.5 687.5,655.5" fill="none" stroke="#ff0000" stroke-linecap="square"/><polyline points="449.5,655 450,655 450.5,655 451,655 451.5,655 452,655 452.5,655 453,655 453.5,655 454,655 454.5,655 455,655 455.5,655 456,655 456.5,655 457,654.5 457.5,654.5 458,654.5 458.5,654.5 459,654.5 459.5,654.5 460,654.5 460.5,654.5 461,654.5 461.5,654.5 462,654.5 462.5,654.5 463,654.5 463.5,654.5 464,654.5 464.5,654.5 465,654.5 465.5,654.5 466,654.5 466.5,654.5 467,654.5 467.5,654 468,654 468.5,654 469,654 469.5,654 470,654 470.5,654 471,654 471.5,654 472,654 472.5,654 473,654 473.5,654 474,654 474.5,654 474.5,653.5 475,653.5 475.5,653.5 476,653.5 476.5,653.5 477,653.5 477.5,653.5 478,653.5 478.5,653.5 479,653.5 479.5,653.5 480,653.5 480,653 480.5,653 481,653 481.5,653 482,653 482.5,653 483,653 483.5,653 484,653 484,652.5 484.5,652.5 485,652.5 485.5,652.5 486,652.5 486.5,652.5 487,652.5 487.5,652.5 487.5,652 488,652 488.5,652 489,652 489.5,652 490,652 490.5,652 491,651.5 491.5,651.5 492,651.5 492.5,651.5 493,651.5 493.5,651 494,651 494.5,651 495,651 495.5,651 496,650.5 496.5,650.5 497,650.5 497.5,650.5 498,650 498.5,650 499,650 499.5,650 500,649.5 500.5,649.5 501,649.5 501.5,649.5 502,649 502.5,649 503,649 503.5,648.5 504,648.5 504.5,648.5 505,648.5 505,648 505.5,648 506,648 506.5,647.5 507,647.5 507.5,647.5 508,647 508.5,647 509,647 509,646.5 509.5,646.5 510,646.5 510.5,646.5 510.5,646 511,646 511.5,646 511.5,645.5 512,645.5 512.5,645.5 512.5,645 513,645 513.5,645 514,644.5 514.5,644.5 515,644 515.5,644 516,643.5 516.5,643.5 517,643 517.5,643 518,642.5 518.5,642.5 518.5,642 519,642 519.5,642 519.5,641.5 520,641.5 520.5,641 521,641 521,640.5 521.5,640.5 522,640 522.5,640 523,639.5 523.5,639.5 523.5,639 524,639 524.5,638.5 525,638 525.5,638 526,637.5 526.5,637 527,637 527,636.5 527.5,636.5 527.5,636 528,636 528.5,635.5 529,635.5 529,635 529.5,635 529.5,634.5 530,634.5 530,634 530.5,634 531,633.5 531.5,633.5 531.5,633 532,633 532,632.5 532.5,632.5 532.5,632 533,632 533,631.5 533.5,631.5 533.5,631 534,631 534.5,630.5 535,630 535.5,629.5 536,629 536.5,628.5 537,628 537.5,628 537.5,627.5 538,627.5 538,627 538.5,626.5 539,626 539.5,625.5 540,625 540.5,625 540.5,624.5 541,624 541.5,623.5 542,623 542.5,622.5 542.5,622 543,622 543.5,621.5 544,621 544.5,620.5 544.5,620 545,620 545,619.5 545.5,619.5 545.5,619 546,619 546.5,618.5 546.5,618 547,618 547,617.5 547.5,617.5 547.5,617 548,616.5 548.5,616 549,615.5 549.5,615.5 549.5,615 550,614.5 550.5,614 551,613.5 551.5,613 551.5,612.5 552,612.5 552.5,612 553,611.5 553.5,611 554,610.5 554.5,610 555,609.5 555.5,609 556,609 556,608.5 556.5,608.5 556.5,608 557,608 557,607.5 557.5,607.5 557.5,607 558,607 558.5,606.5 559,606.5 559,606 559.5,606 560,605.5 560.5,605.5 560.5,605 561,605 561.5,604.5 562,604.5 562.5,604 563,604 563.5,603.5 564,603.5 564.5,603 565,603 565.5,603 566,603 566,602.5 566.5,602.5 567,602.5 567.5,602.5 568,602.5 568.5,602.5 569,602.5 569.5,602.5 570,602.5 570.5,602.5 571,603 571.5,603 572,603 572.5,603 572.5,603.5 573,603.5 573.5,603.5 574,604 574.5,604 574.5,604.5 575,604.5 575.5,605 576,605 576,605.5 576.5,605.5 577,606 577.5,606 577.5,606.5 578,606.5 578,607 578.5,607 578.5,607.5 579,607.5 579,608 579.5,608 580,608.5 580,609 580.5,609 580.5,609.5 581,609.5 581,610 581.5,610.5 582,611 582.5,611.5 583,612 583.5,612.5 583.5,613 584,613.5 584.5,614 584.5,614.5 585,614.5 585,615 585.5,615.5 586,616 586.5,616.5 586.5,617 587,617.5 587.5,618 587.5,618.5 588,619 588.5,619.5 589,620 589,620.5 589.5,620.5 589.5,621 590,621.5 590,622 590.5,622 590.5,622.5 591,623 591,623.5 591.5,624 592,624 592,624.5 592.5,625 592.5,625.5 593,625.5 593,626 593.5,626.5 593.5,627 594,627 594,627.5 594.5,628 595,628.5 595.5,629 595.5,629.5 596,630 596.5,630.5 596.5,631 597,631 597,631.5 597.5,632 598,632 598,632.5 598.5,633 598.5,633.5 599,633.5 599,634 599.5,634.5 600,635 600.5,635.5 601,636 601.5,636.5 602,637 602,637.5 602.5,637.5 602.5,638 603,638 603,638.5 603.5,638.5 604,639 604,639.5 604.5,639.5 604.5,640 605,640 605,640.5 605.5,640.5 605.5,641 606,641 606,641.5 606.5,641.5 607,642 607.5,642 607.5,642.5 608,642.5 608,643 608.5,643 608.5,643.5 609,643.5 609,644 609.5,644 610,644 610,644.5 610.5,644.5 611,645 611.5,645.5 612,645.5 612,646 612.5,646 613,646 613,646.5 613.5,646.5 614,647 614.5,647 615,647.5 615.5,647.5 616,648 616.5,648 617,648.5 617.5,648.5 618,649 618.5,649 619,649 619,649.5 619.5,649.5 620,649.5 620.5,650 621,650 621.5,650 622,650.5 622.5,650.5 623,650.5 623.5,651 624,651 624.5,651 625,651 625.5,651.5 626,651.5 626.5,651.5 627,651.5 627,652 627.5,652 628,652 628.5,652 629,652 629.5,652.5 630,652.5 630.5,652.5 631,652.5 631.5,652.5 632,652.5 632,653 632.5,653 633,653 633.5,653 634,653 634.5,653 635,653 635.5,653 635.5,653.5 636,653.5 636.5,653.5 637,653.5 637.5,653.5 638,653.5 638.5,653.5 639,653.5 639.5,653.5 640,654 640.5,654 641,654 641.5,654 642,654 642.5,654 643,654 643.5,654 644,654 644.5,654 645,654 645.5,654 646,654.5 646.5,654.5 647,654.5 647.5,654.5 648,654.5 648.5,654.5 649,654.5 649.5,654.5 650,654.5 650.5,654.5 651,654.5 651.5,654.5 652,654.5 652.5,654.5 653,654.5 653.5,654.5 654,654.5 654.5,654.5 655,654.5 655.5,654.5 656,655 656.5,655 657,655 657.5,655 658,655 658.5,655 659,655 659.5,655 660,655 660.5,655 661,655 661.5,655 662,655 662.5,655 663,655 663.5,655 664,655 664.5,655 665,655 665.5,655 666,655 666.5,655 667,655 667.5,655 668,655 668.5,655 669,655 669.5,655 670,655 670.5,655 671,655 671.5,655 672,655 672.5,655 673,655 673.5,655 674,655 674.5,655 675,655 675.5,655 676,655 676.5,655 677,655 677.5,655 678,655 678.5,655 679,655 679.5,655 680,655 680.5,655 681,655.5 681.5,655.5 682,655.5 682.5,655.5 683,655.5 683.5,655.5 684,655.5 684.5,655.5 685,655.5 685.5,655.5 686,655.5 686.5,655.5 687,655.5 687.5,655.5 688,655.5 688.5,655.5 689,655.5 689.5,655.5 690,655.5 690.5,655.5 691,655.5 691.5,655.5 692,655.5 692.5,655.5 693,655.5 693.5,655.5 694,655.5 694.5,655.5 695,655.5 695.5,655.5 696,655.5 696.5,655.5 697,655.5 697.5,655.5 698,655.5 698.5,655.5 699,655.5 699.5,655.5 700,655.5 700.5,655.5 701,655.5 701.5,655.5 702,655.5 702.5,655.5 703,655.5 703.5,655.5 704,655.5 704.5,655.5 705,655.5 705.5,655.5 706,655.5 706.5,655.5 707,655.5 707.5,655.5 708,655.5 708.5,655.5 709,655.5 709.5,655.5 710,655.5 710.5,655.5 711,655.5 711.5,655.5 712,655.5 712.5,655.5 713,655.5 713.5,655.5 714,655.5 714.5,655.5 715,655.5 715.5,655.5 716,655.5 716.5,655.5 717,655.5 717.5,655.5 718,655.5 718.5,655.5 719,655.5 719.5,655.5 720,655.5 720.5,655.5 721,655.5 721.5,655.5 722,655.5 722.5,655.5 723,655.5 723.5,655.5 724,655.5 724.5,655.5 725,655.5 725.5,655.5 726,655.5 726.5,655.5 727,655.5 727.5,655.5 728,655.5 728.5,655.5 729,655.5 729.5,655.5 730,655.5 730.5,655.5 731,655.5 731.5,655.5 732,655.5 732.5,655.5 733,655.5 733.5,655.5 734,655.5 734.5,655.5 735,655.5 735.5,655.5 736,655.5 736.5,655.5 737,655.5 737.5,655.5 738,655.5 738.5,655.5 739,655.5 739.5,655.5 740,655.5 740.5,655.5 741,655.5 741.5,655.5 742,655.5 742.5,655.5 743,655.5 743.5,655.5 744,655.5 744.5,655.5 745,655.5 745.5,655.5 746,655.5 746.5,655.5 747,655.5 747.5,655.5 748,655.5 748.5,655.5 749,655.5 749.5,655.5 750,655.5 750.5,655.5 751,655.5 751.5,655.5 752,655.5 752.5,655.5 753,655.5 753.5,655.5 754,655.5 754.5,655.5 755,655.5 755.5,655.5 756,655.5 756.5,655.5 757,655.5 757.5,655.5 758,655.5 758.5,655.5 759,655.5 759.5,655.5 760,655.5 760.5,655.5 761,655.5 761.5,655.5 762,655.5 762.5,655.5 763,655.5 763.5,655.5 764,655.5 764.5,655.5 765,655.5 765.5,655.5 766,655.5 766.5,655.5 767,655.5 767.5,655.5 768,655.5 768.5,655.5 769,655.5 769.5,655.5 770,655.5 770.5,655.5 771,655.5 771.5,655.5 772,655.5 772.5,655.5 773,655.5 773.5,655.5 774,655.5 774.5,655.5 775,655.5 775.5,655.5 776,655.5 776.5,655.5 777,655.5 777.5,655.5 778,655.5 778.5,655.5 779,655.5 779.5,655.5 780,655.5 780.5,655.5 781,655.5 781.5,655.5 782,655.5 782.5,655.5 783,655.5 783.5,655.5 784,655.5 784.5,655.5 785,655.5 785.5,655.5 786,655.5 786.5,655.5 787,655.5 787.5,655.5 788,655.5 788.5,655.5 789,655.5 789.5,655.5 790,655.5 790.5,655.5 791,655.5 791.5,655.5 792,655.5 792.5,655.5 793,655.5 793.5,655.5 794,655.5 794.5,655.5 795,655.5 795.5,655.5 796,655.5 796.5,655.5" fill="none" stroke="#0096ff" stroke-linecap="square"/><line x1="661" y1="159.5" x2="671" y2="159.5" stroke="#ff0000"/><line x1="661" y1="173.5" x2="671" y2="173.5" stroke="#00ff00"/><line x1="661" y1="187.5" x2="671" y2="187.5" stroke="#0096ff"/><path d="M486,582 L486,606.5 L491.8,600.8 L496,608.8 L499.2,607.5 L495.3,599 L503.3,599 Z" fill="#fff" shape-rendering="auto"/>
</svg>
<div class="t" style="right:758px;text-align:right;top:265px;height:14px;font-size:11px;color:#fff;">0.0</div><div class="t" style="right:758px;text-align:right;top:248px;height:14px;font-size:11px;color:#fff;">10.0</div><div class="t" style="right:758px;text-align:right;top:230px;height:14px;font-size:11px;color:#fff;">20.0</div><div class="t" style="right:758px;text-align:right;top:212px;height:14px;font-size:11px;color:#fff;">30.0</div><div class="t" style="right:758px;text-align:right;top:195px;height:14px;font-size:11px;color:#fff;">40.0</div><div class="t" style="right:758px;text-align:right;top:177px;height:14px;font-size:11px;color:#fff;">50.0</div><div class="t" style="right:758px;text-align:right;top:159px;height:14px;font-size:11px;color:#fff;">60.0</div><div class="t" style="right:758px;text-align:right;top:141px;height:14px;font-size:11px;color:#fff;">70.0</div><div class="t" style="left:40px;top:277px;height:14px;font-size:11px;color:#fff;">0.0</div><div class="t" style="left:67px;top:277px;height:14px;font-size:11px;color:#fff;">1.0</div><div class="t" style="left:95px;top:277px;height:14px;font-size:11px;color:#fff;">2.0</div><div class="t" style="left:122px;top:277px;height:14px;font-size:11px;color:#fff;">3.0</div><div class="t" style="left:149px;top:277px;height:14px;font-size:11px;color:#fff;">4.0</div><div class="t" style="left:176px;top:277px;height:14px;font-size:11px;color:#fff;">5.0</div><div class="t" style="left:204px;top:277px;height:14px;font-size:11px;color:#fff;">6.0</div><div class="t" style="left:231px;top:277px;height:14px;font-size:11px;color:#fff;">7.0</div><div class="t" style="left:258px;top:277px;height:14px;font-size:11px;color:#fff;">8.0</div><div class="t" style="left:285px;top:277px;height:14px;font-size:11px;color:#fff;">9.0</div><div class="t" style="left:313px;top:277px;height:14px;font-size:11px;color:#fff;">10.0</div><div class="t" style="left:340px;top:277px;height:14px;font-size:11px;color:#fff;">11.0</div><div class="t" style="left:367px;top:277px;height:14px;font-size:11px;color:#fff;">12.0</div><div style="position:absolute;left:305px;top:290px;width:60px;height:13px;background:#000"></div><div class="t" style="left:270px;width:120px;text-align:center;top:287px;height:14px;font-size:11px;color:#fff;">Time(sec)</div><div class="t" style="left:11px;top:115px;height:14px;font-size:12px;color:#fff;letter-spacing:0.4px">h(km)</div><div class="t" style="right:758px;text-align:right;top:456px;height:14px;font-size:11px;color:#fff;">0.0</div><div class="t" style="right:758px;text-align:right;top:441px;height:14px;font-size:11px;color:#fff;">2.0</div><div class="t" style="right:758px;text-align:right;top:425px;height:14px;font-size:11px;color:#fff;">4.0</div><div class="t" style="right:758px;text-align:right;top:409px;height:14px;font-size:11px;color:#fff;">6.0</div><div class="t" style="right:758px;text-align:right;top:393px;height:14px;font-size:11px;color:#fff;">8.0</div><div class="t" style="right:758px;text-align:right;top:377px;height:14px;font-size:11px;color:#fff;">10.0</div><div class="t" style="right:758px;text-align:right;top:361px;height:14px;font-size:11px;color:#fff;">12.0</div><div class="t" style="right:758px;text-align:right;top:345px;height:14px;font-size:11px;color:#fff;">14.0</div><div class="t" style="right:758px;text-align:right;top:329px;height:14px;font-size:11px;color:#fff;">16.0</div><div class="t" style="right:758px;text-align:right;top:314px;height:14px;font-size:11px;color:#fff;">18.0</div><div class="t" style="left:40px;top:468px;height:14px;font-size:11px;color:#fff;">0.0</div><div class="t" style="left:67px;top:468px;height:14px;font-size:11px;color:#fff;">1.0</div><div class="t" style="left:95px;top:468px;height:14px;font-size:11px;color:#fff;">2.0</div><div class="t" style="left:122px;top:468px;height:14px;font-size:11px;color:#fff;">3.0</div><div class="t" style="left:149px;top:468px;height:14px;font-size:11px;color:#fff;">4.0</div><div class="t" style="left:176px;top:468px;height:14px;font-size:11px;color:#fff;">5.0</div><div class="t" style="left:204px;top:468px;height:14px;font-size:11px;color:#fff;">6.0</div><div class="t" style="left:231px;top:468px;height:14px;font-size:11px;color:#fff;">7.0</div><div class="t" style="left:258px;top:468px;height:14px;font-size:11px;color:#fff;">8.0</div><div class="t" style="left:285px;top:468px;height:14px;font-size:11px;color:#fff;">9.0</div><div class="t" style="left:313px;top:468px;height:14px;font-size:11px;color:#fff;">10.0</div><div class="t" style="left:340px;top:468px;height:14px;font-size:11px;color:#fff;">11.0</div><div class="t" style="left:367px;top:468px;height:14px;font-size:11px;color:#fff;">12.0</div><div style="position:absolute;left:305px;top:481px;width:60px;height:13px;background:#000"></div><div class="t" style="left:270px;width:120px;text-align:center;top:478px;height:14px;font-size:11px;color:#fff;">Time(sec)</div><div class="t" style="left:11px;top:294px;height:14px;font-size:12px;color:#fff;letter-spacing:0.4px">v(km/s)</div><div class="t" style="right:358px;text-align:right;top:456px;height:14px;font-size:11px;color:#fff;">0.0</div><div class="t" style="right:358px;text-align:right;top:439px;height:14px;font-size:11px;color:#fff;">2.0</div><div class="t" style="right:358px;text-align:right;top:421px;height:14px;font-size:11px;color:#fff;">4.0</div><div class="t" style="right:358px;text-align:right;top:403px;height:14px;font-size:11px;color:#fff;">6.0</div><div class="t" style="right:358px;text-align:right;top:385px;height:14px;font-size:11px;color:#fff;">8.0</div><div class="t" style="right:358px;text-align:right;top:367px;height:14px;font-size:11px;color:#fff;">10.0</div><div class="t" style="right:358px;text-align:right;top:349px;height:14px;font-size:11px;color:#fff;">12.0</div><div class="t" style="right:358px;text-align:right;top:331px;height:14px;font-size:11px;color:#fff;">14.0</div><div class="t" style="right:358px;text-align:right;top:313px;height:14px;font-size:11px;color:#fff;">16.0</div><div class="t" style="left:440px;top:468px;height:14px;font-size:11px;color:#fff;">0.0</div><div class="t" style="left:467px;top:468px;height:14px;font-size:11px;color:#fff;">1.0</div><div class="t" style="left:495px;top:468px;height:14px;font-size:11px;color:#fff;">2.0</div><div class="t" style="left:522px;top:468px;height:14px;font-size:11px;color:#fff;">3.0</div><div class="t" style="left:549px;top:468px;height:14px;font-size:11px;color:#fff;">4.0</div><div class="t" style="left:576px;top:468px;height:14px;font-size:11px;color:#fff;">5.0</div><div class="t" style="left:604px;top:468px;height:14px;font-size:11px;color:#fff;">6.0</div><div class="t" style="left:631px;top:468px;height:14px;font-size:11px;color:#fff;">7.0</div><div class="t" style="left:658px;top:468px;height:14px;font-size:11px;color:#fff;">8.0</div><div class="t" style="left:685px;top:468px;height:14px;font-size:11px;color:#fff;">9.0</div><div class="t" style="left:713px;top:468px;height:14px;font-size:11px;color:#fff;">10.0</div><div class="t" style="left:740px;top:468px;height:14px;font-size:11px;color:#fff;">11.0</div><div class="t" style="left:767px;top:468px;height:14px;font-size:11px;color:#fff;">12.0</div><div style="position:absolute;left:705px;top:481px;width:60px;height:13px;background:#000"></div><div class="t" style="left:670px;width:120px;text-align:center;top:478px;height:14px;font-size:11px;color:#fff;">Time(sec)</div><div class="t" style="left:411px;top:294px;height:14px;font-size:12px;color:#fff;letter-spacing:0.4px">-dv(km/s^2)</div><div class="t" style="right:758px;text-align:right;top:647px;height:14px;font-size:11px;color:#fff;">0.000</div><div class="t" style="right:758px;text-align:right;top:632px;height:14px;font-size:11px;color:#fff;">0.023</div><div class="t" style="right:758px;text-align:right;top:616px;height:14px;font-size:11px;color:#fff;">0.046</div><div class="t" style="right:758px;text-align:right;top:600px;height:14px;font-size:11px;color:#fff;">0.069</div><div class="t" style="right:758px;text-align:right;top:584px;height:14px;font-size:11px;color:#fff;">0.092</div><div class="t" style="right:758px;text-align:right;top:568px;height:14px;font-size:11px;color:#fff;">0.115</div><div class="t" style="right:758px;text-align:right;top:552px;height:14px;font-size:11px;color:#fff;">0.138</div><div class="t" style="right:758px;text-align:right;top:536px;height:14px;font-size:11px;color:#fff;">0.161</div><div class="t" style="right:758px;text-align:right;top:520px;height:14px;font-size:11px;color:#fff;">0.184</div><div class="t" style="right:758px;text-align:right;top:504px;height:14px;font-size:11px;color:#fff;">0.207</div><div class="t" style="left:40px;top:659px;height:14px;font-size:11px;color:#fff;">0.0</div><div class="t" style="left:67px;top:659px;height:14px;font-size:11px;color:#fff;">1.0</div><div class="t" style="left:95px;top:659px;height:14px;font-size:11px;color:#fff;">2.0</div><div class="t" style="left:122px;top:659px;height:14px;font-size:11px;color:#fff;">3.0</div><div class="t" style="left:149px;top:659px;height:14px;font-size:11px;color:#fff;">4.0</div><div class="t" style="left:176px;top:659px;height:14px;font-size:11px;color:#fff;">5.0</div><div class="t" style="left:204px;top:659px;height:14px;font-size:11px;color:#fff;">6.0</div><div class="t" style="left:231px;top:659px;height:14px;font-size:11px;color:#fff;">7.0</div><div class="t" style="left:258px;top:659px;height:14px;font-size:11px;color:#fff;">8.0</div><div class="t" style="left:285px;top:659px;height:14px;font-size:11px;color:#fff;">9.0</div><div class="t" style="left:313px;top:659px;height:14px;font-size:11px;color:#fff;">10.0</div><div class="t" style="left:340px;top:659px;height:14px;font-size:11px;color:#fff;">11.0</div><div class="t" style="left:367px;top:659px;height:14px;font-size:11px;color:#fff;">12.0</div><div style="position:absolute;left:305px;top:672px;width:60px;height:13px;background:#000"></div><div class="t" style="left:270px;width:120px;text-align:center;top:669px;height:14px;font-size:11px;color:#fff;">Time(sec)</div><div class="t" style="left:11px;top:485px;height:14px;font-size:12px;color:#fff;letter-spacing:0.4px">m(kg)</div><div class="t" style="right:358px;text-align:right;top:647px;height:14px;font-size:11px;color:#fff;">0.000</div><div class="t" style="right:358px;text-align:right;top:632px;height:14px;font-size:11px;color:#fff;">0.023</div><div class="t" style="right:358px;text-align:right;top:616px;height:14px;font-size:11px;color:#fff;">0.046</div><div class="t" style="right:358px;text-align:right;top:600px;height:14px;font-size:11px;color:#fff;">0.069</div><div class="t" style="right:358px;text-align:right;top:584px;height:14px;font-size:11px;color:#fff;">0.092</div><div class="t" style="right:358px;text-align:right;top:568px;height:14px;font-size:11px;color:#fff;">0.115</div><div class="t" style="right:358px;text-align:right;top:552px;height:14px;font-size:11px;color:#fff;">0.138</div><div class="t" style="right:358px;text-align:right;top:536px;height:14px;font-size:11px;color:#fff;">0.161</div><div class="t" style="right:358px;text-align:right;top:520px;height:14px;font-size:11px;color:#fff;">0.184</div><div class="t" style="right:358px;text-align:right;top:504px;height:14px;font-size:11px;color:#fff;">0.207</div><div class="t" style="left:440px;top:659px;height:14px;font-size:11px;color:#fff;">0.0</div><div class="t" style="left:467px;top:659px;height:14px;font-size:11px;color:#fff;">1.0</div><div class="t" style="left:495px;top:659px;height:14px;font-size:11px;color:#fff;">2.0</div><div class="t" style="left:522px;top:659px;height:14px;font-size:11px;color:#fff;">3.0</div><div class="t" style="left:549px;top:659px;height:14px;font-size:11px;color:#fff;">4.0</div><div class="t" style="left:576px;top:659px;height:14px;font-size:11px;color:#fff;">5.0</div><div class="t" style="left:604px;top:659px;height:14px;font-size:11px;color:#fff;">6.0</div><div class="t" style="left:631px;top:659px;height:14px;font-size:11px;color:#fff;">7.0</div><div class="t" style="left:658px;top:659px;height:14px;font-size:11px;color:#fff;">8.0</div><div class="t" style="left:685px;top:659px;height:14px;font-size:11px;color:#fff;">9.0</div><div class="t" style="left:713px;top:659px;height:14px;font-size:11px;color:#fff;">10.0</div><div class="t" style="left:740px;top:659px;height:14px;font-size:11px;color:#fff;">11.0</div><div class="t" style="left:767px;top:659px;height:14px;font-size:11px;color:#fff;">12.0</div><div style="position:absolute;left:705px;top:672px;width:60px;height:13px;background:#000"></div><div class="t" style="left:670px;width:120px;text-align:center;top:669px;height:14px;font-size:11px;color:#fff;">Time(sec)</div><div class="t" style="left:411px;top:485px;height:14px;font-size:12px;color:#fff;letter-spacing:0.4px">-dm(kg/s)</div><div class="t" style="left:465px;top:143px;height:14px;font-size:12px;color:#fff;letter-spacing:-0.08px">Me= 0.200 kg</div><div class="t" style="left:465px;top:157px;height:14px;font-size:12px;color:#fff;letter-spacing:-0.08px">Ve= 17.4 km/s</div><div class="t" style="left:465px;top:171px;height:14px;font-size:12px;color:#fff;letter-spacing:-0.08px">He= 78.9 km</div><div class="t" style="left:465px;top:185px;height:14px;font-size:12px;color:#fff;letter-spacing:-0.08px">EA= 29.5 deg</div><div class="t" style="left:465px;top:199px;height:14px;font-size:12px;color:#fff;letter-spacing:-0.08px">Ds= 8000 kg/m^3</div><div class="t" style="left:465px;top:213px;height:14px;font-size:12px;color:#fff;letter-spacing:-0.08px">Cd= 1.00</div><div class="t" style="left:465px;top:227px;height:14px;font-size:12px;color:#fff;letter-spacing:-0.08px">ht= 0.70</div><div class="t" style="left:465px;top:241px;height:14px;font-size:12px;color:#fff;letter-spacing:-0.08px">Q = 4000 cal/g</div><div class="t" style="left:677px;top:151px;height:14px;font-size:12px;color:#ff0000;">ht=1.05</div><div class="t" style="left:677px;top:165px;height:14px;font-size:12px;color:#00ff00;">ht=0.70</div><div class="t" style="left:677px;top:179px;height:14px;font-size:12px;color:#0096ff;">ht=0.35</div>
<div style="position:absolute;left:0;top:0;width:1px;height:376px;background:#222"></div><div style="position:absolute;left:0;top:376px;width:1px;height:313px;background:linear-gradient(#959595,#a8a8a8)"></div><div style="position:absolute;left:1px;top:30px;width:1px;height:659px;background:#fff"></div>
</body></html>
